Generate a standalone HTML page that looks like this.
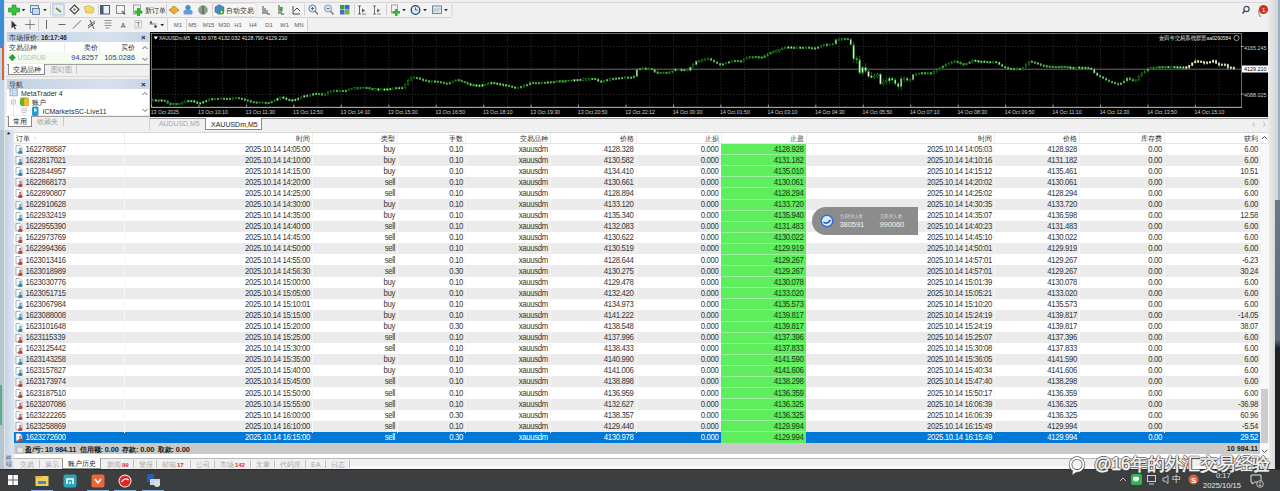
<!DOCTYPE html><html><head><meta charset="utf-8"><style>
*{margin:0;padding:0;box-sizing:border-box}
html,body{width:1280px;height:491px;overflow:hidden;background:#f0f0f0;font-family:"Liberation Sans",sans-serif;color:#303030}
.a{position:absolute}
.t{position:absolute;white-space:nowrap;font-size:7.1px;line-height:11px}
.r{text-align:right}
</style></head><body>

<div class="a" style="left:0;top:0;width:3.5px;height:48px;background:#3d8ed8"></div>
<div class="a" style="left:0;top:48px;width:3.5px;height:82px;background:#c4d6e8"></div>
<div class="a" style="left:2px;top:45px;width:1.5px;height:35px;background:#d0683e"></div>
<div class="a" style="left:0;top:130px;width:3.5px;height:339px;background:#b4c6d2"></div>
<div class="a" style="left:0;top:385px;width:1.5px;height:40px;background:#5aae8e"></div>
<div class="a" style="left:3.5px;top:0;width:2.5px;height:469px;background:#e4e4e4"></div>
<div class="a" style="left:5px;top:0;width:1275px;height:2px;background:#f3edf0"></div>
<div class="a" style="left:5px;top:2px;width:1263px;height:1px;background:#d8d8d8"></div>
<div class="a" style="left:5px;top:16.5px;width:447px;height:1px;background:#d4d4d4"></div>
<div class="a" style="left:5px;top:3px;width:447px;height:13.5px;background:#f2f2f2"></div>
<div class="a" style="left:5px;top:17.5px;width:303px;height:14.5px;background:#f2f2f2"></div>
<svg class="a" style="left:0;top:0" width="460" height="32"><line x1="50.5" y1="4" x2="50.5" y2="15.5" stroke="#d0d0d0" stroke-width="1"/><line x1="98.5" y1="4" x2="98.5" y2="15.5" stroke="#d0d0d0" stroke-width="1"/><line x1="166.5" y1="4" x2="166.5" y2="15.5" stroke="#d0d0d0" stroke-width="1"/><line x1="212.5" y1="4" x2="212.5" y2="15.5" stroke="#d0d0d0" stroke-width="1"/><line x1="255.5" y1="4" x2="255.5" y2="15.5" stroke="#d0d0d0" stroke-width="1"/><line x1="304.5" y1="4" x2="304.5" y2="15.5" stroke="#d0d0d0" stroke-width="1"/><line x1="354.5" y1="4" x2="354.5" y2="15.5" stroke="#d0d0d0" stroke-width="1"/><line x1="386.5" y1="4" x2="386.5" y2="15.5" stroke="#d0d0d0" stroke-width="1"/><line x1="452" y1="4" x2="452" y2="15.5" stroke="#d0d0d0" stroke-width="1"/><rect x="168" y="18" width="139.5" height="13.5" fill="#f6f6f6"/><rect x="213" y="3.5" width="43" height="13" fill="#f7f7f7" stroke="#dadada" stroke-width="0.6"/><rect x="52.5" y="3.5" width="12" height="13" fill="#eef3f8" stroke="#d6dde6" stroke-width="0.6"/><line x1="38.5" y1="18.5" x2="38.5" y2="31" stroke="#d0d0d0" stroke-width="1"/><line x1="167.5" y1="18.5" x2="167.5" y2="31" stroke="#d0d0d0" stroke-width="1"/><line x1="186.5" y1="18.5" x2="186.5" y2="31" stroke="#d0d0d0" stroke-width="1"/><line x1="307.5" y1="18.5" x2="307.5" y2="31" stroke="#d0d0d0" stroke-width="1"/><path d="M12 5 H16 V8 H19.5 V12 H16 V15 H12 V12 H8.5 V8 H12 Z" fill="#3cc03c" stroke="#1e8a1e" stroke-width="0.6"/><path d="M21.7 9 L25.3 9 L23.5 11.2 Z" fill="#222"/><rect x="30.5" y="5.5" width="8" height="7" fill="#dce8f4" stroke="#5a7aa0" stroke-width="0.9"/><rect x="32.5" y="8.5" width="7" height="6" fill="#c8d8ea" stroke="#5a7aa0" stroke-width="0.9"/><path d="M43.2 9 L46.8 9 L45 11.2 Z" fill="#222"/><rect x="53" y="4" width="11" height="11" fill="#e4eef8" stroke="#9ab4d0" stroke-width="0.7"/><path d="M56 8 L61 12" stroke="#8a8a30" stroke-width="1.8"/><path d="M74.5 5 L79 9.5 L74.5 14 L70 9.5 Z" fill="none" stroke="#444" stroke-width="1.1"/><circle cx="74.5" cy="9.5" r="1" fill="#444"/><path d="M84 7 L89 5.5 L94 8 L93 13 L86 13 Z" fill="#f2d86a" stroke="#c8a838" stroke-width="0.6"/><rect x="100.5" y="5.5" width="9" height="8.5" fill="#e8f0f8" stroke="#4a5a70" stroke-width="1"/><rect x="100.5" y="5.5" width="3" height="8.5" fill="#4a5a70"/><rect x="116.5" y="5.5" width="8" height="8" fill="#f4f4f4" stroke="#808080" stroke-width="0.9"/><path d="M122 11 L125 14.5" stroke="#6a5a40" stroke-width="1.2"/><rect x="133.5" y="5" width="7" height="9" fill="#f0f0f0" stroke="#909090" stroke-width="0.8"/><path d="M137 8 H140 V10.5 H142.5 V13.5 H140 V16 H137 V13.5 H134.5 V10.5 H137 Z" fill="#2eb82e"/><text x="145" y="12.8" font-family="Liberation Sans" font-size="7.2" fill="#2a2a2a" textLength="20.5" lengthAdjust="spacingAndGlyphs">新订单</text><path d="M169 10 L174 6 L179 10 L174 14 Z" fill="#e8b030" stroke="#a87818" stroke-width="0.7"/><circle cx="188" cy="7.5" r="2.6" fill="#4a8ad0"/><rect x="183.5" y="10" width="9" height="4.5" rx="1.5" fill="#6a9ad8"/><circle cx="203" cy="10" r="4.5" fill="#8aa08a" stroke="#a0a0a0" stroke-width="0.6"/><path d="M203 6 V14" stroke="#3a6a3a" stroke-width="1.2"/><path d="M215 7 L219 4.5 L224 7 V12 L219 14.5 L215 12 Z" fill="#4a88c8" stroke="#3a6a9a" stroke-width="0.5"/><circle cx="221.5" cy="12" r="2.5" fill="#2ea83a"/><circle cx="221.5" cy="12" r="1" fill="#fff"/><text x="226" y="12.8" font-family="Liberation Sans" font-size="7.2" fill="#2a2a2a" textLength="27.5" lengthAdjust="spacingAndGlyphs">自动交易</text><path d="M263 6 V14 M265 8 V14 M267 10 V14 H270" stroke="#333" stroke-width="0.9" fill="none"/><path d="M279 5 V14 M281 7 V14 H284" stroke="#333" stroke-width="0.9" fill="none"/><rect x="279.7" y="7" width="3" height="4" fill="#3aa83a"/><path d="M293 6 V14 H300 M294 11 L297 8 L300 11" stroke="#333" stroke-width="0.9" fill="none"/><circle cx="312.5" cy="8.5" r="3.6" fill="#d0e0f0" stroke="#5a7ab0" stroke-width="0.9"/><path d="M311 8.5 H314 M312.5 7 V10" stroke="#3a5a90" stroke-width="0.8"/><path d="M315 11 L318 14.5" stroke="#8a7050" stroke-width="1.3"/><circle cx="328" cy="8.5" r="3.6" fill="#d0e0f0" stroke="#7a9ac0" stroke-width="0.9"/><path d="M326.5 8.5 H329.5" stroke="#3a5a90" stroke-width="0.8"/><path d="M330.5 11 L333.5 14.5" stroke="#8a7050" stroke-width="1.3"/><rect x="340" y="5" width="4.5" height="4.5" fill="#3a9a4a"/><rect x="345" y="5" width="4.5" height="4.5" fill="#3a6ac8"/><rect x="340" y="10" width="4.5" height="4.5" fill="#4a6ac0"/><rect x="345" y="10" width="4.5" height="4.5" fill="#7ab040"/><path d="M359.5 6 V14 M358 14 H361 M358 6 H361" stroke="#444" stroke-width="0.8" fill="none"/><path d="M362 8.5 L365 10.5 L362 12.5 Z" fill="#555"/><path d="M362 14 H366" stroke="#666" stroke-width="0.8"/><path d="M374.5 6 V14 M373 14 H376 M373 6 H376" stroke="#555" stroke-width="0.8" fill="none"/><path d="M377 8.5 L380 10.5 L377 12.5 Z" fill="#666"/><path d="M377 14 H381" stroke="#777" stroke-width="0.8"/><rect x="391.5" y="5" width="6" height="8" fill="#f0f0f0" stroke="#909090" stroke-width="0.8"/><path d="M395 9 H397.5 V11 H400 V13.5 H397.5 V16 H395 V13.5 H392.5 V11 H395 Z" fill="#2eb82e"/><path d="M402.2 9 L405.8 9 L404 11.2 Z" fill="#222"/><circle cx="415.5" cy="10" r="4.3" fill="#dce8f4" stroke="#2a4a7a" stroke-width="1.3"/><path d="M415.5 7.5 V10 H417.5" stroke="#2a4a7a" stroke-width="0.8" fill="none"/><path d="M423.2 9 L426.8 9 L425 11.2 Z" fill="#222"/><rect x="432.5" y="6" width="9" height="7.5" fill="#e0e8f0" stroke="#6a7a8a" stroke-width="0.9"/><path d="M433 9 H441 M433 11 H439" stroke="#8a9aaa" stroke-width="0.6"/><path d="M444.2 9 L447.8 9 L446 11.2 Z" fill="#222"/><path d="M11.5 20.5 L11.5 28.5 L13.5 26.5 L15 29.5 L16 29 L14.7 26 L17 26 Z" fill="#333"/><path d="M30 19.5 V29.5 M25 24.5 H35" stroke="#666" stroke-width="0.8"/><path d="M46.5 20 V29" stroke="#555" stroke-width="0.9"/><path d="M58.5 24.5 H65.5" stroke="#555" stroke-width="0.9"/><path d="M73 28.5 L81 20.5" stroke="#555" stroke-width="0.9"/><path d="M88 26 L95 21 M88 28 L95 23 M90 20 L94 29" stroke="#444" stroke-width="0.9"/><path d="M104.5 20.5 H111.5 M104.5 23 H111.5 M104.5 25.5 H111.5 M105.5 28 H109.5" stroke="#666" stroke-width="0.7"/><text x="120.8" y="28" font-family="Liberation Sans" font-size="7" fill="#444">A</text><rect x="135" y="20.5" width="6.5" height="7.5" fill="none" stroke="#aaa" stroke-width="0.6"/><text x="136.3" y="27.3" font-family="Liberation Sans" font-size="6.5" fill="#555">T</text><circle cx="151" cy="22.5" r="1.2" fill="#555"/><circle cx="155.5" cy="26.5" r="1.3" fill="#333"/><path d="M149.5 24 L156.5 24" stroke="#666" stroke-width="0.8"/><path d="M160.39999999999998 24 L164.0 24 L162.2 26.2 Z" fill="#222"/><text x="178" y="27" text-anchor="middle" font-family="Liberation Sans" font-size="6" fill="#5c5c5c">M1</text><text x="192.5" y="27" text-anchor="middle" font-family="Liberation Sans" font-size="6" fill="#5c5c5c">M5</text><text x="208.5" y="27" text-anchor="middle" font-family="Liberation Sans" font-size="6" fill="#5c5c5c">M15</text><text x="224" y="27" text-anchor="middle" font-family="Liberation Sans" font-size="6" fill="#5c5c5c">M30</text><text x="238" y="27" text-anchor="middle" font-family="Liberation Sans" font-size="6" fill="#5c5c5c">H1</text><text x="253" y="27" text-anchor="middle" font-family="Liberation Sans" font-size="6" fill="#5c5c5c">H4</text><text x="269" y="27" text-anchor="middle" font-family="Liberation Sans" font-size="6" fill="#5c5c5c">D1</text><text x="284.5" y="27" text-anchor="middle" font-family="Liberation Sans" font-size="6" fill="#5c5c5c">W1</text><text x="299" y="27" text-anchor="middle" font-family="Liberation Sans" font-size="6" fill="#5c5c5c">MN</text></svg>
<svg class="a" style="left:1238px;top:3px" width="32" height="14"><circle cx="8.5" cy="6" r="2.6" fill="none" stroke="#3a4a6a" stroke-width="1.2"/><path d="M6.5 8 L4.5 10.5" stroke="#3a4a6a" stroke-width="1.5"/><path d="M21 7 Q20 12 23 14" stroke="#8a9aa0" stroke-width="1.2" fill="none"/><circle cx="25.5" cy="6.5" r="4.6" fill="#cc3422"/><text x="24" y="8.8" font-size="6" fill="#fff" font-family="Liberation Sans">1</text></svg>
<svg class="a" style="left:150px;top:32px" width="1118" height="85" viewBox="150 32 1118 85">
<rect x="150" y="32" width="1118" height="85" fill="#000"/>
<line x1="151.5" y1="33.5" x2="151.5" y2="107" stroke="#4a4a4a" stroke-width="0.8" stroke-dasharray="1 2"/>
<line x1="175.2" y1="33.5" x2="175.2" y2="107" stroke="#4a4a4a" stroke-width="0.8" stroke-dasharray="1 2"/>
<line x1="198.9" y1="33.5" x2="198.9" y2="107" stroke="#4a4a4a" stroke-width="0.8" stroke-dasharray="1 2"/>
<line x1="222.7" y1="33.5" x2="222.7" y2="107" stroke="#4a4a4a" stroke-width="0.8" stroke-dasharray="1 2"/>
<line x1="246.4" y1="33.5" x2="246.4" y2="107" stroke="#4a4a4a" stroke-width="0.8" stroke-dasharray="1 2"/>
<line x1="270.1" y1="33.5" x2="270.1" y2="107" stroke="#4a4a4a" stroke-width="0.8" stroke-dasharray="1 2"/>
<line x1="293.9" y1="33.5" x2="293.9" y2="107" stroke="#4a4a4a" stroke-width="0.8" stroke-dasharray="1 2"/>
<line x1="317.6" y1="33.5" x2="317.6" y2="107" stroke="#4a4a4a" stroke-width="0.8" stroke-dasharray="1 2"/>
<line x1="341.3" y1="33.5" x2="341.3" y2="107" stroke="#4a4a4a" stroke-width="0.8" stroke-dasharray="1 2"/>
<line x1="365.0" y1="33.5" x2="365.0" y2="107" stroke="#4a4a4a" stroke-width="0.8" stroke-dasharray="1 2"/>
<line x1="388.8" y1="33.5" x2="388.8" y2="107" stroke="#4a4a4a" stroke-width="0.8" stroke-dasharray="1 2"/>
<line x1="412.5" y1="33.5" x2="412.5" y2="107" stroke="#4a4a4a" stroke-width="0.8" stroke-dasharray="1 2"/>
<line x1="436.2" y1="33.5" x2="436.2" y2="107" stroke="#4a4a4a" stroke-width="0.8" stroke-dasharray="1 2"/>
<line x1="459.9" y1="33.5" x2="459.9" y2="107" stroke="#4a4a4a" stroke-width="0.8" stroke-dasharray="1 2"/>
<line x1="483.7" y1="33.5" x2="483.7" y2="107" stroke="#4a4a4a" stroke-width="0.8" stroke-dasharray="1 2"/>
<line x1="507.4" y1="33.5" x2="507.4" y2="107" stroke="#4a4a4a" stroke-width="0.8" stroke-dasharray="1 2"/>
<line x1="531.1" y1="33.5" x2="531.1" y2="107" stroke="#4a4a4a" stroke-width="0.8" stroke-dasharray="1 2"/>
<line x1="554.8" y1="33.5" x2="554.8" y2="107" stroke="#4a4a4a" stroke-width="0.8" stroke-dasharray="1 2"/>
<line x1="578.6" y1="33.5" x2="578.6" y2="107" stroke="#4a4a4a" stroke-width="0.8" stroke-dasharray="1 2"/>
<line x1="602.3" y1="33.5" x2="602.3" y2="107" stroke="#4a4a4a" stroke-width="0.8" stroke-dasharray="1 2"/>
<line x1="626.0" y1="33.5" x2="626.0" y2="107" stroke="#4a4a4a" stroke-width="0.8" stroke-dasharray="1 2"/>
<line x1="649.7" y1="33.5" x2="649.7" y2="107" stroke="#4a4a4a" stroke-width="0.8" stroke-dasharray="1 2"/>
<line x1="673.5" y1="33.5" x2="673.5" y2="107" stroke="#4a4a4a" stroke-width="0.8" stroke-dasharray="1 2"/>
<line x1="697.2" y1="33.5" x2="697.2" y2="107" stroke="#4a4a4a" stroke-width="0.8" stroke-dasharray="1 2"/>
<line x1="720.9" y1="33.5" x2="720.9" y2="107" stroke="#4a4a4a" stroke-width="0.8" stroke-dasharray="1 2"/>
<line x1="744.6" y1="33.5" x2="744.6" y2="107" stroke="#4a4a4a" stroke-width="0.8" stroke-dasharray="1 2"/>
<line x1="768.4" y1="33.5" x2="768.4" y2="107" stroke="#4a4a4a" stroke-width="0.8" stroke-dasharray="1 2"/>
<line x1="792.1" y1="33.5" x2="792.1" y2="107" stroke="#4a4a4a" stroke-width="0.8" stroke-dasharray="1 2"/>
<line x1="815.8" y1="33.5" x2="815.8" y2="107" stroke="#4a4a4a" stroke-width="0.8" stroke-dasharray="1 2"/>
<line x1="839.5" y1="33.5" x2="839.5" y2="107" stroke="#4a4a4a" stroke-width="0.8" stroke-dasharray="1 2"/>
<line x1="863.3" y1="33.5" x2="863.3" y2="107" stroke="#4a4a4a" stroke-width="0.8" stroke-dasharray="1 2"/>
<line x1="887.0" y1="33.5" x2="887.0" y2="107" stroke="#4a4a4a" stroke-width="0.8" stroke-dasharray="1 2"/>
<line x1="910.7" y1="33.5" x2="910.7" y2="107" stroke="#4a4a4a" stroke-width="0.8" stroke-dasharray="1 2"/>
<line x1="934.4" y1="33.5" x2="934.4" y2="107" stroke="#4a4a4a" stroke-width="0.8" stroke-dasharray="1 2"/>
<line x1="958.2" y1="33.5" x2="958.2" y2="107" stroke="#4a4a4a" stroke-width="0.8" stroke-dasharray="1 2"/>
<line x1="981.9" y1="33.5" x2="981.9" y2="107" stroke="#4a4a4a" stroke-width="0.8" stroke-dasharray="1 2"/>
<line x1="1005.6" y1="33.5" x2="1005.6" y2="107" stroke="#4a4a4a" stroke-width="0.8" stroke-dasharray="1 2"/>
<line x1="1029.3" y1="33.5" x2="1029.3" y2="107" stroke="#4a4a4a" stroke-width="0.8" stroke-dasharray="1 2"/>
<line x1="1053.1" y1="33.5" x2="1053.1" y2="107" stroke="#4a4a4a" stroke-width="0.8" stroke-dasharray="1 2"/>
<line x1="1076.8" y1="33.5" x2="1076.8" y2="107" stroke="#4a4a4a" stroke-width="0.8" stroke-dasharray="1 2"/>
<line x1="1100.5" y1="33.5" x2="1100.5" y2="107" stroke="#4a4a4a" stroke-width="0.8" stroke-dasharray="1 2"/>
<line x1="1124.2" y1="33.5" x2="1124.2" y2="107" stroke="#4a4a4a" stroke-width="0.8" stroke-dasharray="1 2"/>
<line x1="1148.0" y1="33.5" x2="1148.0" y2="107" stroke="#4a4a4a" stroke-width="0.8" stroke-dasharray="1 2"/>
<line x1="1171.7" y1="33.5" x2="1171.7" y2="107" stroke="#4a4a4a" stroke-width="0.8" stroke-dasharray="1 2"/>
<line x1="1195.4" y1="33.5" x2="1195.4" y2="107" stroke="#4a4a4a" stroke-width="0.8" stroke-dasharray="1 2"/>
<line x1="1219.1" y1="33.5" x2="1219.1" y2="107" stroke="#4a4a4a" stroke-width="0.8" stroke-dasharray="1 2"/>
<line x1="151" y1="46.5" x2="1241" y2="46.5" stroke="#3e3e3e" stroke-width="0.8" stroke-dasharray="1 2"/>
<line x1="151" y1="94.5" x2="1241" y2="94.5" stroke="#3e3e3e" stroke-width="0.8" stroke-dasharray="1 2"/>
<line x1="151" y1="69.2" x2="1241" y2="69.2" stroke="#484848" stroke-width="1.6"/>
<rect x="151.5" y="33.5" width="1090" height="74" fill="none" stroke="#9a9a9a" stroke-width="0.7"/><line x1="151" y1="107.3" x2="1242" y2="107.3" stroke="#c0c0c0" stroke-width="0.8"/>
<line x1="152.8" y1="99.8" x2="152.8" y2="101.8" stroke="#178017" stroke-width="0.8"/>
<rect x="152.0" y="99.7" width="1.5" height="1.6" fill="#000000" stroke="#1f9a1f" stroke-width="0.45"/>
<line x1="155.8" y1="99.5" x2="155.8" y2="101.1" stroke="#178017" stroke-width="0.8"/>
<rect x="155.0" y="99.7" width="1.5" height="1.6" fill="#eef4ea" stroke="#1f9a1f" stroke-width="0.45"/>
<line x1="158.7" y1="100.2" x2="158.7" y2="101.6" stroke="#178017" stroke-width="0.8"/>
<rect x="157.9" y="99.8" width="1.5" height="1.6" fill="#eef4ea" stroke="#1f9a1f" stroke-width="0.45"/>
<line x1="161.7" y1="99.9" x2="161.7" y2="101.6" stroke="#178017" stroke-width="0.8"/>
<rect x="160.9" y="99.7" width="1.5" height="1.6" fill="#eef4ea" stroke="#1f9a1f" stroke-width="0.45"/>
<line x1="164.7" y1="99.7" x2="164.7" y2="102.3" stroke="#178017" stroke-width="0.8"/>
<rect x="163.9" y="99.9" width="1.5" height="1.6" fill="#eef4ea" stroke="#1f9a1f" stroke-width="0.45"/>
<line x1="167.7" y1="99.9" x2="167.7" y2="104.0" stroke="#178017" stroke-width="0.8"/>
<rect x="166.8" y="101.1" width="1.5" height="2.0" fill="#eef4ea" stroke="#1f9a1f" stroke-width="0.45"/>
<line x1="170.6" y1="102.6" x2="170.6" y2="105.9" stroke="#178017" stroke-width="0.8"/>
<rect x="169.8" y="102.9" width="1.5" height="1.6" fill="#eef4ea" stroke="#1f9a1f" stroke-width="0.45"/>
<line x1="173.6" y1="103.3" x2="173.6" y2="104.9" stroke="#178017" stroke-width="0.8"/>
<rect x="172.8" y="103.3" width="1.5" height="1.6" fill="#000000" stroke="#1f9a1f" stroke-width="0.45"/>
<line x1="176.6" y1="103.2" x2="176.6" y2="105.4" stroke="#178017" stroke-width="0.8"/>
<rect x="175.8" y="103.2" width="1.5" height="1.6" fill="#eef4ea" stroke="#1f9a1f" stroke-width="0.45"/>
<line x1="179.5" y1="102.7" x2="179.5" y2="105.4" stroke="#178017" stroke-width="0.8"/>
<rect x="178.7" y="103.1" width="1.5" height="1.6" fill="#000000" stroke="#1f9a1f" stroke-width="0.45"/>
<line x1="182.5" y1="101.5" x2="182.5" y2="105.0" stroke="#178017" stroke-width="0.8"/>
<rect x="181.7" y="102.1" width="1.5" height="1.6" fill="#000000" stroke="#1f9a1f" stroke-width="0.45"/>
<line x1="185.5" y1="100.0" x2="185.5" y2="103.1" stroke="#178017" stroke-width="0.8"/>
<rect x="184.7" y="100.8" width="1.5" height="1.6" fill="#000000" stroke="#1f9a1f" stroke-width="0.45"/>
<line x1="188.4" y1="99.8" x2="188.4" y2="101.9" stroke="#178017" stroke-width="0.8"/>
<rect x="187.6" y="100.4" width="1.5" height="1.6" fill="#eef4ea" stroke="#1f9a1f" stroke-width="0.45"/>
<line x1="191.4" y1="99.9" x2="191.4" y2="102.8" stroke="#178017" stroke-width="0.8"/>
<rect x="190.6" y="100.3" width="1.5" height="1.6" fill="#eef4ea" stroke="#1f9a1f" stroke-width="0.45"/>
<line x1="194.4" y1="99.3" x2="194.4" y2="102.4" stroke="#178017" stroke-width="0.8"/>
<rect x="193.6" y="100.7" width="1.5" height="1.6" fill="#eef4ea" stroke="#1f9a1f" stroke-width="0.45"/>
<line x1="197.3" y1="100.4" x2="197.3" y2="104.0" stroke="#178017" stroke-width="0.8"/>
<rect x="196.5" y="101.9" width="1.5" height="1.6" fill="#eef4ea" stroke="#1f9a1f" stroke-width="0.45"/>
<line x1="200.3" y1="102.7" x2="200.3" y2="104.8" stroke="#178017" stroke-width="0.8"/>
<rect x="199.5" y="102.5" width="1.5" height="1.6" fill="#eef4ea" stroke="#1f9a1f" stroke-width="0.45"/>
<line x1="203.3" y1="100.2" x2="203.3" y2="103.9" stroke="#178017" stroke-width="0.8"/>
<rect x="202.5" y="101.6" width="1.5" height="1.6" fill="#eef4ea" stroke="#1f9a1f" stroke-width="0.45"/>
<line x1="206.3" y1="99.3" x2="206.3" y2="102.8" stroke="#178017" stroke-width="0.8"/>
<rect x="205.5" y="100.3" width="1.5" height="1.6" fill="#eef4ea" stroke="#1f9a1f" stroke-width="0.45"/>
<line x1="209.2" y1="98.3" x2="209.2" y2="101.8" stroke="#178017" stroke-width="0.8"/>
<rect x="208.4" y="99.1" width="1.5" height="1.6" fill="#000000" stroke="#1f9a1f" stroke-width="0.45"/>
<line x1="212.2" y1="97.9" x2="212.2" y2="101.1" stroke="#178017" stroke-width="0.8"/>
<rect x="211.4" y="98.4" width="1.5" height="1.6" fill="#eef4ea" stroke="#1f9a1f" stroke-width="0.45"/>
<line x1="215.2" y1="97.9" x2="215.2" y2="100.5" stroke="#178017" stroke-width="0.8"/>
<rect x="214.4" y="98.2" width="1.5" height="1.6" fill="#000000" stroke="#1f9a1f" stroke-width="0.45"/>
<line x1="218.1" y1="98.2" x2="218.1" y2="99.5" stroke="#178017" stroke-width="0.8"/>
<rect x="217.3" y="98.1" width="1.5" height="1.6" fill="#eef4ea" stroke="#1f9a1f" stroke-width="0.45"/>
<line x1="221.1" y1="97.2" x2="221.1" y2="99.5" stroke="#178017" stroke-width="0.8"/>
<rect x="220.3" y="98.0" width="1.5" height="1.6" fill="#000000" stroke="#1f9a1f" stroke-width="0.45"/>
<line x1="224.1" y1="97.1" x2="224.1" y2="99.4" stroke="#178017" stroke-width="0.8"/>
<rect x="223.3" y="98.0" width="1.5" height="1.6" fill="#eef4ea" stroke="#1f9a1f" stroke-width="0.45"/>
<line x1="227.0" y1="97.7" x2="227.0" y2="100.6" stroke="#178017" stroke-width="0.8"/>
<rect x="226.2" y="98.1" width="1.5" height="1.6" fill="#eef4ea" stroke="#1f9a1f" stroke-width="0.45"/>
<line x1="230.0" y1="98.1" x2="230.0" y2="99.8" stroke="#178017" stroke-width="0.8"/>
<rect x="229.2" y="98.0" width="1.5" height="1.6" fill="#eef4ea" stroke="#1f9a1f" stroke-width="0.45"/>
<line x1="233.0" y1="96.6" x2="233.0" y2="100.6" stroke="#178017" stroke-width="0.8"/>
<rect x="232.2" y="97.8" width="1.5" height="1.6" fill="#000000" stroke="#1f9a1f" stroke-width="0.45"/>
<line x1="236.0" y1="97.2" x2="236.0" y2="99.0" stroke="#178017" stroke-width="0.8"/>
<rect x="235.2" y="97.3" width="1.5" height="1.6" fill="#000000" stroke="#1f9a1f" stroke-width="0.45"/>
<line x1="238.9" y1="97.1" x2="238.9" y2="98.9" stroke="#178017" stroke-width="0.8"/>
<rect x="238.1" y="97.4" width="1.5" height="1.6" fill="#eef4ea" stroke="#1f9a1f" stroke-width="0.45"/>
<line x1="241.9" y1="97.6" x2="241.9" y2="100.3" stroke="#178017" stroke-width="0.8"/>
<rect x="241.1" y="98.0" width="1.5" height="1.6" fill="#eef4ea" stroke="#1f9a1f" stroke-width="0.45"/>
<line x1="244.9" y1="97.8" x2="244.9" y2="101.4" stroke="#178017" stroke-width="0.8"/>
<rect x="244.1" y="98.9" width="1.5" height="1.6" fill="#eef4ea" stroke="#1f9a1f" stroke-width="0.45"/>
<line x1="247.8" y1="99.0" x2="247.8" y2="101.3" stroke="#178017" stroke-width="0.8"/>
<rect x="247.0" y="99.8" width="1.5" height="1.6" fill="#eef4ea" stroke="#1f9a1f" stroke-width="0.45"/>
<line x1="250.8" y1="99.4" x2="250.8" y2="103.5" stroke="#178017" stroke-width="0.8"/>
<rect x="250.0" y="100.6" width="1.5" height="1.6" fill="#eef4ea" stroke="#1f9a1f" stroke-width="0.45"/>
<line x1="253.8" y1="100.9" x2="253.8" y2="103.5" stroke="#178017" stroke-width="0.8"/>
<rect x="253.0" y="101.4" width="1.5" height="1.6" fill="#eef4ea" stroke="#1f9a1f" stroke-width="0.45"/>
<line x1="256.7" y1="101.3" x2="256.7" y2="103.2" stroke="#178017" stroke-width="0.8"/>
<rect x="255.9" y="101.8" width="1.5" height="1.6" fill="#eef4ea" stroke="#1f9a1f" stroke-width="0.45"/>
<line x1="259.7" y1="102.0" x2="259.7" y2="103.3" stroke="#178017" stroke-width="0.8"/>
<rect x="258.9" y="101.9" width="1.5" height="1.6" fill="#000000" stroke="#1f9a1f" stroke-width="0.45"/>
<line x1="262.7" y1="102.3" x2="262.7" y2="103.3" stroke="#178017" stroke-width="0.8"/>
<rect x="261.9" y="101.9" width="1.5" height="1.6" fill="#000000" stroke="#1f9a1f" stroke-width="0.45"/>
<line x1="265.7" y1="102.3" x2="265.7" y2="104.5" stroke="#178017" stroke-width="0.8"/>
<rect x="264.9" y="102.0" width="1.5" height="1.6" fill="#eef4ea" stroke="#1f9a1f" stroke-width="0.45"/>
<line x1="268.6" y1="102.3" x2="268.6" y2="103.7" stroke="#178017" stroke-width="0.8"/>
<rect x="267.8" y="102.1" width="1.5" height="1.6" fill="#eef4ea" stroke="#1f9a1f" stroke-width="0.45"/>
<line x1="271.6" y1="100.5" x2="271.6" y2="103.5" stroke="#178017" stroke-width="0.8"/>
<rect x="270.8" y="101.3" width="1.5" height="1.6" fill="#eef4ea" stroke="#1f9a1f" stroke-width="0.45"/>
<line x1="274.6" y1="99.4" x2="274.6" y2="102.4" stroke="#178017" stroke-width="0.8"/>
<rect x="273.8" y="100.1" width="1.5" height="1.6" fill="#000000" stroke="#1f9a1f" stroke-width="0.45"/>
<line x1="277.5" y1="97.5" x2="277.5" y2="101.2" stroke="#178017" stroke-width="0.8"/>
<rect x="276.7" y="98.4" width="1.5" height="2.0" fill="#eef4ea" stroke="#1f9a1f" stroke-width="0.45"/>
<line x1="280.5" y1="96.8" x2="280.5" y2="100.1" stroke="#178017" stroke-width="0.8"/>
<rect x="279.7" y="97.0" width="1.5" height="1.6" fill="#000000" stroke="#1f9a1f" stroke-width="0.45"/>
<line x1="283.5" y1="96.1" x2="283.5" y2="98.6" stroke="#178017" stroke-width="0.8"/>
<rect x="282.7" y="96.9" width="1.5" height="1.6" fill="#eef4ea" stroke="#1f9a1f" stroke-width="0.45"/>
<line x1="286.5" y1="96.4" x2="286.5" y2="101.0" stroke="#178017" stroke-width="0.8"/>
<rect x="285.7" y="98.0" width="1.5" height="1.6" fill="#eef4ea" stroke="#1f9a1f" stroke-width="0.45"/>
<line x1="289.4" y1="98.7" x2="289.4" y2="101.4" stroke="#178017" stroke-width="0.8"/>
<rect x="288.6" y="99.2" width="1.5" height="1.6" fill="#eef4ea" stroke="#1f9a1f" stroke-width="0.45"/>
<line x1="292.4" y1="98.9" x2="292.4" y2="101.7" stroke="#178017" stroke-width="0.8"/>
<rect x="291.6" y="99.6" width="1.5" height="1.6" fill="#eef4ea" stroke="#1f9a1f" stroke-width="0.45"/>
<line x1="295.4" y1="98.6" x2="295.4" y2="101.9" stroke="#178017" stroke-width="0.8"/>
<rect x="294.6" y="99.0" width="1.5" height="1.6" fill="#eef4ea" stroke="#1f9a1f" stroke-width="0.45"/>
<line x1="298.3" y1="97.0" x2="298.3" y2="100.9" stroke="#178017" stroke-width="0.8"/>
<rect x="297.5" y="98.1" width="1.5" height="1.6" fill="#eef4ea" stroke="#1f9a1f" stroke-width="0.45"/>
<line x1="301.3" y1="95.9" x2="301.3" y2="99.4" stroke="#178017" stroke-width="0.8"/>
<rect x="300.5" y="97.0" width="1.5" height="1.6" fill="#000000" stroke="#1f9a1f" stroke-width="0.45"/>
<line x1="304.3" y1="95.1" x2="304.3" y2="97.7" stroke="#178017" stroke-width="0.8"/>
<rect x="303.5" y="95.6" width="1.5" height="1.6" fill="#eef4ea" stroke="#1f9a1f" stroke-width="0.45"/>
<line x1="307.2" y1="94.8" x2="307.2" y2="97.5" stroke="#178017" stroke-width="0.8"/>
<rect x="306.4" y="95.0" width="1.5" height="1.6" fill="#eef4ea" stroke="#1f9a1f" stroke-width="0.45"/>
<line x1="310.2" y1="94.2" x2="310.2" y2="96.5" stroke="#178017" stroke-width="0.8"/>
<rect x="309.4" y="94.6" width="1.5" height="1.6" fill="#000000" stroke="#1f9a1f" stroke-width="0.45"/>
<line x1="313.2" y1="93.1" x2="313.2" y2="96.3" stroke="#178017" stroke-width="0.8"/>
<rect x="312.4" y="93.6" width="1.5" height="1.6" fill="#eef4ea" stroke="#1f9a1f" stroke-width="0.45"/>
<line x1="316.2" y1="92.7" x2="316.2" y2="95.1" stroke="#178017" stroke-width="0.8"/>
<rect x="315.4" y="93.0" width="1.5" height="1.6" fill="#eef4ea" stroke="#1f9a1f" stroke-width="0.45"/>
<line x1="319.1" y1="93.3" x2="319.1" y2="95.4" stroke="#178017" stroke-width="0.8"/>
<rect x="318.3" y="93.2" width="1.5" height="1.6" fill="#eef4ea" stroke="#1f9a1f" stroke-width="0.45"/>
<line x1="322.1" y1="92.6" x2="322.1" y2="95.9" stroke="#178017" stroke-width="0.8"/>
<rect x="321.3" y="93.5" width="1.5" height="1.6" fill="#eef4ea" stroke="#1f9a1f" stroke-width="0.45"/>
<line x1="325.1" y1="93.8" x2="325.1" y2="96.0" stroke="#178017" stroke-width="0.8"/>
<rect x="324.3" y="93.7" width="1.5" height="1.6" fill="#000000" stroke="#1f9a1f" stroke-width="0.45"/>
<line x1="328.0" y1="90.6" x2="328.0" y2="95.4" stroke="#178017" stroke-width="0.8"/>
<rect x="327.2" y="92.3" width="1.5" height="2.1" fill="#000000" stroke="#1f9a1f" stroke-width="0.45"/>
<line x1="331.0" y1="89.9" x2="331.0" y2="92.9" stroke="#178017" stroke-width="0.8"/>
<rect x="330.2" y="91.0" width="1.5" height="1.6" fill="#000000" stroke="#1f9a1f" stroke-width="0.45"/>
<line x1="334.0" y1="89.1" x2="334.0" y2="92.8" stroke="#178017" stroke-width="0.8"/>
<rect x="333.2" y="90.2" width="1.5" height="1.6" fill="#000000" stroke="#1f9a1f" stroke-width="0.45"/>
<line x1="336.9" y1="89.0" x2="336.9" y2="92.5" stroke="#178017" stroke-width="0.8"/>
<rect x="336.1" y="90.2" width="1.5" height="1.6" fill="#eef4ea" stroke="#1f9a1f" stroke-width="0.45"/>
<line x1="339.9" y1="89.7" x2="339.9" y2="91.8" stroke="#178017" stroke-width="0.8"/>
<rect x="339.1" y="90.3" width="1.5" height="1.6" fill="#000000" stroke="#1f9a1f" stroke-width="0.45"/>
<line x1="342.9" y1="89.6" x2="342.9" y2="92.3" stroke="#178017" stroke-width="0.8"/>
<rect x="342.1" y="90.2" width="1.5" height="1.6" fill="#eef4ea" stroke="#1f9a1f" stroke-width="0.45"/>
<line x1="345.9" y1="89.4" x2="345.9" y2="92.8" stroke="#178017" stroke-width="0.8"/>
<rect x="345.1" y="90.0" width="1.5" height="1.6" fill="#eef4ea" stroke="#1f9a1f" stroke-width="0.45"/>
<line x1="348.8" y1="88.4" x2="348.8" y2="91.2" stroke="#178017" stroke-width="0.8"/>
<rect x="348.0" y="89.0" width="1.5" height="1.6" fill="#000000" stroke="#1f9a1f" stroke-width="0.45"/>
<line x1="351.8" y1="88.0" x2="351.8" y2="90.1" stroke="#178017" stroke-width="0.8"/>
<rect x="351.0" y="88.1" width="1.5" height="1.6" fill="#000000" stroke="#1f9a1f" stroke-width="0.45"/>
<line x1="354.8" y1="87.4" x2="354.8" y2="89.7" stroke="#178017" stroke-width="0.8"/>
<rect x="354.0" y="87.7" width="1.5" height="1.6" fill="#000000" stroke="#1f9a1f" stroke-width="0.45"/>
<line x1="357.7" y1="87.3" x2="357.7" y2="90.0" stroke="#178017" stroke-width="0.8"/>
<rect x="356.9" y="87.5" width="1.5" height="1.6" fill="#000000" stroke="#1f9a1f" stroke-width="0.45"/>
<line x1="360.7" y1="86.9" x2="360.7" y2="88.7" stroke="#178017" stroke-width="0.8"/>
<rect x="359.9" y="87.4" width="1.5" height="1.6" fill="#000000" stroke="#1f9a1f" stroke-width="0.45"/>
<line x1="363.7" y1="87.4" x2="363.7" y2="89.5" stroke="#178017" stroke-width="0.8"/>
<rect x="362.9" y="87.1" width="1.5" height="1.6" fill="#000000" stroke="#1f9a1f" stroke-width="0.45"/>
<line x1="366.6" y1="86.4" x2="366.6" y2="89.2" stroke="#178017" stroke-width="0.8"/>
<rect x="365.8" y="87.1" width="1.5" height="1.6" fill="#eef4ea" stroke="#1f9a1f" stroke-width="0.45"/>
<line x1="369.6" y1="87.0" x2="369.6" y2="89.8" stroke="#178017" stroke-width="0.8"/>
<rect x="368.8" y="87.5" width="1.5" height="1.6" fill="#eef4ea" stroke="#1f9a1f" stroke-width="0.45"/>
<line x1="372.6" y1="88.1" x2="372.6" y2="90.8" stroke="#178017" stroke-width="0.8"/>
<rect x="371.8" y="88.3" width="1.5" height="1.6" fill="#eef4ea" stroke="#1f9a1f" stroke-width="0.45"/>
<line x1="375.6" y1="88.7" x2="375.6" y2="91.1" stroke="#178017" stroke-width="0.8"/>
<rect x="374.8" y="88.7" width="1.5" height="1.6" fill="#000000" stroke="#1f9a1f" stroke-width="0.45"/>
<line x1="378.5" y1="88.0" x2="378.5" y2="91.3" stroke="#178017" stroke-width="0.8"/>
<rect x="377.7" y="88.7" width="1.5" height="1.6" fill="#eef4ea" stroke="#1f9a1f" stroke-width="0.45"/>
<line x1="381.5" y1="88.3" x2="381.5" y2="90.7" stroke="#178017" stroke-width="0.8"/>
<rect x="380.7" y="88.8" width="1.5" height="1.6" fill="#000000" stroke="#1f9a1f" stroke-width="0.45"/>
<line x1="384.5" y1="88.5" x2="384.5" y2="90.9" stroke="#178017" stroke-width="0.8"/>
<rect x="383.7" y="88.8" width="1.5" height="1.6" fill="#eef4ea" stroke="#1f9a1f" stroke-width="0.45"/>
<line x1="387.4" y1="87.5" x2="387.4" y2="91.1" stroke="#178017" stroke-width="0.8"/>
<rect x="386.6" y="88.7" width="1.5" height="1.6" fill="#eef4ea" stroke="#1f9a1f" stroke-width="0.45"/>
<line x1="390.4" y1="88.4" x2="390.4" y2="90.4" stroke="#178017" stroke-width="0.8"/>
<rect x="389.6" y="88.4" width="1.5" height="1.6" fill="#eef4ea" stroke="#1f9a1f" stroke-width="0.45"/>
<line x1="393.4" y1="88.0" x2="393.4" y2="89.6" stroke="#178017" stroke-width="0.8"/>
<rect x="392.6" y="88.0" width="1.5" height="1.6" fill="#000000" stroke="#1f9a1f" stroke-width="0.45"/>
<line x1="396.3" y1="87.1" x2="396.3" y2="89.0" stroke="#178017" stroke-width="0.8"/>
<rect x="395.5" y="87.4" width="1.5" height="1.6" fill="#eef4ea" stroke="#1f9a1f" stroke-width="0.45"/>
<line x1="399.3" y1="86.1" x2="399.3" y2="89.2" stroke="#178017" stroke-width="0.8"/>
<rect x="398.5" y="87.4" width="1.5" height="1.6" fill="#eef4ea" stroke="#1f9a1f" stroke-width="0.45"/>
<line x1="402.3" y1="86.3" x2="402.3" y2="89.2" stroke="#178017" stroke-width="0.8"/>
<rect x="401.5" y="87.3" width="1.5" height="1.6" fill="#eef4ea" stroke="#1f9a1f" stroke-width="0.45"/>
<line x1="405.3" y1="83.5" x2="405.3" y2="89.3" stroke="#178017" stroke-width="0.8"/>
<rect x="404.5" y="84.2" width="1.5" height="3.4" fill="#000000" stroke="#1f9a1f" stroke-width="0.45"/>
<line x1="408.2" y1="78.5" x2="408.2" y2="85.8" stroke="#178017" stroke-width="0.8"/>
<rect x="407.4" y="80.3" width="1.5" height="3.9" fill="#000000" stroke="#1f9a1f" stroke-width="0.45"/>
<line x1="411.2" y1="76.6" x2="411.2" y2="81.1" stroke="#178017" stroke-width="0.8"/>
<rect x="410.4" y="77.8" width="1.5" height="2.5" fill="#000000" stroke="#1f9a1f" stroke-width="0.45"/>
<line x1="414.2" y1="76.3" x2="414.2" y2="78.1" stroke="#178017" stroke-width="0.8"/>
<rect x="413.4" y="76.9" width="1.5" height="1.6" fill="#000000" stroke="#1f9a1f" stroke-width="0.45"/>
<line x1="417.1" y1="77.3" x2="417.1" y2="78.9" stroke="#178017" stroke-width="0.8"/>
<rect x="416.3" y="77.1" width="1.5" height="1.6" fill="#eef4ea" stroke="#1f9a1f" stroke-width="0.45"/>
<line x1="420.1" y1="76.9" x2="420.1" y2="79.6" stroke="#178017" stroke-width="0.8"/>
<rect x="419.3" y="77.8" width="1.5" height="1.6" fill="#eef4ea" stroke="#1f9a1f" stroke-width="0.45"/>
<line x1="423.1" y1="77.7" x2="423.1" y2="82.2" stroke="#178017" stroke-width="0.8"/>
<rect x="422.3" y="79.0" width="1.5" height="1.6" fill="#eef4ea" stroke="#1f9a1f" stroke-width="0.45"/>
<line x1="426.0" y1="79.7" x2="426.0" y2="81.2" stroke="#178017" stroke-width="0.8"/>
<rect x="425.2" y="79.8" width="1.5" height="1.6" fill="#eef4ea" stroke="#1f9a1f" stroke-width="0.45"/>
<line x1="429.0" y1="80.0" x2="429.0" y2="82.5" stroke="#178017" stroke-width="0.8"/>
<rect x="428.2" y="80.6" width="1.5" height="1.6" fill="#eef4ea" stroke="#1f9a1f" stroke-width="0.45"/>
<line x1="432.0" y1="80.1" x2="432.0" y2="83.5" stroke="#178017" stroke-width="0.8"/>
<rect x="431.2" y="81.1" width="1.5" height="1.6" fill="#000000" stroke="#1f9a1f" stroke-width="0.45"/>
<line x1="435.0" y1="79.9" x2="435.0" y2="82.9" stroke="#178017" stroke-width="0.8"/>
<rect x="434.2" y="80.8" width="1.5" height="1.6" fill="#eef4ea" stroke="#1f9a1f" stroke-width="0.45"/>
<line x1="437.9" y1="81.1" x2="437.9" y2="83.2" stroke="#178017" stroke-width="0.8"/>
<rect x="437.1" y="80.9" width="1.5" height="1.6" fill="#eef4ea" stroke="#1f9a1f" stroke-width="0.45"/>
<line x1="440.9" y1="81.3" x2="440.9" y2="84.3" stroke="#178017" stroke-width="0.8"/>
<rect x="440.1" y="81.4" width="1.5" height="1.6" fill="#eef4ea" stroke="#1f9a1f" stroke-width="0.45"/>
<line x1="443.9" y1="81.1" x2="443.9" y2="83.8" stroke="#178017" stroke-width="0.8"/>
<rect x="443.1" y="82.2" width="1.5" height="1.6" fill="#eef4ea" stroke="#1f9a1f" stroke-width="0.45"/>
<line x1="446.8" y1="82.9" x2="446.8" y2="85.4" stroke="#178017" stroke-width="0.8"/>
<rect x="446.0" y="82.8" width="1.5" height="1.6" fill="#eef4ea" stroke="#1f9a1f" stroke-width="0.45"/>
<line x1="449.8" y1="81.6" x2="449.8" y2="84.9" stroke="#178017" stroke-width="0.8"/>
<rect x="449.0" y="82.3" width="1.5" height="1.6" fill="#eef4ea" stroke="#1f9a1f" stroke-width="0.45"/>
<line x1="452.8" y1="80.7" x2="452.8" y2="83.5" stroke="#178017" stroke-width="0.8"/>
<rect x="452.0" y="81.0" width="1.5" height="1.6" fill="#000000" stroke="#1f9a1f" stroke-width="0.45"/>
<line x1="455.7" y1="79.5" x2="455.7" y2="81.7" stroke="#178017" stroke-width="0.8"/>
<rect x="454.9" y="79.9" width="1.5" height="1.6" fill="#000000" stroke="#1f9a1f" stroke-width="0.45"/>
<line x1="458.7" y1="79.3" x2="458.7" y2="81.7" stroke="#178017" stroke-width="0.8"/>
<rect x="457.9" y="79.4" width="1.5" height="1.6" fill="#eef4ea" stroke="#1f9a1f" stroke-width="0.45"/>
<line x1="461.7" y1="79.2" x2="461.7" y2="82.1" stroke="#178017" stroke-width="0.8"/>
<rect x="460.9" y="80.1" width="1.5" height="1.6" fill="#eef4ea" stroke="#1f9a1f" stroke-width="0.45"/>
<line x1="464.7" y1="81.1" x2="464.7" y2="83.5" stroke="#178017" stroke-width="0.8"/>
<rect x="463.9" y="81.3" width="1.5" height="1.6" fill="#eef4ea" stroke="#1f9a1f" stroke-width="0.45"/>
<line x1="467.6" y1="81.4" x2="467.6" y2="85.0" stroke="#178017" stroke-width="0.8"/>
<rect x="466.8" y="82.5" width="1.5" height="1.6" fill="#eef4ea" stroke="#1f9a1f" stroke-width="0.45"/>
<line x1="470.6" y1="82.8" x2="470.6" y2="86.9" stroke="#178017" stroke-width="0.8"/>
<rect x="469.8" y="83.7" width="1.5" height="1.6" fill="#eef4ea" stroke="#1f9a1f" stroke-width="0.45"/>
<line x1="473.6" y1="83.6" x2="473.6" y2="86.4" stroke="#178017" stroke-width="0.8"/>
<rect x="472.8" y="84.5" width="1.5" height="1.6" fill="#eef4ea" stroke="#1f9a1f" stroke-width="0.45"/>
<line x1="476.5" y1="83.9" x2="476.5" y2="86.6" stroke="#178017" stroke-width="0.8"/>
<rect x="475.7" y="84.8" width="1.5" height="1.6" fill="#eef4ea" stroke="#1f9a1f" stroke-width="0.45"/>
<line x1="479.5" y1="84.3" x2="479.5" y2="87.5" stroke="#178017" stroke-width="0.8"/>
<rect x="478.7" y="84.9" width="1.5" height="1.6" fill="#eef4ea" stroke="#1f9a1f" stroke-width="0.45"/>
<line x1="482.5" y1="83.7" x2="482.5" y2="87.1" stroke="#178017" stroke-width="0.8"/>
<rect x="481.7" y="84.7" width="1.5" height="1.6" fill="#eef4ea" stroke="#1f9a1f" stroke-width="0.45"/>
<line x1="485.4" y1="83.7" x2="485.4" y2="85.7" stroke="#178017" stroke-width="0.8"/>
<rect x="484.6" y="84.1" width="1.5" height="1.6" fill="#000000" stroke="#1f9a1f" stroke-width="0.45"/>
<line x1="488.4" y1="82.0" x2="488.4" y2="85.2" stroke="#178017" stroke-width="0.8"/>
<rect x="487.6" y="83.2" width="1.5" height="1.6" fill="#000000" stroke="#1f9a1f" stroke-width="0.45"/>
<line x1="491.4" y1="81.1" x2="491.4" y2="85.1" stroke="#178017" stroke-width="0.8"/>
<rect x="490.6" y="82.3" width="1.5" height="1.6" fill="#eef4ea" stroke="#1f9a1f" stroke-width="0.45"/>
<line x1="494.4" y1="82.0" x2="494.4" y2="84.2" stroke="#178017" stroke-width="0.8"/>
<rect x="493.6" y="82.3" width="1.5" height="1.6" fill="#eef4ea" stroke="#1f9a1f" stroke-width="0.45"/>
<line x1="497.3" y1="82.8" x2="497.3" y2="85.1" stroke="#178017" stroke-width="0.8"/>
<rect x="496.5" y="82.9" width="1.5" height="1.6" fill="#eef4ea" stroke="#1f9a1f" stroke-width="0.45"/>
<line x1="500.3" y1="82.3" x2="500.3" y2="86.2" stroke="#178017" stroke-width="0.8"/>
<rect x="499.5" y="83.5" width="1.5" height="1.6" fill="#eef4ea" stroke="#1f9a1f" stroke-width="0.45"/>
<line x1="503.3" y1="83.7" x2="503.3" y2="86.9" stroke="#178017" stroke-width="0.8"/>
<rect x="502.5" y="84.0" width="1.5" height="1.6" fill="#eef4ea" stroke="#1f9a1f" stroke-width="0.45"/>
<line x1="506.2" y1="84.3" x2="506.2" y2="85.9" stroke="#178017" stroke-width="0.8"/>
<rect x="505.4" y="84.6" width="1.5" height="1.6" fill="#eef4ea" stroke="#1f9a1f" stroke-width="0.45"/>
<line x1="509.2" y1="84.5" x2="509.2" y2="87.5" stroke="#178017" stroke-width="0.8"/>
<rect x="508.4" y="85.2" width="1.5" height="1.6" fill="#eef4ea" stroke="#1f9a1f" stroke-width="0.45"/>
<line x1="512.2" y1="85.4" x2="512.2" y2="87.6" stroke="#178017" stroke-width="0.8"/>
<rect x="511.4" y="86.0" width="1.5" height="1.6" fill="#eef4ea" stroke="#1f9a1f" stroke-width="0.45"/>
<line x1="515.1" y1="86.7" x2="515.1" y2="89.0" stroke="#178017" stroke-width="0.8"/>
<rect x="514.3" y="86.8" width="1.5" height="1.6" fill="#eef4ea" stroke="#1f9a1f" stroke-width="0.45"/>
<line x1="518.1" y1="87.2" x2="518.1" y2="88.9" stroke="#178017" stroke-width="0.8"/>
<rect x="517.3" y="87.0" width="1.5" height="1.6" fill="#000000" stroke="#1f9a1f" stroke-width="0.45"/>
<line x1="521.1" y1="85.6" x2="521.1" y2="89.0" stroke="#178017" stroke-width="0.8"/>
<rect x="520.3" y="86.3" width="1.5" height="1.6" fill="#eef4ea" stroke="#1f9a1f" stroke-width="0.45"/>
<line x1="524.1" y1="84.0" x2="524.1" y2="87.7" stroke="#178017" stroke-width="0.8"/>
<rect x="523.3" y="85.4" width="1.5" height="1.6" fill="#000000" stroke="#1f9a1f" stroke-width="0.45"/>
<line x1="527.0" y1="84.1" x2="527.0" y2="87.1" stroke="#178017" stroke-width="0.8"/>
<rect x="526.2" y="84.4" width="1.5" height="1.6" fill="#eef4ea" stroke="#1f9a1f" stroke-width="0.45"/>
<line x1="530.0" y1="81.2" x2="530.0" y2="86.3" stroke="#178017" stroke-width="0.8"/>
<rect x="529.2" y="82.8" width="1.5" height="1.9" fill="#eef4ea" stroke="#1f9a1f" stroke-width="0.45"/>
<line x1="533.0" y1="81.3" x2="533.0" y2="83.7" stroke="#178017" stroke-width="0.8"/>
<rect x="532.2" y="82.2" width="1.5" height="1.6" fill="#eef4ea" stroke="#1f9a1f" stroke-width="0.45"/>
<line x1="535.9" y1="81.9" x2="535.9" y2="84.7" stroke="#178017" stroke-width="0.8"/>
<rect x="535.1" y="82.3" width="1.5" height="1.6" fill="#eef4ea" stroke="#1f9a1f" stroke-width="0.45"/>
<line x1="538.9" y1="81.8" x2="538.9" y2="84.9" stroke="#178017" stroke-width="0.8"/>
<rect x="538.1" y="82.3" width="1.5" height="1.6" fill="#eef4ea" stroke="#1f9a1f" stroke-width="0.45"/>
<line x1="541.9" y1="81.7" x2="541.9" y2="83.9" stroke="#178017" stroke-width="0.8"/>
<rect x="541.1" y="82.4" width="1.5" height="1.6" fill="#000000" stroke="#1f9a1f" stroke-width="0.45"/>
<line x1="544.8" y1="81.6" x2="544.8" y2="83.6" stroke="#178017" stroke-width="0.8"/>
<rect x="544.0" y="82.0" width="1.5" height="1.6" fill="#eef4ea" stroke="#1f9a1f" stroke-width="0.45"/>
<line x1="547.8" y1="81.2" x2="547.8" y2="83.8" stroke="#178017" stroke-width="0.8"/>
<rect x="547.0" y="81.7" width="1.5" height="1.6" fill="#eef4ea" stroke="#1f9a1f" stroke-width="0.45"/>
<line x1="550.8" y1="81.3" x2="550.8" y2="82.9" stroke="#178017" stroke-width="0.8"/>
<rect x="550.0" y="81.6" width="1.5" height="1.6" fill="#eef4ea" stroke="#1f9a1f" stroke-width="0.45"/>
<line x1="553.8" y1="81.1" x2="553.8" y2="83.5" stroke="#178017" stroke-width="0.8"/>
<rect x="553.0" y="81.4" width="1.5" height="1.6" fill="#eef4ea" stroke="#1f9a1f" stroke-width="0.45"/>
<line x1="556.7" y1="80.0" x2="556.7" y2="82.9" stroke="#178017" stroke-width="0.8"/>
<rect x="555.9" y="81.0" width="1.5" height="1.6" fill="#000000" stroke="#1f9a1f" stroke-width="0.45"/>
<line x1="559.7" y1="79.9" x2="559.7" y2="82.1" stroke="#178017" stroke-width="0.8"/>
<rect x="558.9" y="80.6" width="1.5" height="1.6" fill="#eef4ea" stroke="#1f9a1f" stroke-width="0.45"/>
<line x1="562.7" y1="80.2" x2="562.7" y2="82.5" stroke="#178017" stroke-width="0.8"/>
<rect x="561.9" y="80.6" width="1.5" height="1.6" fill="#eef4ea" stroke="#1f9a1f" stroke-width="0.45"/>
<line x1="565.6" y1="79.6" x2="565.6" y2="83.0" stroke="#178017" stroke-width="0.8"/>
<rect x="564.8" y="80.5" width="1.5" height="1.6" fill="#eef4ea" stroke="#1f9a1f" stroke-width="0.45"/>
<line x1="568.6" y1="80.4" x2="568.6" y2="81.5" stroke="#178017" stroke-width="0.8"/>
<rect x="567.8" y="80.1" width="1.5" height="1.6" fill="#000000" stroke="#1f9a1f" stroke-width="0.45"/>
<line x1="571.6" y1="79.9" x2="571.6" y2="82.0" stroke="#178017" stroke-width="0.8"/>
<rect x="570.8" y="80.0" width="1.5" height="1.6" fill="#000000" stroke="#1f9a1f" stroke-width="0.45"/>
<line x1="574.5" y1="79.2" x2="574.5" y2="82.0" stroke="#178017" stroke-width="0.8"/>
<rect x="573.7" y="79.5" width="1.5" height="1.6" fill="#eef4ea" stroke="#1f9a1f" stroke-width="0.45"/>
<line x1="577.5" y1="79.2" x2="577.5" y2="81.3" stroke="#178017" stroke-width="0.8"/>
<rect x="576.7" y="79.3" width="1.5" height="1.6" fill="#eef4ea" stroke="#1f9a1f" stroke-width="0.45"/>
<line x1="580.5" y1="78.8" x2="580.5" y2="80.7" stroke="#178017" stroke-width="0.8"/>
<rect x="579.7" y="79.2" width="1.5" height="1.6" fill="#eef4ea" stroke="#1f9a1f" stroke-width="0.45"/>
<line x1="583.5" y1="77.6" x2="583.5" y2="81.5" stroke="#178017" stroke-width="0.8"/>
<rect x="582.7" y="78.8" width="1.5" height="1.6" fill="#000000" stroke="#1f9a1f" stroke-width="0.45"/>
<line x1="586.4" y1="77.8" x2="586.4" y2="81.2" stroke="#178017" stroke-width="0.8"/>
<rect x="585.6" y="78.6" width="1.5" height="1.6" fill="#000000" stroke="#1f9a1f" stroke-width="0.45"/>
<line x1="589.4" y1="78.3" x2="589.4" y2="81.1" stroke="#178017" stroke-width="0.8"/>
<rect x="588.6" y="78.4" width="1.5" height="1.6" fill="#000000" stroke="#1f9a1f" stroke-width="0.45"/>
<line x1="592.4" y1="78.4" x2="592.4" y2="80.1" stroke="#178017" stroke-width="0.8"/>
<rect x="591.6" y="78.2" width="1.5" height="1.6" fill="#eef4ea" stroke="#1f9a1f" stroke-width="0.45"/>
<line x1="595.3" y1="77.5" x2="595.3" y2="80.2" stroke="#178017" stroke-width="0.8"/>
<rect x="594.5" y="78.2" width="1.5" height="1.6" fill="#eef4ea" stroke="#1f9a1f" stroke-width="0.45"/>
<line x1="598.3" y1="77.7" x2="598.3" y2="81.9" stroke="#178017" stroke-width="0.8"/>
<rect x="597.5" y="79.1" width="1.5" height="2.1" fill="#eef4ea" stroke="#1f9a1f" stroke-width="0.45"/>
<line x1="601.3" y1="80.2" x2="601.3" y2="82.4" stroke="#178017" stroke-width="0.8"/>
<rect x="600.5" y="80.8" width="1.5" height="1.6" fill="#eef4ea" stroke="#1f9a1f" stroke-width="0.45"/>
<line x1="604.2" y1="79.5" x2="604.2" y2="83.0" stroke="#178017" stroke-width="0.8"/>
<rect x="603.4" y="80.5" width="1.5" height="1.6" fill="#000000" stroke="#1f9a1f" stroke-width="0.45"/>
<line x1="607.2" y1="79.0" x2="607.2" y2="81.4" stroke="#178017" stroke-width="0.8"/>
<rect x="606.4" y="79.4" width="1.5" height="1.6" fill="#eef4ea" stroke="#1f9a1f" stroke-width="0.45"/>
<line x1="610.2" y1="77.6" x2="610.2" y2="81.5" stroke="#178017" stroke-width="0.8"/>
<rect x="609.4" y="78.7" width="1.5" height="1.6" fill="#000000" stroke="#1f9a1f" stroke-width="0.45"/>
<line x1="613.2" y1="77.6" x2="613.2" y2="80.7" stroke="#178017" stroke-width="0.8"/>
<rect x="612.4" y="78.2" width="1.5" height="1.6" fill="#eef4ea" stroke="#1f9a1f" stroke-width="0.45"/>
<line x1="616.1" y1="77.5" x2="616.1" y2="80.0" stroke="#178017" stroke-width="0.8"/>
<rect x="615.3" y="77.9" width="1.5" height="1.6" fill="#eef4ea" stroke="#1f9a1f" stroke-width="0.45"/>
<line x1="619.1" y1="77.5" x2="619.1" y2="79.4" stroke="#178017" stroke-width="0.8"/>
<rect x="618.3" y="77.6" width="1.5" height="1.6" fill="#eef4ea" stroke="#1f9a1f" stroke-width="0.45"/>
<line x1="622.1" y1="77.5" x2="622.1" y2="78.9" stroke="#178017" stroke-width="0.8"/>
<rect x="621.3" y="77.4" width="1.5" height="1.6" fill="#eef4ea" stroke="#1f9a1f" stroke-width="0.45"/>
<line x1="625.0" y1="76.0" x2="625.0" y2="78.7" stroke="#178017" stroke-width="0.8"/>
<rect x="624.2" y="77.0" width="1.5" height="1.6" fill="#000000" stroke="#1f9a1f" stroke-width="0.45"/>
<line x1="628.0" y1="77.1" x2="628.0" y2="78.6" stroke="#178017" stroke-width="0.8"/>
<rect x="627.2" y="76.9" width="1.5" height="1.6" fill="#eef4ea" stroke="#1f9a1f" stroke-width="0.45"/>
<line x1="631.0" y1="76.2" x2="631.0" y2="79.0" stroke="#178017" stroke-width="0.8"/>
<rect x="630.2" y="76.9" width="1.5" height="1.6" fill="#eef4ea" stroke="#1f9a1f" stroke-width="0.45"/>
<line x1="633.9" y1="74.6" x2="633.9" y2="78.9" stroke="#178017" stroke-width="0.8"/>
<rect x="633.1" y="76.2" width="1.5" height="1.6" fill="#eef4ea" stroke="#1f9a1f" stroke-width="0.45"/>
<line x1="636.9" y1="68.1" x2="636.9" y2="77.3" stroke="#178017" stroke-width="0.8"/>
<rect x="636.1" y="69.5" width="1.5" height="6.8" fill="#eef4ea" stroke="#1f9a1f" stroke-width="0.45"/>
<line x1="639.9" y1="68.2" x2="639.9" y2="69.9" stroke="#178017" stroke-width="0.8"/>
<rect x="639.1" y="68.4" width="1.5" height="1.6" fill="#eef4ea" stroke="#1f9a1f" stroke-width="0.45"/>
<line x1="642.9" y1="67.5" x2="642.9" y2="69.9" stroke="#178017" stroke-width="0.8"/>
<rect x="642.1" y="68.0" width="1.5" height="1.6" fill="#000000" stroke="#1f9a1f" stroke-width="0.45"/>
<line x1="645.8" y1="66.8" x2="645.8" y2="69.6" stroke="#178017" stroke-width="0.8"/>
<rect x="645.0" y="67.9" width="1.5" height="1.6" fill="#eef4ea" stroke="#1f9a1f" stroke-width="0.45"/>
<line x1="648.8" y1="67.9" x2="648.8" y2="70.0" stroke="#178017" stroke-width="0.8"/>
<rect x="648.0" y="68.0" width="1.5" height="1.6" fill="#000000" stroke="#1f9a1f" stroke-width="0.45"/>
<line x1="651.8" y1="68.1" x2="651.8" y2="70.0" stroke="#178017" stroke-width="0.8"/>
<rect x="651.0" y="68.2" width="1.5" height="1.6" fill="#eef4ea" stroke="#1f9a1f" stroke-width="0.45"/>
<line x1="654.7" y1="68.3" x2="654.7" y2="72.8" stroke="#178017" stroke-width="0.8"/>
<rect x="653.9" y="69.4" width="1.5" height="2.8" fill="#eef4ea" stroke="#1f9a1f" stroke-width="0.45"/>
<line x1="657.7" y1="70.3" x2="657.7" y2="74.3" stroke="#178017" stroke-width="0.8"/>
<rect x="656.9" y="71.9" width="1.5" height="1.6" fill="#eef4ea" stroke="#1f9a1f" stroke-width="0.45"/>
<line x1="660.7" y1="72.1" x2="660.7" y2="73.8" stroke="#178017" stroke-width="0.8"/>
<rect x="659.9" y="72.2" width="1.5" height="1.6" fill="#000000" stroke="#1f9a1f" stroke-width="0.45"/>
<line x1="663.6" y1="72.0" x2="663.6" y2="73.5" stroke="#178017" stroke-width="0.8"/>
<rect x="662.8" y="71.9" width="1.5" height="1.6" fill="#000000" stroke="#1f9a1f" stroke-width="0.45"/>
<line x1="666.6" y1="71.3" x2="666.6" y2="74.2" stroke="#178017" stroke-width="0.8"/>
<rect x="665.8" y="72.2" width="1.5" height="1.6" fill="#eef4ea" stroke="#1f9a1f" stroke-width="0.45"/>
<line x1="669.6" y1="70.9" x2="669.6" y2="74.2" stroke="#178017" stroke-width="0.8"/>
<rect x="668.8" y="71.8" width="1.5" height="1.6" fill="#000000" stroke="#1f9a1f" stroke-width="0.45"/>
<line x1="672.6" y1="68.9" x2="672.6" y2="73.7" stroke="#178017" stroke-width="0.8"/>
<rect x="671.8" y="69.7" width="1.5" height="2.3" fill="#000000" stroke="#1f9a1f" stroke-width="0.45"/>
<line x1="675.5" y1="68.4" x2="675.5" y2="71.6" stroke="#178017" stroke-width="0.8"/>
<rect x="674.7" y="69.0" width="1.5" height="1.6" fill="#eef4ea" stroke="#1f9a1f" stroke-width="0.45"/>
<line x1="678.5" y1="69.0" x2="678.5" y2="70.7" stroke="#178017" stroke-width="0.8"/>
<rect x="677.7" y="69.1" width="1.5" height="1.6" fill="#000000" stroke="#1f9a1f" stroke-width="0.45"/>
<line x1="681.5" y1="68.1" x2="681.5" y2="71.5" stroke="#178017" stroke-width="0.8"/>
<rect x="680.7" y="69.1" width="1.5" height="1.6" fill="#eef4ea" stroke="#1f9a1f" stroke-width="0.45"/>
<line x1="684.4" y1="69.6" x2="684.4" y2="70.7" stroke="#178017" stroke-width="0.8"/>
<rect x="683.6" y="69.3" width="1.5" height="1.6" fill="#eef4ea" stroke="#1f9a1f" stroke-width="0.45"/>
<line x1="687.4" y1="68.5" x2="687.4" y2="71.3" stroke="#178017" stroke-width="0.8"/>
<rect x="686.6" y="69.4" width="1.5" height="1.6" fill="#000000" stroke="#1f9a1f" stroke-width="0.45"/>
<line x1="690.4" y1="66.4" x2="690.4" y2="71.8" stroke="#178017" stroke-width="0.8"/>
<rect x="689.6" y="67.3" width="1.5" height="2.9" fill="#eef4ea" stroke="#1f9a1f" stroke-width="0.45"/>
<line x1="693.3" y1="62.7" x2="693.3" y2="68.0" stroke="#178017" stroke-width="0.8"/>
<rect x="692.5" y="64.5" width="1.5" height="2.8" fill="#000000" stroke="#1f9a1f" stroke-width="0.45"/>
<line x1="696.3" y1="60.3" x2="696.3" y2="65.8" stroke="#178017" stroke-width="0.8"/>
<rect x="695.5" y="61.4" width="1.5" height="3.1" fill="#eef4ea" stroke="#1f9a1f" stroke-width="0.45"/>
<line x1="699.3" y1="59.6" x2="699.3" y2="62.9" stroke="#178017" stroke-width="0.8"/>
<rect x="698.5" y="60.4" width="1.5" height="1.6" fill="#000000" stroke="#1f9a1f" stroke-width="0.45"/>
<line x1="702.3" y1="59.5" x2="702.3" y2="62.4" stroke="#178017" stroke-width="0.8"/>
<rect x="701.5" y="59.6" width="1.5" height="1.6" fill="#000000" stroke="#1f9a1f" stroke-width="0.45"/>
<line x1="705.2" y1="58.0" x2="705.2" y2="60.7" stroke="#178017" stroke-width="0.8"/>
<rect x="704.4" y="58.8" width="1.5" height="1.6" fill="#000000" stroke="#1f9a1f" stroke-width="0.45"/>
<line x1="708.2" y1="57.3" x2="708.2" y2="60.6" stroke="#178017" stroke-width="0.8"/>
<rect x="707.4" y="58.1" width="1.5" height="1.6" fill="#000000" stroke="#1f9a1f" stroke-width="0.45"/>
<line x1="711.2" y1="57.5" x2="711.2" y2="61.3" stroke="#178017" stroke-width="0.8"/>
<rect x="710.4" y="58.6" width="1.5" height="1.6" fill="#eef4ea" stroke="#1f9a1f" stroke-width="0.45"/>
<line x1="714.1" y1="59.5" x2="714.1" y2="63.3" stroke="#178017" stroke-width="0.8"/>
<rect x="713.3" y="60.1" width="1.5" height="1.9" fill="#eef4ea" stroke="#1f9a1f" stroke-width="0.45"/>
<line x1="717.1" y1="61.2" x2="717.1" y2="64.4" stroke="#178017" stroke-width="0.8"/>
<rect x="716.3" y="61.9" width="1.5" height="1.6" fill="#eef4ea" stroke="#1f9a1f" stroke-width="0.45"/>
<line x1="720.1" y1="62.1" x2="720.1" y2="66.7" stroke="#178017" stroke-width="0.8"/>
<rect x="719.3" y="63.4" width="1.5" height="1.7" fill="#eef4ea" stroke="#1f9a1f" stroke-width="0.45"/>
<line x1="723.0" y1="63.0" x2="723.0" y2="65.8" stroke="#178017" stroke-width="0.8"/>
<rect x="722.2" y="63.6" width="1.5" height="1.6" fill="#eef4ea" stroke="#1f9a1f" stroke-width="0.45"/>
<line x1="726.0" y1="62.1" x2="726.0" y2="64.1" stroke="#178017" stroke-width="0.8"/>
<rect x="725.2" y="62.5" width="1.5" height="1.6" fill="#000000" stroke="#1f9a1f" stroke-width="0.45"/>
<line x1="729.0" y1="60.9" x2="729.0" y2="63.6" stroke="#178017" stroke-width="0.8"/>
<rect x="728.2" y="61.6" width="1.5" height="1.6" fill="#eef4ea" stroke="#1f9a1f" stroke-width="0.45"/>
<line x1="732.0" y1="60.6" x2="732.0" y2="62.3" stroke="#178017" stroke-width="0.8"/>
<rect x="731.2" y="60.8" width="1.5" height="1.6" fill="#000000" stroke="#1f9a1f" stroke-width="0.45"/>
<line x1="734.9" y1="59.6" x2="734.9" y2="62.0" stroke="#178017" stroke-width="0.8"/>
<rect x="734.1" y="60.3" width="1.5" height="1.6" fill="#eef4ea" stroke="#1f9a1f" stroke-width="0.45"/>
<line x1="737.9" y1="59.9" x2="737.9" y2="61.8" stroke="#178017" stroke-width="0.8"/>
<rect x="737.1" y="60.3" width="1.5" height="1.6" fill="#eef4ea" stroke="#1f9a1f" stroke-width="0.45"/>
<line x1="740.9" y1="60.4" x2="740.9" y2="62.9" stroke="#178017" stroke-width="0.8"/>
<rect x="740.1" y="60.5" width="1.5" height="1.6" fill="#eef4ea" stroke="#1f9a1f" stroke-width="0.45"/>
<line x1="743.8" y1="58.7" x2="743.8" y2="62.8" stroke="#178017" stroke-width="0.8"/>
<rect x="743.0" y="59.4" width="1.5" height="1.9" fill="#000000" stroke="#1f9a1f" stroke-width="0.45"/>
<line x1="746.8" y1="56.6" x2="746.8" y2="60.0" stroke="#178017" stroke-width="0.8"/>
<rect x="746.0" y="57.6" width="1.5" height="1.8" fill="#000000" stroke="#1f9a1f" stroke-width="0.45"/>
<line x1="749.8" y1="55.9" x2="749.8" y2="59.4" stroke="#178017" stroke-width="0.8"/>
<rect x="749.0" y="56.6" width="1.5" height="1.6" fill="#000000" stroke="#1f9a1f" stroke-width="0.45"/>
<line x1="752.7" y1="56.6" x2="752.7" y2="59.0" stroke="#178017" stroke-width="0.8"/>
<rect x="751.9" y="56.4" width="1.5" height="1.6" fill="#000000" stroke="#1f9a1f" stroke-width="0.45"/>
<line x1="755.7" y1="56.5" x2="755.7" y2="58.1" stroke="#178017" stroke-width="0.8"/>
<rect x="754.9" y="56.3" width="1.5" height="1.6" fill="#eef4ea" stroke="#1f9a1f" stroke-width="0.45"/>
<line x1="758.7" y1="55.6" x2="758.7" y2="59.4" stroke="#178017" stroke-width="0.8"/>
<rect x="757.9" y="56.5" width="1.5" height="1.6" fill="#eef4ea" stroke="#1f9a1f" stroke-width="0.45"/>
<line x1="761.7" y1="56.7" x2="761.7" y2="58.2" stroke="#178017" stroke-width="0.8"/>
<rect x="760.9" y="56.8" width="1.5" height="1.6" fill="#eef4ea" stroke="#1f9a1f" stroke-width="0.45"/>
<line x1="764.6" y1="54.5" x2="764.6" y2="58.0" stroke="#178017" stroke-width="0.8"/>
<rect x="763.8" y="55.9" width="1.5" height="1.7" fill="#eef4ea" stroke="#1f9a1f" stroke-width="0.45"/>
<line x1="767.6" y1="53.0" x2="767.6" y2="56.8" stroke="#178017" stroke-width="0.8"/>
<rect x="766.8" y="53.9" width="1.5" height="2.1" fill="#000000" stroke="#1f9a1f" stroke-width="0.45"/>
<line x1="770.6" y1="51.8" x2="770.6" y2="54.7" stroke="#178017" stroke-width="0.8"/>
<rect x="769.8" y="52.4" width="1.5" height="1.6" fill="#eef4ea" stroke="#1f9a1f" stroke-width="0.45"/>
<line x1="773.5" y1="49.8" x2="773.5" y2="53.2" stroke="#178017" stroke-width="0.8"/>
<rect x="772.7" y="51.2" width="1.5" height="1.6" fill="#000000" stroke="#1f9a1f" stroke-width="0.45"/>
<line x1="776.5" y1="49.4" x2="776.5" y2="52.5" stroke="#178017" stroke-width="0.8"/>
<rect x="775.7" y="50.5" width="1.5" height="1.6" fill="#000000" stroke="#1f9a1f" stroke-width="0.45"/>
<line x1="779.5" y1="48.8" x2="779.5" y2="52.7" stroke="#178017" stroke-width="0.8"/>
<rect x="778.7" y="49.5" width="1.5" height="1.6" fill="#000000" stroke="#1f9a1f" stroke-width="0.45"/>
<line x1="782.4" y1="46.9" x2="782.4" y2="50.1" stroke="#178017" stroke-width="0.8"/>
<rect x="781.6" y="48.3" width="1.5" height="1.6" fill="#000000" stroke="#1f9a1f" stroke-width="0.45"/>
<line x1="785.4" y1="46.4" x2="785.4" y2="48.9" stroke="#178017" stroke-width="0.8"/>
<rect x="784.6" y="47.4" width="1.5" height="1.6" fill="#000000" stroke="#1f9a1f" stroke-width="0.45"/>
<line x1="788.4" y1="45.6" x2="788.4" y2="48.6" stroke="#178017" stroke-width="0.8"/>
<rect x="787.6" y="46.8" width="1.5" height="1.6" fill="#eef4ea" stroke="#1f9a1f" stroke-width="0.45"/>
<line x1="791.4" y1="46.4" x2="791.4" y2="48.6" stroke="#178017" stroke-width="0.8"/>
<rect x="790.6" y="46.8" width="1.5" height="1.6" fill="#eef4ea" stroke="#1f9a1f" stroke-width="0.45"/>
<line x1="794.3" y1="46.6" x2="794.3" y2="48.7" stroke="#178017" stroke-width="0.8"/>
<rect x="793.5" y="47.1" width="1.5" height="1.6" fill="#eef4ea" stroke="#1f9a1f" stroke-width="0.45"/>
<line x1="797.3" y1="46.9" x2="797.3" y2="48.7" stroke="#178017" stroke-width="0.8"/>
<rect x="796.5" y="47.0" width="1.5" height="1.6" fill="#000000" stroke="#1f9a1f" stroke-width="0.45"/>
<line x1="800.3" y1="46.1" x2="800.3" y2="49.1" stroke="#178017" stroke-width="0.8"/>
<rect x="799.5" y="47.0" width="1.5" height="1.6" fill="#eef4ea" stroke="#1f9a1f" stroke-width="0.45"/>
<line x1="803.2" y1="47.4" x2="803.2" y2="48.6" stroke="#178017" stroke-width="0.8"/>
<rect x="802.4" y="47.1" width="1.5" height="1.6" fill="#eef4ea" stroke="#1f9a1f" stroke-width="0.45"/>
<line x1="806.2" y1="45.9" x2="806.2" y2="49.7" stroke="#178017" stroke-width="0.8"/>
<rect x="805.4" y="47.0" width="1.5" height="1.6" fill="#000000" stroke="#1f9a1f" stroke-width="0.45"/>
<line x1="809.2" y1="46.7" x2="809.2" y2="48.9" stroke="#178017" stroke-width="0.8"/>
<rect x="808.4" y="46.9" width="1.5" height="1.6" fill="#eef4ea" stroke="#1f9a1f" stroke-width="0.45"/>
<line x1="812.1" y1="47.2" x2="812.1" y2="50.1" stroke="#178017" stroke-width="0.8"/>
<rect x="811.3" y="47.4" width="1.5" height="1.6" fill="#eef4ea" stroke="#1f9a1f" stroke-width="0.45"/>
<line x1="815.1" y1="46.8" x2="815.1" y2="50.1" stroke="#178017" stroke-width="0.8"/>
<rect x="814.3" y="47.7" width="1.5" height="1.6" fill="#eef4ea" stroke="#1f9a1f" stroke-width="0.45"/>
<line x1="818.1" y1="46.1" x2="818.1" y2="49.2" stroke="#178017" stroke-width="0.8"/>
<rect x="817.3" y="46.8" width="1.5" height="1.6" fill="#eef4ea" stroke="#1f9a1f" stroke-width="0.45"/>
<line x1="821.1" y1="44.9" x2="821.1" y2="48.3" stroke="#178017" stroke-width="0.8"/>
<rect x="820.3" y="45.4" width="1.5" height="1.6" fill="#000000" stroke="#1f9a1f" stroke-width="0.45"/>
<line x1="824.0" y1="44.0" x2="824.0" y2="46.7" stroke="#178017" stroke-width="0.8"/>
<rect x="823.2" y="44.2" width="1.5" height="1.6" fill="#000000" stroke="#1f9a1f" stroke-width="0.45"/>
<line x1="827.0" y1="42.8" x2="827.0" y2="46.7" stroke="#178017" stroke-width="0.8"/>
<rect x="826.2" y="43.9" width="1.5" height="1.6" fill="#eef4ea" stroke="#1f9a1f" stroke-width="0.45"/>
<line x1="830.0" y1="43.9" x2="830.0" y2="45.4" stroke="#178017" stroke-width="0.8"/>
<rect x="829.2" y="43.9" width="1.5" height="1.6" fill="#000000" stroke="#1f9a1f" stroke-width="0.45"/>
<line x1="832.9" y1="42.9" x2="832.9" y2="45.1" stroke="#178017" stroke-width="0.8"/>
<rect x="832.1" y="43.4" width="1.5" height="1.6" fill="#000000" stroke="#1f9a1f" stroke-width="0.45"/>
<line x1="835.9" y1="38.5" x2="835.9" y2="45.3" stroke="#178017" stroke-width="0.8"/>
<rect x="835.1" y="39.8" width="1.5" height="4.1" fill="#eef4ea" stroke="#1f9a1f" stroke-width="0.45"/>
<line x1="838.9" y1="38.8" x2="838.9" y2="41.4" stroke="#178017" stroke-width="0.8"/>
<rect x="838.1" y="38.8" width="1.5" height="1.6" fill="#000000" stroke="#1f9a1f" stroke-width="0.45"/>
<line x1="841.8" y1="38.4" x2="841.8" y2="40.7" stroke="#178017" stroke-width="0.8"/>
<rect x="841.0" y="38.5" width="1.5" height="1.6" fill="#000000" stroke="#1f9a1f" stroke-width="0.45"/>
<line x1="844.8" y1="38.3" x2="844.8" y2="39.8" stroke="#178017" stroke-width="0.8"/>
<rect x="844.0" y="38.3" width="1.5" height="1.6" fill="#eef4ea" stroke="#1f9a1f" stroke-width="0.45"/>
<line x1="847.8" y1="38.2" x2="847.8" y2="40.2" stroke="#178017" stroke-width="0.8"/>
<rect x="847.0" y="38.3" width="1.5" height="1.6" fill="#eef4ea" stroke="#1f9a1f" stroke-width="0.45"/>
<line x1="850.8" y1="38.2" x2="850.8" y2="45.5" stroke="#178017" stroke-width="0.8"/>
<rect x="850.0" y="39.3" width="1.5" height="5.5" fill="#eef4ea" stroke="#1f9a1f" stroke-width="0.45"/>
<line x1="853.7" y1="41.5" x2="853.7" y2="63.1" stroke="#178017" stroke-width="0.8"/>
<rect x="852.9" y="44.8" width="1.5" height="13.9" fill="#eef4ea" stroke="#1f9a1f" stroke-width="0.45"/>
<line x1="856.7" y1="56.1" x2="856.7" y2="63.7" stroke="#178017" stroke-width="0.8"/>
<rect x="855.9" y="58.4" width="1.5" height="1.6" fill="#eef4ea" stroke="#1f9a1f" stroke-width="0.45"/>
<line x1="859.7" y1="55.6" x2="859.7" y2="74.2" stroke="#178017" stroke-width="0.8"/>
<rect x="858.9" y="59.8" width="1.5" height="13.3" fill="#eef4ea" stroke="#1f9a1f" stroke-width="0.45"/>
<line x1="862.6" y1="66.2" x2="862.6" y2="74.7" stroke="#178017" stroke-width="0.8"/>
<rect x="861.8" y="67.5" width="1.5" height="5.6" fill="#eef4ea" stroke="#1f9a1f" stroke-width="0.45"/>
<line x1="865.6" y1="63.3" x2="865.6" y2="73.4" stroke="#178017" stroke-width="0.8"/>
<rect x="864.8" y="67.5" width="1.5" height="3.7" fill="#eef4ea" stroke="#1f9a1f" stroke-width="0.45"/>
<line x1="868.6" y1="68.7" x2="868.6" y2="78.2" stroke="#178017" stroke-width="0.8"/>
<rect x="867.8" y="71.2" width="1.5" height="5.2" fill="#eef4ea" stroke="#1f9a1f" stroke-width="0.45"/>
<line x1="871.5" y1="72.1" x2="871.5" y2="78.4" stroke="#178017" stroke-width="0.8"/>
<rect x="870.7" y="75.9" width="1.5" height="1.6" fill="#eef4ea" stroke="#1f9a1f" stroke-width="0.45"/>
<line x1="874.5" y1="73.5" x2="874.5" y2="78.8" stroke="#178017" stroke-width="0.8"/>
<rect x="873.7" y="76.1" width="1.5" height="1.6" fill="#000000" stroke="#1f9a1f" stroke-width="0.45"/>
<line x1="877.5" y1="72.7" x2="877.5" y2="78.5" stroke="#178017" stroke-width="0.8"/>
<rect x="876.7" y="74.3" width="1.5" height="2.4" fill="#000000" stroke="#1f9a1f" stroke-width="0.45"/>
<line x1="880.5" y1="72.7" x2="880.5" y2="84.9" stroke="#178017" stroke-width="0.8"/>
<rect x="879.7" y="74.3" width="1.5" height="9.6" fill="#eef4ea" stroke="#1f9a1f" stroke-width="0.45"/>
<line x1="883.4" y1="78.5" x2="883.4" y2="85.5" stroke="#178017" stroke-width="0.8"/>
<rect x="882.6" y="81.8" width="1.5" height="2.1" fill="#000000" stroke="#1f9a1f" stroke-width="0.45"/>
<line x1="886.4" y1="77.1" x2="886.4" y2="84.7" stroke="#178017" stroke-width="0.8"/>
<rect x="885.6" y="80.5" width="1.5" height="1.6" fill="#000000" stroke="#1f9a1f" stroke-width="0.45"/>
<line x1="889.4" y1="75.9" x2="889.4" y2="83.8" stroke="#178017" stroke-width="0.8"/>
<rect x="888.6" y="78.3" width="1.5" height="2.6" fill="#eef4ea" stroke="#1f9a1f" stroke-width="0.45"/>
<line x1="892.3" y1="76.8" x2="892.3" y2="83.3" stroke="#178017" stroke-width="0.8"/>
<rect x="891.5" y="78.3" width="1.5" height="1.7" fill="#eef4ea" stroke="#1f9a1f" stroke-width="0.45"/>
<line x1="895.3" y1="78.0" x2="895.3" y2="85.7" stroke="#178017" stroke-width="0.8"/>
<rect x="894.5" y="79.9" width="1.5" height="3.8" fill="#eef4ea" stroke="#1f9a1f" stroke-width="0.45"/>
<line x1="898.3" y1="81.6" x2="898.3" y2="89.4" stroke="#178017" stroke-width="0.8"/>
<rect x="897.5" y="83.7" width="1.5" height="2.8" fill="#eef4ea" stroke="#1f9a1f" stroke-width="0.45"/>
<line x1="901.2" y1="76.4" x2="901.2" y2="90.5" stroke="#178017" stroke-width="0.8"/>
<rect x="900.4" y="78.8" width="1.5" height="7.7" fill="#eef4ea" stroke="#1f9a1f" stroke-width="0.45"/>
<line x1="904.2" y1="76.8" x2="904.2" y2="82.3" stroke="#178017" stroke-width="0.8"/>
<rect x="903.4" y="77.8" width="1.5" height="1.6" fill="#000000" stroke="#1f9a1f" stroke-width="0.45"/>
<line x1="907.2" y1="76.7" x2="907.2" y2="81.2" stroke="#178017" stroke-width="0.8"/>
<rect x="906.4" y="78.4" width="1.5" height="1.8" fill="#eef4ea" stroke="#1f9a1f" stroke-width="0.45"/>
<line x1="910.2" y1="78.6" x2="910.2" y2="81.9" stroke="#178017" stroke-width="0.8"/>
<rect x="909.4" y="79.1" width="1.5" height="1.6" fill="#000000" stroke="#1f9a1f" stroke-width="0.45"/>
<line x1="913.1" y1="74.2" x2="913.1" y2="80.7" stroke="#178017" stroke-width="0.8"/>
<rect x="912.3" y="74.6" width="1.5" height="5.0" fill="#eef4ea" stroke="#1f9a1f" stroke-width="0.45"/>
<line x1="916.1" y1="73.9" x2="916.1" y2="75.8" stroke="#178017" stroke-width="0.8"/>
<rect x="915.3" y="73.6" width="1.5" height="1.6" fill="#000000" stroke="#1f9a1f" stroke-width="0.45"/>
<line x1="919.1" y1="72.7" x2="919.1" y2="75.1" stroke="#178017" stroke-width="0.8"/>
<rect x="918.3" y="73.0" width="1.5" height="1.6" fill="#000000" stroke="#1f9a1f" stroke-width="0.45"/>
<line x1="922.0" y1="72.8" x2="922.0" y2="74.4" stroke="#178017" stroke-width="0.8"/>
<rect x="921.2" y="72.5" width="1.5" height="1.6" fill="#eef4ea" stroke="#1f9a1f" stroke-width="0.45"/>
<line x1="925.0" y1="72.7" x2="925.0" y2="73.9" stroke="#178017" stroke-width="0.8"/>
<rect x="924.2" y="72.5" width="1.5" height="1.6" fill="#eef4ea" stroke="#1f9a1f" stroke-width="0.45"/>
<line x1="928.0" y1="71.6" x2="928.0" y2="74.4" stroke="#178017" stroke-width="0.8"/>
<rect x="927.2" y="72.5" width="1.5" height="1.6" fill="#000000" stroke="#1f9a1f" stroke-width="0.45"/>
<line x1="930.9" y1="72.4" x2="930.9" y2="75.0" stroke="#178017" stroke-width="0.8"/>
<rect x="930.1" y="72.5" width="1.5" height="1.6" fill="#eef4ea" stroke="#1f9a1f" stroke-width="0.45"/>
<line x1="933.9" y1="71.1" x2="933.9" y2="74.8" stroke="#178017" stroke-width="0.8"/>
<rect x="933.1" y="71.7" width="1.5" height="1.6" fill="#000000" stroke="#1f9a1f" stroke-width="0.45"/>
<line x1="936.9" y1="68.1" x2="936.9" y2="73.3" stroke="#178017" stroke-width="0.8"/>
<rect x="936.1" y="69.7" width="1.5" height="2.0" fill="#000000" stroke="#1f9a1f" stroke-width="0.45"/>
<line x1="939.9" y1="66.9" x2="939.9" y2="70.8" stroke="#178017" stroke-width="0.8"/>
<rect x="939.1" y="67.8" width="1.5" height="1.9" fill="#000000" stroke="#1f9a1f" stroke-width="0.45"/>
<line x1="942.8" y1="65.3" x2="942.8" y2="69.2" stroke="#178017" stroke-width="0.8"/>
<rect x="942.0" y="66.0" width="1.5" height="1.8" fill="#eef4ea" stroke="#1f9a1f" stroke-width="0.45"/>
<line x1="945.8" y1="63.2" x2="945.8" y2="67.5" stroke="#178017" stroke-width="0.8"/>
<rect x="945.0" y="64.4" width="1.5" height="1.6" fill="#000000" stroke="#1f9a1f" stroke-width="0.45"/>
<line x1="948.8" y1="62.9" x2="948.8" y2="65.6" stroke="#178017" stroke-width="0.8"/>
<rect x="948.0" y="63.1" width="1.5" height="1.6" fill="#000000" stroke="#1f9a1f" stroke-width="0.45"/>
<line x1="951.7" y1="61.0" x2="951.7" y2="64.4" stroke="#178017" stroke-width="0.8"/>
<rect x="950.9" y="61.8" width="1.5" height="1.7" fill="#000000" stroke="#1f9a1f" stroke-width="0.45"/>
<line x1="954.7" y1="60.1" x2="954.7" y2="62.8" stroke="#178017" stroke-width="0.8"/>
<rect x="953.9" y="60.8" width="1.5" height="1.6" fill="#000000" stroke="#1f9a1f" stroke-width="0.45"/>
<line x1="957.7" y1="60.2" x2="957.7" y2="63.4" stroke="#178017" stroke-width="0.8"/>
<rect x="956.9" y="61.1" width="1.5" height="1.6" fill="#eef4ea" stroke="#1f9a1f" stroke-width="0.45"/>
<line x1="960.6" y1="60.9" x2="960.6" y2="65.2" stroke="#178017" stroke-width="0.8"/>
<rect x="959.8" y="62.2" width="1.5" height="1.6" fill="#eef4ea" stroke="#1f9a1f" stroke-width="0.45"/>
<line x1="963.6" y1="63.1" x2="963.6" y2="65.9" stroke="#178017" stroke-width="0.8"/>
<rect x="962.8" y="63.5" width="1.5" height="1.6" fill="#eef4ea" stroke="#1f9a1f" stroke-width="0.45"/>
<line x1="966.6" y1="62.7" x2="966.6" y2="65.8" stroke="#178017" stroke-width="0.8"/>
<rect x="965.8" y="63.2" width="1.5" height="1.6" fill="#000000" stroke="#1f9a1f" stroke-width="0.45"/>
<line x1="969.6" y1="61.1" x2="969.6" y2="63.7" stroke="#178017" stroke-width="0.8"/>
<rect x="968.8" y="61.9" width="1.5" height="1.6" fill="#eef4ea" stroke="#1f9a1f" stroke-width="0.45"/>
<line x1="972.5" y1="59.3" x2="972.5" y2="63.7" stroke="#178017" stroke-width="0.8"/>
<rect x="971.7" y="60.6" width="1.5" height="1.6" fill="#000000" stroke="#1f9a1f" stroke-width="0.45"/>
<line x1="975.5" y1="59.6" x2="975.5" y2="61.8" stroke="#178017" stroke-width="0.8"/>
<rect x="974.7" y="60.0" width="1.5" height="1.6" fill="#eef4ea" stroke="#1f9a1f" stroke-width="0.45"/>
<line x1="978.5" y1="60.4" x2="978.5" y2="63.4" stroke="#178017" stroke-width="0.8"/>
<rect x="977.7" y="60.5" width="1.5" height="1.6" fill="#eef4ea" stroke="#1f9a1f" stroke-width="0.45"/>
<line x1="981.4" y1="60.4" x2="981.4" y2="63.5" stroke="#178017" stroke-width="0.8"/>
<rect x="980.6" y="61.1" width="1.5" height="1.6" fill="#eef4ea" stroke="#1f9a1f" stroke-width="0.45"/>
<line x1="984.4" y1="59.9" x2="984.4" y2="63.1" stroke="#178017" stroke-width="0.8"/>
<rect x="983.6" y="61.0" width="1.5" height="1.6" fill="#eef4ea" stroke="#1f9a1f" stroke-width="0.45"/>
<line x1="987.4" y1="61.0" x2="987.4" y2="63.8" stroke="#178017" stroke-width="0.8"/>
<rect x="986.6" y="61.2" width="1.5" height="1.6" fill="#eef4ea" stroke="#1f9a1f" stroke-width="0.45"/>
<line x1="990.3" y1="61.8" x2="990.3" y2="63.2" stroke="#178017" stroke-width="0.8"/>
<rect x="989.5" y="61.5" width="1.5" height="1.6" fill="#eef4ea" stroke="#1f9a1f" stroke-width="0.45"/>
<line x1="993.3" y1="61.6" x2="993.3" y2="64.0" stroke="#178017" stroke-width="0.8"/>
<rect x="992.5" y="61.4" width="1.5" height="1.6" fill="#000000" stroke="#1f9a1f" stroke-width="0.45"/>
<line x1="996.3" y1="61.6" x2="996.3" y2="63.3" stroke="#178017" stroke-width="0.8"/>
<rect x="995.5" y="61.4" width="1.5" height="1.6" fill="#eef4ea" stroke="#1f9a1f" stroke-width="0.45"/>
<line x1="999.3" y1="61.6" x2="999.3" y2="65.3" stroke="#178017" stroke-width="0.8"/>
<rect x="998.5" y="62.2" width="1.5" height="2.3" fill="#eef4ea" stroke="#1f9a1f" stroke-width="0.45"/>
<line x1="1002.2" y1="63.7" x2="1002.2" y2="66.9" stroke="#178017" stroke-width="0.8"/>
<rect x="1001.4" y="64.5" width="1.5" height="1.9" fill="#eef4ea" stroke="#1f9a1f" stroke-width="0.45"/>
<line x1="1005.2" y1="65.9" x2="1005.2" y2="69.6" stroke="#178017" stroke-width="0.8"/>
<rect x="1004.4" y="66.4" width="1.5" height="1.6" fill="#eef4ea" stroke="#1f9a1f" stroke-width="0.45"/>
<line x1="1008.2" y1="66.2" x2="1008.2" y2="69.2" stroke="#178017" stroke-width="0.8"/>
<rect x="1007.4" y="67.4" width="1.5" height="1.6" fill="#eef4ea" stroke="#1f9a1f" stroke-width="0.45"/>
<line x1="1011.1" y1="68.0" x2="1011.1" y2="70.1" stroke="#178017" stroke-width="0.8"/>
<rect x="1010.3" y="68.0" width="1.5" height="1.6" fill="#eef4ea" stroke="#1f9a1f" stroke-width="0.45"/>
<line x1="1014.1" y1="68.1" x2="1014.1" y2="70.7" stroke="#178017" stroke-width="0.8"/>
<rect x="1013.3" y="68.2" width="1.5" height="1.6" fill="#eef4ea" stroke="#1f9a1f" stroke-width="0.45"/>
<line x1="1017.1" y1="67.8" x2="1017.1" y2="70.7" stroke="#178017" stroke-width="0.8"/>
<rect x="1016.3" y="68.3" width="1.5" height="1.6" fill="#000000" stroke="#1f9a1f" stroke-width="0.45"/>
<line x1="1020.0" y1="67.8" x2="1020.0" y2="70.3" stroke="#178017" stroke-width="0.8"/>
<rect x="1019.2" y="68.4" width="1.5" height="1.6" fill="#eef4ea" stroke="#1f9a1f" stroke-width="0.45"/>
<line x1="1023.0" y1="66.8" x2="1023.0" y2="71.1" stroke="#178017" stroke-width="0.8"/>
<rect x="1022.2" y="67.5" width="1.5" height="1.9" fill="#000000" stroke="#1f9a1f" stroke-width="0.45"/>
<line x1="1026.0" y1="62.8" x2="1026.0" y2="68.5" stroke="#178017" stroke-width="0.8"/>
<rect x="1025.2" y="64.2" width="1.5" height="3.3" fill="#000000" stroke="#1f9a1f" stroke-width="0.45"/>
<line x1="1029.0" y1="61.1" x2="1029.0" y2="65.8" stroke="#178017" stroke-width="0.8"/>
<rect x="1028.2" y="61.5" width="1.5" height="2.7" fill="#000000" stroke="#1f9a1f" stroke-width="0.45"/>
<line x1="1031.9" y1="59.7" x2="1031.9" y2="63.3" stroke="#178017" stroke-width="0.8"/>
<rect x="1031.1" y="61.0" width="1.5" height="1.6" fill="#eef4ea" stroke="#1f9a1f" stroke-width="0.45"/>
<line x1="1034.9" y1="61.3" x2="1034.9" y2="63.6" stroke="#178017" stroke-width="0.8"/>
<rect x="1034.1" y="61.8" width="1.5" height="1.6" fill="#eef4ea" stroke="#1f9a1f" stroke-width="0.45"/>
<line x1="1037.9" y1="62.6" x2="1037.9" y2="65.1" stroke="#178017" stroke-width="0.8"/>
<rect x="1037.1" y="62.7" width="1.5" height="1.6" fill="#eef4ea" stroke="#1f9a1f" stroke-width="0.45"/>
<line x1="1040.8" y1="62.8" x2="1040.8" y2="66.9" stroke="#178017" stroke-width="0.8"/>
<rect x="1040.0" y="63.8" width="1.5" height="1.6" fill="#eef4ea" stroke="#1f9a1f" stroke-width="0.45"/>
<line x1="1043.8" y1="64.6" x2="1043.8" y2="67.5" stroke="#178017" stroke-width="0.8"/>
<rect x="1043.0" y="64.9" width="1.5" height="1.6" fill="#eef4ea" stroke="#1f9a1f" stroke-width="0.45"/>
<line x1="1046.8" y1="65.8" x2="1046.8" y2="67.5" stroke="#178017" stroke-width="0.8"/>
<rect x="1046.0" y="65.6" width="1.5" height="1.6" fill="#eef4ea" stroke="#1f9a1f" stroke-width="0.45"/>
<line x1="1049.7" y1="65.8" x2="1049.7" y2="67.4" stroke="#178017" stroke-width="0.8"/>
<rect x="1048.9" y="65.9" width="1.5" height="1.6" fill="#eef4ea" stroke="#1f9a1f" stroke-width="0.45"/>
<line x1="1052.7" y1="65.5" x2="1052.7" y2="67.7" stroke="#178017" stroke-width="0.8"/>
<rect x="1051.9" y="66.1" width="1.5" height="1.6" fill="#eef4ea" stroke="#1f9a1f" stroke-width="0.45"/>
<line x1="1055.7" y1="66.0" x2="1055.7" y2="67.6" stroke="#178017" stroke-width="0.8"/>
<rect x="1054.9" y="66.3" width="1.5" height="1.6" fill="#eef4ea" stroke="#1f9a1f" stroke-width="0.45"/>
<line x1="1058.7" y1="66.4" x2="1058.7" y2="67.9" stroke="#178017" stroke-width="0.8"/>
<rect x="1057.9" y="66.4" width="1.5" height="1.6" fill="#eef4ea" stroke="#1f9a1f" stroke-width="0.45"/>
<line x1="1061.6" y1="65.4" x2="1061.6" y2="68.9" stroke="#178017" stroke-width="0.8"/>
<rect x="1060.8" y="66.2" width="1.5" height="1.6" fill="#eef4ea" stroke="#1f9a1f" stroke-width="0.45"/>
<line x1="1064.6" y1="66.0" x2="1064.6" y2="67.3" stroke="#178017" stroke-width="0.8"/>
<rect x="1063.8" y="66.0" width="1.5" height="1.6" fill="#eef4ea" stroke="#1f9a1f" stroke-width="0.45"/>
<line x1="1067.6" y1="65.8" x2="1067.6" y2="68.3" stroke="#178017" stroke-width="0.8"/>
<rect x="1066.8" y="66.4" width="1.5" height="1.6" fill="#eef4ea" stroke="#1f9a1f" stroke-width="0.45"/>
<line x1="1070.5" y1="66.4" x2="1070.5" y2="69.4" stroke="#178017" stroke-width="0.8"/>
<rect x="1069.7" y="66.8" width="1.5" height="1.6" fill="#eef4ea" stroke="#1f9a1f" stroke-width="0.45"/>
<line x1="1073.5" y1="67.0" x2="1073.5" y2="69.7" stroke="#178017" stroke-width="0.8"/>
<rect x="1072.7" y="67.1" width="1.5" height="1.6" fill="#eef4ea" stroke="#1f9a1f" stroke-width="0.45"/>
<line x1="1076.5" y1="66.5" x2="1076.5" y2="69.0" stroke="#178017" stroke-width="0.8"/>
<rect x="1075.7" y="67.1" width="1.5" height="1.6" fill="#000000" stroke="#1f9a1f" stroke-width="0.45"/>
<line x1="1079.4" y1="66.2" x2="1079.4" y2="68.1" stroke="#178017" stroke-width="0.8"/>
<rect x="1078.6" y="66.9" width="1.5" height="1.6" fill="#eef4ea" stroke="#1f9a1f" stroke-width="0.45"/>
<line x1="1082.4" y1="66.0" x2="1082.4" y2="68.6" stroke="#178017" stroke-width="0.8"/>
<rect x="1081.6" y="67.1" width="1.5" height="1.6" fill="#eef4ea" stroke="#1f9a1f" stroke-width="0.45"/>
<line x1="1085.4" y1="66.5" x2="1085.4" y2="69.1" stroke="#178017" stroke-width="0.8"/>
<rect x="1084.6" y="67.1" width="1.5" height="1.6" fill="#eef4ea" stroke="#1f9a1f" stroke-width="0.45"/>
<line x1="1088.4" y1="67.2" x2="1088.4" y2="69.0" stroke="#178017" stroke-width="0.8"/>
<rect x="1087.6" y="67.2" width="1.5" height="1.6" fill="#eef4ea" stroke="#1f9a1f" stroke-width="0.45"/>
<line x1="1091.3" y1="67.8" x2="1091.3" y2="70.7" stroke="#178017" stroke-width="0.8"/>
<rect x="1090.5" y="67.9" width="1.5" height="1.6" fill="#eef4ea" stroke="#1f9a1f" stroke-width="0.45"/>
<line x1="1094.3" y1="67.7" x2="1094.3" y2="73.4" stroke="#178017" stroke-width="0.8"/>
<rect x="1093.5" y="69.1" width="1.5" height="3.9" fill="#eef4ea" stroke="#1f9a1f" stroke-width="0.45"/>
<line x1="1097.3" y1="71.6" x2="1097.3" y2="76.4" stroke="#178017" stroke-width="0.8"/>
<rect x="1096.5" y="73.0" width="1.5" height="2.4" fill="#eef4ea" stroke="#1f9a1f" stroke-width="0.45"/>
<line x1="1100.2" y1="74.3" x2="1100.2" y2="77.7" stroke="#178017" stroke-width="0.8"/>
<rect x="1099.4" y="75.4" width="1.5" height="1.6" fill="#eef4ea" stroke="#1f9a1f" stroke-width="0.45"/>
<line x1="1103.2" y1="76.3" x2="1103.2" y2="78.6" stroke="#178017" stroke-width="0.8"/>
<rect x="1102.4" y="76.8" width="1.5" height="1.6" fill="#eef4ea" stroke="#1f9a1f" stroke-width="0.45"/>
<line x1="1106.2" y1="76.8" x2="1106.2" y2="81.4" stroke="#178017" stroke-width="0.8"/>
<rect x="1105.4" y="78.2" width="1.5" height="1.8" fill="#eef4ea" stroke="#1f9a1f" stroke-width="0.45"/>
<line x1="1109.1" y1="78.7" x2="1109.1" y2="82.4" stroke="#178017" stroke-width="0.8"/>
<rect x="1108.3" y="80.0" width="1.5" height="1.6" fill="#eef4ea" stroke="#1f9a1f" stroke-width="0.45"/>
<line x1="1112.1" y1="80.7" x2="1112.1" y2="83.9" stroke="#178017" stroke-width="0.8"/>
<rect x="1111.3" y="81.2" width="1.5" height="1.6" fill="#eef4ea" stroke="#1f9a1f" stroke-width="0.45"/>
<line x1="1115.1" y1="81.7" x2="1115.1" y2="84.6" stroke="#178017" stroke-width="0.8"/>
<rect x="1114.3" y="82.1" width="1.5" height="1.6" fill="#eef4ea" stroke="#1f9a1f" stroke-width="0.45"/>
<line x1="1118.1" y1="82.7" x2="1118.1" y2="86.3" stroke="#178017" stroke-width="0.8"/>
<rect x="1117.3" y="83.2" width="1.5" height="1.6" fill="#eef4ea" stroke="#1f9a1f" stroke-width="0.45"/>
<line x1="1121.0" y1="82.1" x2="1121.0" y2="85.3" stroke="#178017" stroke-width="0.8"/>
<rect x="1120.2" y="82.9" width="1.5" height="1.8" fill="#eef4ea" stroke="#1f9a1f" stroke-width="0.45"/>
<line x1="1124.0" y1="79.5" x2="1124.0" y2="83.7" stroke="#178017" stroke-width="0.8"/>
<rect x="1123.2" y="81.0" width="1.5" height="1.9" fill="#eef4ea" stroke="#1f9a1f" stroke-width="0.45"/>
<line x1="1127.0" y1="77.3" x2="1127.0" y2="82.6" stroke="#178017" stroke-width="0.8"/>
<rect x="1126.2" y="78.0" width="1.5" height="3.0" fill="#eef4ea" stroke="#1f9a1f" stroke-width="0.45"/>
<line x1="1129.9" y1="76.7" x2="1129.9" y2="81.2" stroke="#178017" stroke-width="0.8"/>
<rect x="1129.1" y="77.9" width="1.5" height="1.6" fill="#eef4ea" stroke="#1f9a1f" stroke-width="0.45"/>
<line x1="1132.9" y1="77.9" x2="1132.9" y2="82.3" stroke="#178017" stroke-width="0.8"/>
<rect x="1132.1" y="79.4" width="1.5" height="1.6" fill="#eef4ea" stroke="#1f9a1f" stroke-width="0.45"/>
<line x1="1135.9" y1="79.1" x2="1135.9" y2="82.4" stroke="#178017" stroke-width="0.8"/>
<rect x="1135.1" y="79.8" width="1.5" height="1.6" fill="#000000" stroke="#1f9a1f" stroke-width="0.45"/>
<line x1="1138.8" y1="75.4" x2="1138.8" y2="81.4" stroke="#178017" stroke-width="0.8"/>
<rect x="1138.0" y="76.1" width="1.5" height="4.0" fill="#000000" stroke="#1f9a1f" stroke-width="0.45"/>
<line x1="1141.8" y1="72.3" x2="1141.8" y2="76.5" stroke="#178017" stroke-width="0.8"/>
<rect x="1141.0" y="72.9" width="1.5" height="3.2" fill="#000000" stroke="#1f9a1f" stroke-width="0.45"/>
<line x1="1144.8" y1="70.2" x2="1144.8" y2="73.5" stroke="#178017" stroke-width="0.8"/>
<rect x="1144.0" y="71.1" width="1.5" height="1.8" fill="#000000" stroke="#1f9a1f" stroke-width="0.45"/>
<line x1="1147.8" y1="67.6" x2="1147.8" y2="72.3" stroke="#178017" stroke-width="0.8"/>
<rect x="1147.0" y="68.9" width="1.5" height="2.1" fill="#eef4ea" stroke="#1f9a1f" stroke-width="0.45"/>
<line x1="1150.7" y1="67.7" x2="1150.7" y2="70.2" stroke="#178017" stroke-width="0.8"/>
<rect x="1149.9" y="67.7" width="1.5" height="1.6" fill="#000000" stroke="#1f9a1f" stroke-width="0.45"/>
<line x1="1153.7" y1="66.4" x2="1153.7" y2="69.8" stroke="#178017" stroke-width="0.8"/>
<rect x="1152.9" y="67.2" width="1.5" height="1.6" fill="#000000" stroke="#1f9a1f" stroke-width="0.45"/>
<line x1="1156.7" y1="66.1" x2="1156.7" y2="69.7" stroke="#178017" stroke-width="0.8"/>
<rect x="1155.9" y="67.0" width="1.5" height="1.6" fill="#000000" stroke="#1f9a1f" stroke-width="0.45"/>
<line x1="1159.6" y1="66.5" x2="1159.6" y2="68.1" stroke="#178017" stroke-width="0.8"/>
<rect x="1158.8" y="66.6" width="1.5" height="1.6" fill="#eef4ea" stroke="#1f9a1f" stroke-width="0.45"/>
<line x1="1162.6" y1="65.7" x2="1162.6" y2="68.8" stroke="#178017" stroke-width="0.8"/>
<rect x="1161.8" y="66.3" width="1.5" height="1.6" fill="#eef4ea" stroke="#1f9a1f" stroke-width="0.45"/>
<line x1="1165.6" y1="66.3" x2="1165.6" y2="67.7" stroke="#178017" stroke-width="0.8"/>
<rect x="1164.8" y="66.4" width="1.5" height="1.6" fill="#000000" stroke="#1f9a1f" stroke-width="0.45"/>
<line x1="1168.5" y1="66.4" x2="1168.5" y2="68.0" stroke="#178017" stroke-width="0.8"/>
<rect x="1167.7" y="66.3" width="1.5" height="1.6" fill="#eef4ea" stroke="#1f9a1f" stroke-width="0.45"/>
<line x1="1171.5" y1="66.6" x2="1171.5" y2="67.9" stroke="#178017" stroke-width="0.8"/>
<rect x="1170.7" y="66.3" width="1.5" height="1.6" fill="#000000" stroke="#1f9a1f" stroke-width="0.45"/>
<line x1="1174.5" y1="66.1" x2="1174.5" y2="68.0" stroke="#178017" stroke-width="0.8"/>
<rect x="1173.7" y="66.3" width="1.5" height="1.6" fill="#eef4ea" stroke="#1f9a1f" stroke-width="0.45"/>
<line x1="1177.5" y1="66.1" x2="1177.5" y2="68.9" stroke="#178017" stroke-width="0.8"/>
<rect x="1176.7" y="66.5" width="1.5" height="1.6" fill="#eef4ea" stroke="#1f9a1f" stroke-width="0.45"/>
<line x1="1180.4" y1="66.9" x2="1180.4" y2="68.4" stroke="#178017" stroke-width="0.8"/>
<rect x="1179.6" y="66.6" width="1.5" height="1.6" fill="#eef4ea" stroke="#1f9a1f" stroke-width="0.45"/>
<line x1="1183.4" y1="66.0" x2="1183.4" y2="68.6" stroke="#178017" stroke-width="0.8"/>
<rect x="1182.6" y="66.8" width="1.5" height="1.6" fill="#eef4ea" stroke="#1f9a1f" stroke-width="0.45"/>
<line x1="1186.4" y1="66.3" x2="1186.4" y2="68.4" stroke="#c8e8b8" stroke-width="0.8"/>
<rect x="1185.6" y="66.8" width="1.5" height="1.6" fill="#f0f4e0" stroke="#c8e8a8" stroke-width="0.45"/>
<line x1="1189.3" y1="64.9" x2="1189.3" y2="68.9" stroke="#c8e8b8" stroke-width="0.8"/>
<rect x="1188.5" y="65.4" width="1.5" height="2.0" fill="#f0f4e0" stroke="#c8e8a8" stroke-width="0.45"/>
<line x1="1192.3" y1="62.5" x2="1192.3" y2="66.1" stroke="#c8e8b8" stroke-width="0.8"/>
<rect x="1191.5" y="62.9" width="1.5" height="2.6" fill="#f0f4e0" stroke="#c8e8a8" stroke-width="0.45"/>
<line x1="1195.3" y1="59.4" x2="1195.3" y2="63.2" stroke="#c8e8b8" stroke-width="0.8"/>
<rect x="1194.5" y="61.2" width="1.5" height="1.7" fill="#f0f4e0" stroke="#c8e8a8" stroke-width="0.45"/>
<line x1="1198.2" y1="60.1" x2="1198.2" y2="63.1" stroke="#c8e8b8" stroke-width="0.8"/>
<rect x="1197.4" y="60.6" width="1.5" height="1.6" fill="#f0f4e0" stroke="#c8e8a8" stroke-width="0.45"/>
<line x1="1201.2" y1="60.5" x2="1201.2" y2="62.8" stroke="#c8e8b8" stroke-width="0.8"/>
<rect x="1200.4" y="61.0" width="1.5" height="1.6" fill="#f0f4e0" stroke="#c8e8a8" stroke-width="0.45"/>
<line x1="1204.2" y1="61.2" x2="1204.2" y2="64.7" stroke="#c8e8b8" stroke-width="0.8"/>
<rect x="1203.4" y="61.7" width="1.5" height="1.6" fill="#f0f4e0" stroke="#c8e8a8" stroke-width="0.45"/>
<line x1="1207.2" y1="61.7" x2="1207.2" y2="64.4" stroke="#c8e8b8" stroke-width="0.8"/>
<rect x="1206.4" y="61.9" width="1.5" height="1.6" fill="#f0f4e0" stroke="#c8e8a8" stroke-width="0.45"/>
<line x1="1210.1" y1="61.3" x2="1210.1" y2="63.7" stroke="#c8e8b8" stroke-width="0.8"/>
<rect x="1209.3" y="61.3" width="1.5" height="1.6" fill="#f0f4e0" stroke="#c8e8a8" stroke-width="0.45"/>
<line x1="1213.1" y1="59.3" x2="1213.1" y2="63.2" stroke="#c8e8b8" stroke-width="0.8"/>
<rect x="1212.3" y="60.5" width="1.5" height="1.6" fill="#f0f4e0" stroke="#c8e8a8" stroke-width="0.45"/>
<line x1="1216.1" y1="59.5" x2="1216.1" y2="64.1" stroke="#c8e8b8" stroke-width="0.8"/>
<rect x="1215.3" y="60.8" width="1.5" height="2.4" fill="#f0f4e0" stroke="#c8e8a8" stroke-width="0.45"/>
<line x1="1219.0" y1="62.2" x2="1219.0" y2="66.7" stroke="#c8e8b8" stroke-width="0.8"/>
<rect x="1218.2" y="63.2" width="1.5" height="1.8" fill="#f0f4e0" stroke="#c8e8a8" stroke-width="0.45"/>
<line x1="1222.0" y1="63.2" x2="1222.0" y2="65.4" stroke="#c8e8b8" stroke-width="0.8"/>
<rect x="1221.2" y="64.1" width="1.5" height="1.6" fill="#f0f4e0" stroke="#c8e8a8" stroke-width="0.45"/>
<line x1="1225.0" y1="63.7" x2="1225.0" y2="66.5" stroke="#c8e8b8" stroke-width="0.8"/>
<rect x="1224.2" y="63.9" width="1.5" height="1.6" fill="#f0f4e0" stroke="#c8e8a8" stroke-width="0.45"/>
<line x1="1227.9" y1="63.6" x2="1227.9" y2="69.3" stroke="#c8e8b8" stroke-width="0.8"/>
<rect x="1227.1" y="64.5" width="1.5" height="3.2" fill="#f0f4e0" stroke="#c8e8a8" stroke-width="0.45"/>
<line x1="1230.9" y1="66.6" x2="1230.9" y2="68.9" stroke="#c8e8b8" stroke-width="0.8"/>
<rect x="1230.1" y="66.9" width="1.5" height="1.6" fill="#f0f4e0" stroke="#c8e8a8" stroke-width="0.45"/>
<line x1="1233.9" y1="66.4" x2="1233.9" y2="69.5" stroke="#c8e8b8" stroke-width="0.8"/>
<rect x="1233.1" y="67.2" width="1.5" height="1.6" fill="#f0f4e0" stroke="#c8e8a8" stroke-width="0.45"/>
<line x1="151.5" y1="104.5" x2="151.5" y2="107" stroke="#bcbcbc" stroke-width="0.8"/>
<text x="150.7" y="113.9" fill="#d0d0d0" font-family="Liberation Sans" font-size="5.2">13 Oct 2025</text>
<line x1="198.9" y1="104.5" x2="198.9" y2="107" stroke="#bcbcbc" stroke-width="0.8"/>
<text x="198.1" y="113.9" fill="#d0d0d0" font-family="Liberation Sans" font-size="5.2">13 Oct 10:10</text>
<line x1="246.4" y1="104.5" x2="246.4" y2="107" stroke="#bcbcbc" stroke-width="0.8"/>
<text x="245.6" y="113.9" fill="#d0d0d0" font-family="Liberation Sans" font-size="5.2">13 Oct 11:30</text>
<line x1="293.9" y1="104.5" x2="293.9" y2="107" stroke="#bcbcbc" stroke-width="0.8"/>
<text x="293.1" y="113.9" fill="#d0d0d0" font-family="Liberation Sans" font-size="5.2">13 Oct 12:50</text>
<line x1="341.3" y1="104.5" x2="341.3" y2="107" stroke="#bcbcbc" stroke-width="0.8"/>
<text x="340.5" y="113.9" fill="#d0d0d0" font-family="Liberation Sans" font-size="5.2">13 Oct 14:10</text>
<line x1="388.8" y1="104.5" x2="388.8" y2="107" stroke="#bcbcbc" stroke-width="0.8"/>
<text x="387.9" y="113.9" fill="#d0d0d0" font-family="Liberation Sans" font-size="5.2">13 Oct 15:30</text>
<line x1="436.2" y1="104.5" x2="436.2" y2="107" stroke="#bcbcbc" stroke-width="0.8"/>
<text x="435.4" y="113.9" fill="#d0d0d0" font-family="Liberation Sans" font-size="5.2">13 Oct 16:50</text>
<line x1="483.7" y1="104.5" x2="483.7" y2="107" stroke="#bcbcbc" stroke-width="0.8"/>
<text x="482.9" y="113.9" fill="#d0d0d0" font-family="Liberation Sans" font-size="5.2">13 Oct 18:10</text>
<line x1="531.1" y1="104.5" x2="531.1" y2="107" stroke="#bcbcbc" stroke-width="0.8"/>
<text x="530.3" y="113.9" fill="#d0d0d0" font-family="Liberation Sans" font-size="5.2">13 Oct 19:30</text>
<line x1="578.5" y1="104.5" x2="578.5" y2="107" stroke="#bcbcbc" stroke-width="0.8"/>
<text x="577.8" y="113.9" fill="#d0d0d0" font-family="Liberation Sans" font-size="5.2">13 Oct 20:50</text>
<line x1="626.0" y1="104.5" x2="626.0" y2="107" stroke="#bcbcbc" stroke-width="0.8"/>
<text x="625.2" y="113.9" fill="#d0d0d0" font-family="Liberation Sans" font-size="5.2">13 Oct 22:12</text>
<line x1="673.5" y1="104.5" x2="673.5" y2="107" stroke="#bcbcbc" stroke-width="0.8"/>
<text x="672.7" y="113.9" fill="#d0d0d0" font-family="Liberation Sans" font-size="5.2">14 Oct 00:30</text>
<line x1="720.9" y1="104.5" x2="720.9" y2="107" stroke="#bcbcbc" stroke-width="0.8"/>
<text x="720.1" y="113.9" fill="#d0d0d0" font-family="Liberation Sans" font-size="5.2">14 Oct 01:50</text>
<line x1="768.4" y1="104.5" x2="768.4" y2="107" stroke="#bcbcbc" stroke-width="0.8"/>
<text x="767.6" y="113.9" fill="#d0d0d0" font-family="Liberation Sans" font-size="5.2">14 Oct 03:10</text>
<line x1="815.8" y1="104.5" x2="815.8" y2="107" stroke="#bcbcbc" stroke-width="0.8"/>
<text x="815.0" y="113.9" fill="#d0d0d0" font-family="Liberation Sans" font-size="5.2">14 Oct 04:30</text>
<line x1="863.2" y1="104.5" x2="863.2" y2="107" stroke="#bcbcbc" stroke-width="0.8"/>
<text x="862.5" y="113.9" fill="#d0d0d0" font-family="Liberation Sans" font-size="5.2">14 Oct 05:50</text>
<line x1="910.7" y1="104.5" x2="910.7" y2="107" stroke="#bcbcbc" stroke-width="0.8"/>
<text x="909.9" y="113.9" fill="#d0d0d0" font-family="Liberation Sans" font-size="5.2">14 Oct 07:10</text>
<line x1="958.2" y1="104.5" x2="958.2" y2="107" stroke="#bcbcbc" stroke-width="0.8"/>
<text x="957.4" y="113.9" fill="#d0d0d0" font-family="Liberation Sans" font-size="5.2">14 Oct 08:30</text>
<line x1="1005.6" y1="104.5" x2="1005.6" y2="107" stroke="#bcbcbc" stroke-width="0.8"/>
<text x="1004.8" y="113.9" fill="#d0d0d0" font-family="Liberation Sans" font-size="5.2">14 Oct 09:50</text>
<line x1="1053.1" y1="104.5" x2="1053.1" y2="107" stroke="#bcbcbc" stroke-width="0.8"/>
<text x="1052.3" y="113.9" fill="#d0d0d0" font-family="Liberation Sans" font-size="5.2">14 Oct 11:10</text>
<line x1="1100.5" y1="104.5" x2="1100.5" y2="107" stroke="#bcbcbc" stroke-width="0.8"/>
<text x="1099.7" y="113.9" fill="#d0d0d0" font-family="Liberation Sans" font-size="5.2">14 Oct 12:30</text>
<line x1="1148.0" y1="104.5" x2="1148.0" y2="107" stroke="#bcbcbc" stroke-width="0.8"/>
<text x="1147.2" y="113.9" fill="#d0d0d0" font-family="Liberation Sans" font-size="5.2">14 Oct 13:50</text>
<line x1="1195.4" y1="104.5" x2="1195.4" y2="107" stroke="#bcbcbc" stroke-width="0.8"/>
<text x="1194.6" y="113.9" fill="#d0d0d0" font-family="Liberation Sans" font-size="5.2">14 Oct 15:10</text>
<line x1="1241" y1="46.5" x2="1244" y2="46.5" stroke="#bcbcbc" stroke-width="0.8"/>
<text x="1244" y="49.5" fill="#d0d0d0" font-family="Liberation Sans" font-size="5.4">4165.245</text>
<line x1="1241" y1="94.0" x2="1244" y2="94.0" stroke="#bcbcbc" stroke-width="0.8"/>
<text x="1244" y="97.0" fill="#d0d0d0" font-family="Liberation Sans" font-size="5.4">4088.025</text>
<rect x="1242" y="65.5" width="26" height="7" fill="#fff"/>
<text x="1244" y="71.1" fill="#000" font-family="Liberation Sans" font-size="5.4">4129.210</text>
<path d="M153.5 36.5 L158 36.5 L155.75 39.5 Z" fill="#fff"/>
<text x="159" y="40" fill="#e0e0e0" font-family="Liberation Sans" font-size="5.6" textLength="31" lengthAdjust="spacingAndGlyphs">XAUUSDm,M5</text>
<text x="194.5" y="40" fill="#e0e0e0" font-family="Liberation Sans" font-size="5.3">4130.978 4132.032 4128.790 4129.210</text>
<text x="1231" y="40" text-anchor="end" fill="#e8e8e8" font-family="Liberation Sans" font-size="5.6" textLength="72" lengthAdjust="spacingAndGlyphs">金四年交易系统群营aa0290584</text>
<circle cx="1236.5" cy="38" r="2.6" fill="none" stroke="#ddd" stroke-width="0.7"/>
</svg>
<div class="a" style="left:5px;top:130px;width:9px;height:339px;background:linear-gradient(90deg,#c4d4e8,#dde7f2)"></div>
<div class="a" style="left:14px;top:132px;width:1255px;height:11.5px;background:#fff"></div>
<div class="a" style="left:14px;top:131.5px;width:1255px;height:1px;background:#d8d8d8"></div>
<div class="t" style="left:7px;top:129px;font-size:8px;font-weight:bold;color:#222">*</div>
<div class="t" style="left:16px;top:132.5px;font-size:7.4px">订单</div>
<div class="a" style="left:34px;top:136.5px;width:2px;height:2px;border-radius:1px;background:#ddd"></div>
<div class="t r" style="left:124px;width:186px;top:132.5px;font-size:7.4px">时间</div>
<div class="a" style="left:124px;top:133px;width:1px;height:10px;background:#ececec"></div>
<div class="t r" style="left:312px;width:83px;top:132.5px;font-size:7.4px">类型</div>
<div class="a" style="left:312px;top:133px;width:1px;height:10px;background:#ececec"></div>
<div class="t r" style="left:397px;width:66px;top:132.5px;font-size:7.4px">手数</div>
<div class="a" style="left:397px;top:133px;width:1px;height:10px;background:#ececec"></div>
<div class="t r" style="left:465px;width:83px;top:132.5px;font-size:7.4px">交易品种</div>
<div class="a" style="left:465px;top:133px;width:1px;height:10px;background:#ececec"></div>
<div class="t r" style="left:550px;width:83.5px;top:132.5px;font-size:7.4px">价格</div>
<div class="a" style="left:550px;top:133px;width:1px;height:10px;background:#ececec"></div>
<div class="t r" style="left:635.5px;width:83.0px;top:132.5px;font-size:7.4px">止损</div>
<div class="a" style="left:635.5px;top:133px;width:1px;height:10px;background:#ececec"></div>
<div class="t r" style="left:720.5px;width:83.0px;top:132.5px;font-size:7.4px">止盈</div>
<div class="a" style="left:720.5px;top:133px;width:1px;height:10px;background:#ececec"></div>
<div class="t r" style="left:805.5px;width:186.5px;top:132.5px;font-size:7.4px">时间</div>
<div class="a" style="left:805.5px;top:133px;width:1px;height:10px;background:#ececec"></div>
<div class="t r" style="left:994px;width:83px;top:132.5px;font-size:7.4px">价格</div>
<div class="a" style="left:994px;top:133px;width:1px;height:10px;background:#ececec"></div>
<div class="t r" style="left:1079px;width:83px;top:132.5px;font-size:7.4px">库存费</div>
<div class="a" style="left:1079px;top:133px;width:1px;height:10px;background:#ececec"></div>
<div class="t r" style="left:1164px;width:94px;top:132.5px;font-size:7.4px">获利</div>
<div class="a" style="left:1164px;top:133px;width:1px;height:10px;background:#ececec"></div>
<svg class="a" style="left:1260px;top:134px" width="9" height="8"><path d="M2 5 L4.5 2.5 L7 5" fill="none" stroke="#444" stroke-width="0.9"/></svg>
<div class="a" style="left:14px;top:143.50px;width:1246px;height:11.09px;background:#ffffff"></div>
<div class="a" style="left:720.5px;top:143.50px;width:85px;height:11.09px;background:#9cf09c"></div>
<div class="a" style="left:720.5px;top:144.10px;width:85px;height:10.09px;background:#5ded5d"></div>
<svg class="a" style="left:15px;top:145.10px" width="9" height="9"><path d="M1 0.5 H5 L7 2.5 V7.8 H1 Z" fill="#ffffff" stroke="#8696a8" stroke-width="0.7"/><circle cx="5.2" cy="3.9" r="1.1" fill="#3a88a8" opacity="0.8"/><path d="M3 8.6 A2.3 2.3 0 0 1 7.6 8.6 Z" fill="#3a88a8"/><circle cx="5.3" cy="7.2" r="1.9" fill="#3a88a8"/></svg>
<div class="t" style="left:25.5px;top:143.60px;color:#363636;font-size:7.7px;letter-spacing:-0.25px;transform:scaleY(1.1)">1622788587</div>
<div class="t r" style="left:124px;width:186px;top:143.60px;color:#363636;font-size:7.8px;letter-spacing:-0.35px;transform:scaleY(1.1)">2025.10.14 14:05:00</div>
<div class="t r" style="left:312px;width:83px;top:143.60px;color:#363636;font-size:7.8px;letter-spacing:-0.35px;transform:scaleY(1.1)">buy</div>
<div class="t r" style="left:397px;width:66px;top:143.60px;color:#363636;font-size:7.8px;letter-spacing:-0.35px;transform:scaleY(1.1)">0.10</div>
<div class="t r" style="left:465px;width:83px;top:143.60px;color:#363636;font-size:7.8px;letter-spacing:-0.35px;transform:scaleY(1.1)">xauusdm</div>
<div class="t r" style="left:550px;width:83.5px;top:143.60px;color:#363636;font-size:7.8px;letter-spacing:-0.35px;transform:scaleY(1.1)">4128.328</div>
<div class="t r" style="left:635.5px;width:83.0px;top:143.60px;color:#363636;font-size:7.8px;letter-spacing:-0.35px;transform:scaleY(1.1)">0.000</div>
<div class="t r" style="left:720.5px;width:83.0px;top:143.60px;color:#143a14;font-size:7.8px;letter-spacing:-0.35px;transform:scaleY(1.1)">4128.928</div>
<div class="t r" style="left:805.5px;width:186.5px;top:143.60px;color:#363636;font-size:7.8px;letter-spacing:-0.35px;transform:scaleY(1.1)">2025.10.14 14:05:03</div>
<div class="t r" style="left:994px;width:83px;top:143.60px;color:#363636;font-size:7.8px;letter-spacing:-0.35px;transform:scaleY(1.1)">4128.928</div>
<div class="t r" style="left:1079px;width:83px;top:143.60px;color:#363636;font-size:7.8px;letter-spacing:-0.35px;transform:scaleY(1.1)">0.00</div>
<div class="t r" style="left:1164px;width:94px;top:143.60px;color:#363636;font-size:7.8px;letter-spacing:-0.35px;transform:scaleY(1.1)">6.00</div>
<div class="a" style="left:14px;top:154.59px;width:1246px;height:11.09px;background:#ebebeb"></div>
<div class="a" style="left:720.5px;top:154.59px;width:85px;height:11.09px;background:#9cf09c"></div>
<div class="a" style="left:720.5px;top:155.19px;width:85px;height:10.09px;background:#5ded5d"></div>
<svg class="a" style="left:15px;top:156.19px" width="9" height="9"><path d="M1 0.5 H5 L7 2.5 V7.8 H1 Z" fill="#ffffff" stroke="#8696a8" stroke-width="0.7"/><circle cx="5.2" cy="3.9" r="1.1" fill="#3a88a8" opacity="0.8"/><path d="M3 8.6 A2.3 2.3 0 0 1 7.6 8.6 Z" fill="#3a88a8"/><circle cx="5.3" cy="7.2" r="1.9" fill="#3a88a8"/></svg>
<div class="t" style="left:25.5px;top:154.69px;color:#363636;font-size:7.7px;letter-spacing:-0.25px;transform:scaleY(1.1)">1622817021</div>
<div class="t r" style="left:124px;width:186px;top:154.69px;color:#363636;font-size:7.8px;letter-spacing:-0.35px;transform:scaleY(1.1)">2025.10.14 14:10:00</div>
<div class="t r" style="left:312px;width:83px;top:154.69px;color:#363636;font-size:7.8px;letter-spacing:-0.35px;transform:scaleY(1.1)">buy</div>
<div class="t r" style="left:397px;width:66px;top:154.69px;color:#363636;font-size:7.8px;letter-spacing:-0.35px;transform:scaleY(1.1)">0.10</div>
<div class="t r" style="left:465px;width:83px;top:154.69px;color:#363636;font-size:7.8px;letter-spacing:-0.35px;transform:scaleY(1.1)">xauusdm</div>
<div class="t r" style="left:550px;width:83.5px;top:154.69px;color:#363636;font-size:7.8px;letter-spacing:-0.35px;transform:scaleY(1.1)">4130.582</div>
<div class="t r" style="left:635.5px;width:83.0px;top:154.69px;color:#363636;font-size:7.8px;letter-spacing:-0.35px;transform:scaleY(1.1)">0.000</div>
<div class="t r" style="left:720.5px;width:83.0px;top:154.69px;color:#143a14;font-size:7.8px;letter-spacing:-0.35px;transform:scaleY(1.1)">4131.182</div>
<div class="t r" style="left:805.5px;width:186.5px;top:154.69px;color:#363636;font-size:7.8px;letter-spacing:-0.35px;transform:scaleY(1.1)">2025.10.14 14:10:16</div>
<div class="t r" style="left:994px;width:83px;top:154.69px;color:#363636;font-size:7.8px;letter-spacing:-0.35px;transform:scaleY(1.1)">4131.182</div>
<div class="t r" style="left:1079px;width:83px;top:154.69px;color:#363636;font-size:7.8px;letter-spacing:-0.35px;transform:scaleY(1.1)">0.00</div>
<div class="t r" style="left:1164px;width:94px;top:154.69px;color:#363636;font-size:7.8px;letter-spacing:-0.35px;transform:scaleY(1.1)">6.00</div>
<div class="a" style="left:14px;top:165.68px;width:1246px;height:11.09px;background:#ffffff"></div>
<div class="a" style="left:720.5px;top:165.68px;width:85px;height:11.09px;background:#9cf09c"></div>
<div class="a" style="left:720.5px;top:166.28px;width:85px;height:10.09px;background:#5ded5d"></div>
<svg class="a" style="left:15px;top:167.28px" width="9" height="9"><path d="M1 0.5 H5 L7 2.5 V7.8 H1 Z" fill="#ffffff" stroke="#8696a8" stroke-width="0.7"/><circle cx="5.2" cy="3.9" r="1.1" fill="#3a88a8" opacity="0.8"/><path d="M3 8.6 A2.3 2.3 0 0 1 7.6 8.6 Z" fill="#3a88a8"/><circle cx="5.3" cy="7.2" r="1.9" fill="#3a88a8"/></svg>
<div class="t" style="left:25.5px;top:165.78px;color:#363636;font-size:7.7px;letter-spacing:-0.25px;transform:scaleY(1.1)">1622844957</div>
<div class="t r" style="left:124px;width:186px;top:165.78px;color:#363636;font-size:7.8px;letter-spacing:-0.35px;transform:scaleY(1.1)">2025.10.14 14:15:00</div>
<div class="t r" style="left:312px;width:83px;top:165.78px;color:#363636;font-size:7.8px;letter-spacing:-0.35px;transform:scaleY(1.1)">buy</div>
<div class="t r" style="left:397px;width:66px;top:165.78px;color:#363636;font-size:7.8px;letter-spacing:-0.35px;transform:scaleY(1.1)">0.10</div>
<div class="t r" style="left:465px;width:83px;top:165.78px;color:#363636;font-size:7.8px;letter-spacing:-0.35px;transform:scaleY(1.1)">xauusdm</div>
<div class="t r" style="left:550px;width:83.5px;top:165.78px;color:#363636;font-size:7.8px;letter-spacing:-0.35px;transform:scaleY(1.1)">4134.410</div>
<div class="t r" style="left:635.5px;width:83.0px;top:165.78px;color:#363636;font-size:7.8px;letter-spacing:-0.35px;transform:scaleY(1.1)">0.000</div>
<div class="t r" style="left:720.5px;width:83.0px;top:165.78px;color:#143a14;font-size:7.8px;letter-spacing:-0.35px;transform:scaleY(1.1)">4135.010</div>
<div class="t r" style="left:805.5px;width:186.5px;top:165.78px;color:#363636;font-size:7.8px;letter-spacing:-0.35px;transform:scaleY(1.1)">2025.10.14 14:15:12</div>
<div class="t r" style="left:994px;width:83px;top:165.78px;color:#363636;font-size:7.8px;letter-spacing:-0.35px;transform:scaleY(1.1)">4135.461</div>
<div class="t r" style="left:1079px;width:83px;top:165.78px;color:#363636;font-size:7.8px;letter-spacing:-0.35px;transform:scaleY(1.1)">0.00</div>
<div class="t r" style="left:1164px;width:94px;top:165.78px;color:#363636;font-size:7.8px;letter-spacing:-0.35px;transform:scaleY(1.1)">10.51</div>
<div class="a" style="left:14px;top:176.77px;width:1246px;height:11.09px;background:#ebebeb"></div>
<div class="a" style="left:720.5px;top:176.77px;width:85px;height:11.09px;background:#9cf09c"></div>
<div class="a" style="left:720.5px;top:177.37px;width:85px;height:10.09px;background:#5ded5d"></div>
<svg class="a" style="left:15px;top:178.37px" width="9" height="9"><path d="M1 0.5 H5 L7 2.5 V7.8 H1 Z" fill="#ffffff" stroke="#8696a8" stroke-width="0.7"/><circle cx="5.2" cy="3.9" r="1.1" fill="#b04a3a" opacity="0.8"/><path d="M3 8.6 A2.3 2.3 0 0 1 7.6 8.6 Z" fill="#b04a3a"/><circle cx="5.3" cy="7.2" r="1.9" fill="#b04a3a"/></svg>
<div class="t" style="left:25.5px;top:176.87px;color:#363636;font-size:7.7px;letter-spacing:-0.25px;transform:scaleY(1.1)">1622868173</div>
<div class="t r" style="left:124px;width:186px;top:176.87px;color:#363636;font-size:7.8px;letter-spacing:-0.35px;transform:scaleY(1.1)">2025.10.14 14:20:00</div>
<div class="t r" style="left:312px;width:83px;top:176.87px;color:#363636;font-size:7.8px;letter-spacing:-0.35px;transform:scaleY(1.1)">sell</div>
<div class="t r" style="left:397px;width:66px;top:176.87px;color:#363636;font-size:7.8px;letter-spacing:-0.35px;transform:scaleY(1.1)">0.10</div>
<div class="t r" style="left:465px;width:83px;top:176.87px;color:#363636;font-size:7.8px;letter-spacing:-0.35px;transform:scaleY(1.1)">xauusdm</div>
<div class="t r" style="left:550px;width:83.5px;top:176.87px;color:#363636;font-size:7.8px;letter-spacing:-0.35px;transform:scaleY(1.1)">4130.661</div>
<div class="t r" style="left:635.5px;width:83.0px;top:176.87px;color:#363636;font-size:7.8px;letter-spacing:-0.35px;transform:scaleY(1.1)">0.000</div>
<div class="t r" style="left:720.5px;width:83.0px;top:176.87px;color:#143a14;font-size:7.8px;letter-spacing:-0.35px;transform:scaleY(1.1)">4130.061</div>
<div class="t r" style="left:805.5px;width:186.5px;top:176.87px;color:#363636;font-size:7.8px;letter-spacing:-0.35px;transform:scaleY(1.1)">2025.10.14 14:20:02</div>
<div class="t r" style="left:994px;width:83px;top:176.87px;color:#363636;font-size:7.8px;letter-spacing:-0.35px;transform:scaleY(1.1)">4130.061</div>
<div class="t r" style="left:1079px;width:83px;top:176.87px;color:#363636;font-size:7.8px;letter-spacing:-0.35px;transform:scaleY(1.1)">0.00</div>
<div class="t r" style="left:1164px;width:94px;top:176.87px;color:#363636;font-size:7.8px;letter-spacing:-0.35px;transform:scaleY(1.1)">6.00</div>
<div class="a" style="left:14px;top:187.86px;width:1246px;height:11.09px;background:#ffffff"></div>
<div class="a" style="left:720.5px;top:187.86px;width:85px;height:11.09px;background:#9cf09c"></div>
<div class="a" style="left:720.5px;top:188.46px;width:85px;height:10.09px;background:#5ded5d"></div>
<svg class="a" style="left:15px;top:189.46px" width="9" height="9"><path d="M1 0.5 H5 L7 2.5 V7.8 H1 Z" fill="#ffffff" stroke="#8696a8" stroke-width="0.7"/><circle cx="5.2" cy="3.9" r="1.1" fill="#b04a3a" opacity="0.8"/><path d="M3 8.6 A2.3 2.3 0 0 1 7.6 8.6 Z" fill="#b04a3a"/><circle cx="5.3" cy="7.2" r="1.9" fill="#b04a3a"/></svg>
<div class="t" style="left:25.5px;top:187.96px;color:#363636;font-size:7.7px;letter-spacing:-0.25px;transform:scaleY(1.1)">1622890807</div>
<div class="t r" style="left:124px;width:186px;top:187.96px;color:#363636;font-size:7.8px;letter-spacing:-0.35px;transform:scaleY(1.1)">2025.10.14 14:25:00</div>
<div class="t r" style="left:312px;width:83px;top:187.96px;color:#363636;font-size:7.8px;letter-spacing:-0.35px;transform:scaleY(1.1)">sell</div>
<div class="t r" style="left:397px;width:66px;top:187.96px;color:#363636;font-size:7.8px;letter-spacing:-0.35px;transform:scaleY(1.1)">0.10</div>
<div class="t r" style="left:465px;width:83px;top:187.96px;color:#363636;font-size:7.8px;letter-spacing:-0.35px;transform:scaleY(1.1)">xauusdm</div>
<div class="t r" style="left:550px;width:83.5px;top:187.96px;color:#363636;font-size:7.8px;letter-spacing:-0.35px;transform:scaleY(1.1)">4128.894</div>
<div class="t r" style="left:635.5px;width:83.0px;top:187.96px;color:#363636;font-size:7.8px;letter-spacing:-0.35px;transform:scaleY(1.1)">0.000</div>
<div class="t r" style="left:720.5px;width:83.0px;top:187.96px;color:#143a14;font-size:7.8px;letter-spacing:-0.35px;transform:scaleY(1.1)">4128.294</div>
<div class="t r" style="left:805.5px;width:186.5px;top:187.96px;color:#363636;font-size:7.8px;letter-spacing:-0.35px;transform:scaleY(1.1)">2025.10.14 14:25:02</div>
<div class="t r" style="left:994px;width:83px;top:187.96px;color:#363636;font-size:7.8px;letter-spacing:-0.35px;transform:scaleY(1.1)">4128.294</div>
<div class="t r" style="left:1079px;width:83px;top:187.96px;color:#363636;font-size:7.8px;letter-spacing:-0.35px;transform:scaleY(1.1)">0.00</div>
<div class="t r" style="left:1164px;width:94px;top:187.96px;color:#363636;font-size:7.8px;letter-spacing:-0.35px;transform:scaleY(1.1)">6.00</div>
<div class="a" style="left:14px;top:198.95px;width:1246px;height:11.09px;background:#ebebeb"></div>
<div class="a" style="left:720.5px;top:198.95px;width:85px;height:11.09px;background:#9cf09c"></div>
<div class="a" style="left:720.5px;top:199.55px;width:85px;height:10.09px;background:#5ded5d"></div>
<svg class="a" style="left:15px;top:200.55px" width="9" height="9"><path d="M1 0.5 H5 L7 2.5 V7.8 H1 Z" fill="#ffffff" stroke="#8696a8" stroke-width="0.7"/><circle cx="5.2" cy="3.9" r="1.1" fill="#3a88a8" opacity="0.8"/><path d="M3 8.6 A2.3 2.3 0 0 1 7.6 8.6 Z" fill="#3a88a8"/><circle cx="5.3" cy="7.2" r="1.9" fill="#3a88a8"/></svg>
<div class="t" style="left:25.5px;top:199.05px;color:#363636;font-size:7.7px;letter-spacing:-0.25px;transform:scaleY(1.1)">1622910628</div>
<div class="t r" style="left:124px;width:186px;top:199.05px;color:#363636;font-size:7.8px;letter-spacing:-0.35px;transform:scaleY(1.1)">2025.10.14 14:30:00</div>
<div class="t r" style="left:312px;width:83px;top:199.05px;color:#363636;font-size:7.8px;letter-spacing:-0.35px;transform:scaleY(1.1)">buy</div>
<div class="t r" style="left:397px;width:66px;top:199.05px;color:#363636;font-size:7.8px;letter-spacing:-0.35px;transform:scaleY(1.1)">0.10</div>
<div class="t r" style="left:465px;width:83px;top:199.05px;color:#363636;font-size:7.8px;letter-spacing:-0.35px;transform:scaleY(1.1)">xauusdm</div>
<div class="t r" style="left:550px;width:83.5px;top:199.05px;color:#363636;font-size:7.8px;letter-spacing:-0.35px;transform:scaleY(1.1)">4133.120</div>
<div class="t r" style="left:635.5px;width:83.0px;top:199.05px;color:#363636;font-size:7.8px;letter-spacing:-0.35px;transform:scaleY(1.1)">0.000</div>
<div class="t r" style="left:720.5px;width:83.0px;top:199.05px;color:#143a14;font-size:7.8px;letter-spacing:-0.35px;transform:scaleY(1.1)">4133.720</div>
<div class="t r" style="left:805.5px;width:186.5px;top:199.05px;color:#363636;font-size:7.8px;letter-spacing:-0.35px;transform:scaleY(1.1)">2025.10.14 14:30:35</div>
<div class="t r" style="left:994px;width:83px;top:199.05px;color:#363636;font-size:7.8px;letter-spacing:-0.35px;transform:scaleY(1.1)">4133.720</div>
<div class="t r" style="left:1079px;width:83px;top:199.05px;color:#363636;font-size:7.8px;letter-spacing:-0.35px;transform:scaleY(1.1)">0.00</div>
<div class="t r" style="left:1164px;width:94px;top:199.05px;color:#363636;font-size:7.8px;letter-spacing:-0.35px;transform:scaleY(1.1)">6.00</div>
<div class="a" style="left:14px;top:210.04px;width:1246px;height:11.09px;background:#ffffff"></div>
<div class="a" style="left:720.5px;top:210.04px;width:85px;height:11.09px;background:#9cf09c"></div>
<div class="a" style="left:720.5px;top:210.64px;width:85px;height:10.09px;background:#5ded5d"></div>
<svg class="a" style="left:15px;top:211.64px" width="9" height="9"><path d="M1 0.5 H5 L7 2.5 V7.8 H1 Z" fill="#ffffff" stroke="#8696a8" stroke-width="0.7"/><circle cx="5.2" cy="3.9" r="1.1" fill="#3a88a8" opacity="0.8"/><path d="M3 8.6 A2.3 2.3 0 0 1 7.6 8.6 Z" fill="#3a88a8"/><circle cx="5.3" cy="7.2" r="1.9" fill="#3a88a8"/></svg>
<div class="t" style="left:25.5px;top:210.14px;color:#363636;font-size:7.7px;letter-spacing:-0.25px;transform:scaleY(1.1)">1622932419</div>
<div class="t r" style="left:124px;width:186px;top:210.14px;color:#363636;font-size:7.8px;letter-spacing:-0.35px;transform:scaleY(1.1)">2025.10.14 14:35:00</div>
<div class="t r" style="left:312px;width:83px;top:210.14px;color:#363636;font-size:7.8px;letter-spacing:-0.35px;transform:scaleY(1.1)">buy</div>
<div class="t r" style="left:397px;width:66px;top:210.14px;color:#363636;font-size:7.8px;letter-spacing:-0.35px;transform:scaleY(1.1)">0.10</div>
<div class="t r" style="left:465px;width:83px;top:210.14px;color:#363636;font-size:7.8px;letter-spacing:-0.35px;transform:scaleY(1.1)">xauusdm</div>
<div class="t r" style="left:550px;width:83.5px;top:210.14px;color:#363636;font-size:7.8px;letter-spacing:-0.35px;transform:scaleY(1.1)">4135.340</div>
<div class="t r" style="left:635.5px;width:83.0px;top:210.14px;color:#363636;font-size:7.8px;letter-spacing:-0.35px;transform:scaleY(1.1)">0.000</div>
<div class="t r" style="left:720.5px;width:83.0px;top:210.14px;color:#143a14;font-size:7.8px;letter-spacing:-0.35px;transform:scaleY(1.1)">4135.940</div>
<div class="t r" style="left:805.5px;width:186.5px;top:210.14px;color:#363636;font-size:7.8px;letter-spacing:-0.35px;transform:scaleY(1.1)">2025.10.14 14:35:07</div>
<div class="t r" style="left:994px;width:83px;top:210.14px;color:#363636;font-size:7.8px;letter-spacing:-0.35px;transform:scaleY(1.1)">4136.598</div>
<div class="t r" style="left:1079px;width:83px;top:210.14px;color:#363636;font-size:7.8px;letter-spacing:-0.35px;transform:scaleY(1.1)">0.00</div>
<div class="t r" style="left:1164px;width:94px;top:210.14px;color:#363636;font-size:7.8px;letter-spacing:-0.35px;transform:scaleY(1.1)">12.58</div>
<div class="a" style="left:14px;top:221.13px;width:1246px;height:11.09px;background:#ebebeb"></div>
<div class="a" style="left:720.5px;top:221.13px;width:85px;height:11.09px;background:#9cf09c"></div>
<div class="a" style="left:720.5px;top:221.73px;width:85px;height:10.09px;background:#5ded5d"></div>
<svg class="a" style="left:15px;top:222.73px" width="9" height="9"><path d="M1 0.5 H5 L7 2.5 V7.8 H1 Z" fill="#ffffff" stroke="#8696a8" stroke-width="0.7"/><circle cx="5.2" cy="3.9" r="1.1" fill="#b04a3a" opacity="0.8"/><path d="M3 8.6 A2.3 2.3 0 0 1 7.6 8.6 Z" fill="#b04a3a"/><circle cx="5.3" cy="7.2" r="1.9" fill="#b04a3a"/></svg>
<div class="t" style="left:25.5px;top:221.23px;color:#363636;font-size:7.7px;letter-spacing:-0.25px;transform:scaleY(1.1)">1622955390</div>
<div class="t r" style="left:124px;width:186px;top:221.23px;color:#363636;font-size:7.8px;letter-spacing:-0.35px;transform:scaleY(1.1)">2025.10.14 14:40:00</div>
<div class="t r" style="left:312px;width:83px;top:221.23px;color:#363636;font-size:7.8px;letter-spacing:-0.35px;transform:scaleY(1.1)">sell</div>
<div class="t r" style="left:397px;width:66px;top:221.23px;color:#363636;font-size:7.8px;letter-spacing:-0.35px;transform:scaleY(1.1)">0.10</div>
<div class="t r" style="left:465px;width:83px;top:221.23px;color:#363636;font-size:7.8px;letter-spacing:-0.35px;transform:scaleY(1.1)">xauusdm</div>
<div class="t r" style="left:550px;width:83.5px;top:221.23px;color:#363636;font-size:7.8px;letter-spacing:-0.35px;transform:scaleY(1.1)">4132.083</div>
<div class="t r" style="left:635.5px;width:83.0px;top:221.23px;color:#363636;font-size:7.8px;letter-spacing:-0.35px;transform:scaleY(1.1)">0.000</div>
<div class="t r" style="left:720.5px;width:83.0px;top:221.23px;color:#143a14;font-size:7.8px;letter-spacing:-0.35px;transform:scaleY(1.1)">4131.483</div>
<div class="t r" style="left:805.5px;width:186.5px;top:221.23px;color:#363636;font-size:7.8px;letter-spacing:-0.35px;transform:scaleY(1.1)">2025.10.14 14:40:23</div>
<div class="t r" style="left:994px;width:83px;top:221.23px;color:#363636;font-size:7.8px;letter-spacing:-0.35px;transform:scaleY(1.1)">4131.483</div>
<div class="t r" style="left:1079px;width:83px;top:221.23px;color:#363636;font-size:7.8px;letter-spacing:-0.35px;transform:scaleY(1.1)">0.00</div>
<div class="t r" style="left:1164px;width:94px;top:221.23px;color:#363636;font-size:7.8px;letter-spacing:-0.35px;transform:scaleY(1.1)">6.00</div>
<div class="a" style="left:14px;top:232.22px;width:1246px;height:11.09px;background:#ffffff"></div>
<div class="a" style="left:720.5px;top:232.22px;width:85px;height:11.09px;background:#9cf09c"></div>
<div class="a" style="left:720.5px;top:232.82px;width:85px;height:10.09px;background:#5ded5d"></div>
<svg class="a" style="left:15px;top:233.82px" width="9" height="9"><path d="M1 0.5 H5 L7 2.5 V7.8 H1 Z" fill="#ffffff" stroke="#8696a8" stroke-width="0.7"/><circle cx="5.2" cy="3.9" r="1.1" fill="#b04a3a" opacity="0.8"/><path d="M3 8.6 A2.3 2.3 0 0 1 7.6 8.6 Z" fill="#b04a3a"/><circle cx="5.3" cy="7.2" r="1.9" fill="#b04a3a"/></svg>
<div class="t" style="left:25.5px;top:232.32px;color:#363636;font-size:7.7px;letter-spacing:-0.25px;transform:scaleY(1.1)">1622973769</div>
<div class="t r" style="left:124px;width:186px;top:232.32px;color:#363636;font-size:7.8px;letter-spacing:-0.35px;transform:scaleY(1.1)">2025.10.14 14:45:00</div>
<div class="t r" style="left:312px;width:83px;top:232.32px;color:#363636;font-size:7.8px;letter-spacing:-0.35px;transform:scaleY(1.1)">sell</div>
<div class="t r" style="left:397px;width:66px;top:232.32px;color:#363636;font-size:7.8px;letter-spacing:-0.35px;transform:scaleY(1.1)">0.10</div>
<div class="t r" style="left:465px;width:83px;top:232.32px;color:#363636;font-size:7.8px;letter-spacing:-0.35px;transform:scaleY(1.1)">xauusdm</div>
<div class="t r" style="left:550px;width:83.5px;top:232.32px;color:#363636;font-size:7.8px;letter-spacing:-0.35px;transform:scaleY(1.1)">4130.622</div>
<div class="t r" style="left:635.5px;width:83.0px;top:232.32px;color:#363636;font-size:7.8px;letter-spacing:-0.35px;transform:scaleY(1.1)">0.000</div>
<div class="t r" style="left:720.5px;width:83.0px;top:232.32px;color:#143a14;font-size:7.8px;letter-spacing:-0.35px;transform:scaleY(1.1)">4130.022</div>
<div class="t r" style="left:805.5px;width:186.5px;top:232.32px;color:#363636;font-size:7.8px;letter-spacing:-0.35px;transform:scaleY(1.1)">2025.10.14 14:45:10</div>
<div class="t r" style="left:994px;width:83px;top:232.32px;color:#363636;font-size:7.8px;letter-spacing:-0.35px;transform:scaleY(1.1)">4130.022</div>
<div class="t r" style="left:1079px;width:83px;top:232.32px;color:#363636;font-size:7.8px;letter-spacing:-0.35px;transform:scaleY(1.1)">0.00</div>
<div class="t r" style="left:1164px;width:94px;top:232.32px;color:#363636;font-size:7.8px;letter-spacing:-0.35px;transform:scaleY(1.1)">6.00</div>
<div class="a" style="left:14px;top:243.31px;width:1246px;height:11.09px;background:#ebebeb"></div>
<div class="a" style="left:720.5px;top:243.31px;width:85px;height:11.09px;background:#9cf09c"></div>
<div class="a" style="left:720.5px;top:243.91px;width:85px;height:10.09px;background:#5ded5d"></div>
<svg class="a" style="left:15px;top:244.91px" width="9" height="9"><path d="M1 0.5 H5 L7 2.5 V7.8 H1 Z" fill="#ffffff" stroke="#8696a8" stroke-width="0.7"/><circle cx="5.2" cy="3.9" r="1.1" fill="#b04a3a" opacity="0.8"/><path d="M3 8.6 A2.3 2.3 0 0 1 7.6 8.6 Z" fill="#b04a3a"/><circle cx="5.3" cy="7.2" r="1.9" fill="#b04a3a"/></svg>
<div class="t" style="left:25.5px;top:243.41px;color:#363636;font-size:7.7px;letter-spacing:-0.25px;transform:scaleY(1.1)">1622994366</div>
<div class="t r" style="left:124px;width:186px;top:243.41px;color:#363636;font-size:7.8px;letter-spacing:-0.35px;transform:scaleY(1.1)">2025.10.14 14:50:00</div>
<div class="t r" style="left:312px;width:83px;top:243.41px;color:#363636;font-size:7.8px;letter-spacing:-0.35px;transform:scaleY(1.1)">sell</div>
<div class="t r" style="left:397px;width:66px;top:243.41px;color:#363636;font-size:7.8px;letter-spacing:-0.35px;transform:scaleY(1.1)">0.10</div>
<div class="t r" style="left:465px;width:83px;top:243.41px;color:#363636;font-size:7.8px;letter-spacing:-0.35px;transform:scaleY(1.1)">xauusdm</div>
<div class="t r" style="left:550px;width:83.5px;top:243.41px;color:#363636;font-size:7.8px;letter-spacing:-0.35px;transform:scaleY(1.1)">4130.519</div>
<div class="t r" style="left:635.5px;width:83.0px;top:243.41px;color:#363636;font-size:7.8px;letter-spacing:-0.35px;transform:scaleY(1.1)">0.000</div>
<div class="t r" style="left:720.5px;width:83.0px;top:243.41px;color:#143a14;font-size:7.8px;letter-spacing:-0.35px;transform:scaleY(1.1)">4129.919</div>
<div class="t r" style="left:805.5px;width:186.5px;top:243.41px;color:#363636;font-size:7.8px;letter-spacing:-0.35px;transform:scaleY(1.1)">2025.10.14 14:50:01</div>
<div class="t r" style="left:994px;width:83px;top:243.41px;color:#363636;font-size:7.8px;letter-spacing:-0.35px;transform:scaleY(1.1)">4129.919</div>
<div class="t r" style="left:1079px;width:83px;top:243.41px;color:#363636;font-size:7.8px;letter-spacing:-0.35px;transform:scaleY(1.1)">0.00</div>
<div class="t r" style="left:1164px;width:94px;top:243.41px;color:#363636;font-size:7.8px;letter-spacing:-0.35px;transform:scaleY(1.1)">6.00</div>
<div class="a" style="left:14px;top:254.40px;width:1246px;height:11.09px;background:#ffffff"></div>
<div class="a" style="left:720.5px;top:254.40px;width:85px;height:11.09px;background:#9cf09c"></div>
<div class="a" style="left:720.5px;top:255.00px;width:85px;height:10.09px;background:#5ded5d"></div>
<svg class="a" style="left:15px;top:256.00px" width="9" height="9"><path d="M1 0.5 H5 L7 2.5 V7.8 H1 Z" fill="#ffffff" stroke="#8696a8" stroke-width="0.7"/><circle cx="5.2" cy="3.9" r="1.1" fill="#b04a3a" opacity="0.8"/><path d="M3 8.6 A2.3 2.3 0 0 1 7.6 8.6 Z" fill="#b04a3a"/><circle cx="5.3" cy="7.2" r="1.9" fill="#b04a3a"/></svg>
<div class="t" style="left:25.5px;top:254.50px;color:#363636;font-size:7.7px;letter-spacing:-0.25px;transform:scaleY(1.1)">1623013416</div>
<div class="t r" style="left:124px;width:186px;top:254.50px;color:#363636;font-size:7.8px;letter-spacing:-0.35px;transform:scaleY(1.1)">2025.10.14 14:55:00</div>
<div class="t r" style="left:312px;width:83px;top:254.50px;color:#363636;font-size:7.8px;letter-spacing:-0.35px;transform:scaleY(1.1)">sell</div>
<div class="t r" style="left:397px;width:66px;top:254.50px;color:#363636;font-size:7.8px;letter-spacing:-0.35px;transform:scaleY(1.1)">0.10</div>
<div class="t r" style="left:465px;width:83px;top:254.50px;color:#363636;font-size:7.8px;letter-spacing:-0.35px;transform:scaleY(1.1)">xauusdm</div>
<div class="t r" style="left:550px;width:83.5px;top:254.50px;color:#363636;font-size:7.8px;letter-spacing:-0.35px;transform:scaleY(1.1)">4128.644</div>
<div class="t r" style="left:635.5px;width:83.0px;top:254.50px;color:#363636;font-size:7.8px;letter-spacing:-0.35px;transform:scaleY(1.1)">0.000</div>
<div class="t r" style="left:720.5px;width:83.0px;top:254.50px;color:#143a14;font-size:7.8px;letter-spacing:-0.35px;transform:scaleY(1.1)">4129.267</div>
<div class="t r" style="left:805.5px;width:186.5px;top:254.50px;color:#363636;font-size:7.8px;letter-spacing:-0.35px;transform:scaleY(1.1)">2025.10.14 14:57:01</div>
<div class="t r" style="left:994px;width:83px;top:254.50px;color:#363636;font-size:7.8px;letter-spacing:-0.35px;transform:scaleY(1.1)">4129.267</div>
<div class="t r" style="left:1079px;width:83px;top:254.50px;color:#363636;font-size:7.8px;letter-spacing:-0.35px;transform:scaleY(1.1)">0.00</div>
<div class="t r" style="left:1164px;width:94px;top:254.50px;color:#363636;font-size:7.8px;letter-spacing:-0.35px;transform:scaleY(1.1)">-6.23</div>
<div class="a" style="left:14px;top:265.49px;width:1246px;height:11.09px;background:#ebebeb"></div>
<div class="a" style="left:720.5px;top:265.49px;width:85px;height:11.09px;background:#9cf09c"></div>
<div class="a" style="left:720.5px;top:266.09px;width:85px;height:10.09px;background:#5ded5d"></div>
<svg class="a" style="left:15px;top:267.09px" width="9" height="9"><path d="M1 0.5 H5 L7 2.5 V7.8 H1 Z" fill="#ffffff" stroke="#8696a8" stroke-width="0.7"/><circle cx="5.2" cy="3.9" r="1.1" fill="#b04a3a" opacity="0.8"/><path d="M3 8.6 A2.3 2.3 0 0 1 7.6 8.6 Z" fill="#b04a3a"/><circle cx="5.3" cy="7.2" r="1.9" fill="#b04a3a"/></svg>
<div class="t" style="left:25.5px;top:265.59px;color:#363636;font-size:7.7px;letter-spacing:-0.25px;transform:scaleY(1.1)">1623018989</div>
<div class="t r" style="left:124px;width:186px;top:265.59px;color:#363636;font-size:7.8px;letter-spacing:-0.35px;transform:scaleY(1.1)">2025.10.14 14:56:30</div>
<div class="t r" style="left:312px;width:83px;top:265.59px;color:#363636;font-size:7.8px;letter-spacing:-0.35px;transform:scaleY(1.1)">sell</div>
<div class="t r" style="left:397px;width:66px;top:265.59px;color:#363636;font-size:7.8px;letter-spacing:-0.35px;transform:scaleY(1.1)">0.30</div>
<div class="t r" style="left:465px;width:83px;top:265.59px;color:#363636;font-size:7.8px;letter-spacing:-0.35px;transform:scaleY(1.1)">xauusdm</div>
<div class="t r" style="left:550px;width:83.5px;top:265.59px;color:#363636;font-size:7.8px;letter-spacing:-0.35px;transform:scaleY(1.1)">4130.275</div>
<div class="t r" style="left:635.5px;width:83.0px;top:265.59px;color:#363636;font-size:7.8px;letter-spacing:-0.35px;transform:scaleY(1.1)">0.000</div>
<div class="t r" style="left:720.5px;width:83.0px;top:265.59px;color:#143a14;font-size:7.8px;letter-spacing:-0.35px;transform:scaleY(1.1)">4129.267</div>
<div class="t r" style="left:805.5px;width:186.5px;top:265.59px;color:#363636;font-size:7.8px;letter-spacing:-0.35px;transform:scaleY(1.1)">2025.10.14 14:57:01</div>
<div class="t r" style="left:994px;width:83px;top:265.59px;color:#363636;font-size:7.8px;letter-spacing:-0.35px;transform:scaleY(1.1)">4129.267</div>
<div class="t r" style="left:1079px;width:83px;top:265.59px;color:#363636;font-size:7.8px;letter-spacing:-0.35px;transform:scaleY(1.1)">0.00</div>
<div class="t r" style="left:1164px;width:94px;top:265.59px;color:#363636;font-size:7.8px;letter-spacing:-0.35px;transform:scaleY(1.1)">30.24</div>
<div class="a" style="left:14px;top:276.58px;width:1246px;height:11.09px;background:#ffffff"></div>
<div class="a" style="left:720.5px;top:276.58px;width:85px;height:11.09px;background:#9cf09c"></div>
<div class="a" style="left:720.5px;top:277.18px;width:85px;height:10.09px;background:#5ded5d"></div>
<svg class="a" style="left:15px;top:278.18px" width="9" height="9"><path d="M1 0.5 H5 L7 2.5 V7.8 H1 Z" fill="#ffffff" stroke="#8696a8" stroke-width="0.7"/><circle cx="5.2" cy="3.9" r="1.1" fill="#3a88a8" opacity="0.8"/><path d="M3 8.6 A2.3 2.3 0 0 1 7.6 8.6 Z" fill="#3a88a8"/><circle cx="5.3" cy="7.2" r="1.9" fill="#3a88a8"/></svg>
<div class="t" style="left:25.5px;top:276.68px;color:#363636;font-size:7.7px;letter-spacing:-0.25px;transform:scaleY(1.1)">1623030776</div>
<div class="t r" style="left:124px;width:186px;top:276.68px;color:#363636;font-size:7.8px;letter-spacing:-0.35px;transform:scaleY(1.1)">2025.10.14 15:00:00</div>
<div class="t r" style="left:312px;width:83px;top:276.68px;color:#363636;font-size:7.8px;letter-spacing:-0.35px;transform:scaleY(1.1)">buy</div>
<div class="t r" style="left:397px;width:66px;top:276.68px;color:#363636;font-size:7.8px;letter-spacing:-0.35px;transform:scaleY(1.1)">0.10</div>
<div class="t r" style="left:465px;width:83px;top:276.68px;color:#363636;font-size:7.8px;letter-spacing:-0.35px;transform:scaleY(1.1)">xauusdm</div>
<div class="t r" style="left:550px;width:83.5px;top:276.68px;color:#363636;font-size:7.8px;letter-spacing:-0.35px;transform:scaleY(1.1)">4129.478</div>
<div class="t r" style="left:635.5px;width:83.0px;top:276.68px;color:#363636;font-size:7.8px;letter-spacing:-0.35px;transform:scaleY(1.1)">0.000</div>
<div class="t r" style="left:720.5px;width:83.0px;top:276.68px;color:#143a14;font-size:7.8px;letter-spacing:-0.35px;transform:scaleY(1.1)">4130.078</div>
<div class="t r" style="left:805.5px;width:186.5px;top:276.68px;color:#363636;font-size:7.8px;letter-spacing:-0.35px;transform:scaleY(1.1)">2025.10.14 15:01:39</div>
<div class="t r" style="left:994px;width:83px;top:276.68px;color:#363636;font-size:7.8px;letter-spacing:-0.35px;transform:scaleY(1.1)">4130.078</div>
<div class="t r" style="left:1079px;width:83px;top:276.68px;color:#363636;font-size:7.8px;letter-spacing:-0.35px;transform:scaleY(1.1)">0.00</div>
<div class="t r" style="left:1164px;width:94px;top:276.68px;color:#363636;font-size:7.8px;letter-spacing:-0.35px;transform:scaleY(1.1)">6.00</div>
<div class="a" style="left:14px;top:287.67px;width:1246px;height:11.09px;background:#ebebeb"></div>
<div class="a" style="left:720.5px;top:287.67px;width:85px;height:11.09px;background:#9cf09c"></div>
<div class="a" style="left:720.5px;top:288.27px;width:85px;height:10.09px;background:#5ded5d"></div>
<svg class="a" style="left:15px;top:289.27px" width="9" height="9"><path d="M1 0.5 H5 L7 2.5 V7.8 H1 Z" fill="#ffffff" stroke="#8696a8" stroke-width="0.7"/><circle cx="5.2" cy="3.9" r="1.1" fill="#3a88a8" opacity="0.8"/><path d="M3 8.6 A2.3 2.3 0 0 1 7.6 8.6 Z" fill="#3a88a8"/><circle cx="5.3" cy="7.2" r="1.9" fill="#3a88a8"/></svg>
<div class="t" style="left:25.5px;top:287.77px;color:#363636;font-size:7.7px;letter-spacing:-0.25px;transform:scaleY(1.1)">1623051715</div>
<div class="t r" style="left:124px;width:186px;top:287.77px;color:#363636;font-size:7.8px;letter-spacing:-0.35px;transform:scaleY(1.1)">2025.10.14 15:05:00</div>
<div class="t r" style="left:312px;width:83px;top:287.77px;color:#363636;font-size:7.8px;letter-spacing:-0.35px;transform:scaleY(1.1)">buy</div>
<div class="t r" style="left:397px;width:66px;top:287.77px;color:#363636;font-size:7.8px;letter-spacing:-0.35px;transform:scaleY(1.1)">0.10</div>
<div class="t r" style="left:465px;width:83px;top:287.77px;color:#363636;font-size:7.8px;letter-spacing:-0.35px;transform:scaleY(1.1)">xauusdm</div>
<div class="t r" style="left:550px;width:83.5px;top:287.77px;color:#363636;font-size:7.8px;letter-spacing:-0.35px;transform:scaleY(1.1)">4132.420</div>
<div class="t r" style="left:635.5px;width:83.0px;top:287.77px;color:#363636;font-size:7.8px;letter-spacing:-0.35px;transform:scaleY(1.1)">0.000</div>
<div class="t r" style="left:720.5px;width:83.0px;top:287.77px;color:#143a14;font-size:7.8px;letter-spacing:-0.35px;transform:scaleY(1.1)">4133.020</div>
<div class="t r" style="left:805.5px;width:186.5px;top:287.77px;color:#363636;font-size:7.8px;letter-spacing:-0.35px;transform:scaleY(1.1)">2025.10.14 15:05:21</div>
<div class="t r" style="left:994px;width:83px;top:287.77px;color:#363636;font-size:7.8px;letter-spacing:-0.35px;transform:scaleY(1.1)">4133.020</div>
<div class="t r" style="left:1079px;width:83px;top:287.77px;color:#363636;font-size:7.8px;letter-spacing:-0.35px;transform:scaleY(1.1)">0.00</div>
<div class="t r" style="left:1164px;width:94px;top:287.77px;color:#363636;font-size:7.8px;letter-spacing:-0.35px;transform:scaleY(1.1)">6.00</div>
<div class="a" style="left:14px;top:298.76px;width:1246px;height:11.09px;background:#ffffff"></div>
<div class="a" style="left:720.5px;top:298.76px;width:85px;height:11.09px;background:#9cf09c"></div>
<div class="a" style="left:720.5px;top:299.36px;width:85px;height:10.09px;background:#5ded5d"></div>
<svg class="a" style="left:15px;top:300.36px" width="9" height="9"><path d="M1 0.5 H5 L7 2.5 V7.8 H1 Z" fill="#ffffff" stroke="#8696a8" stroke-width="0.7"/><circle cx="5.2" cy="3.9" r="1.1" fill="#3a88a8" opacity="0.8"/><path d="M3 8.6 A2.3 2.3 0 0 1 7.6 8.6 Z" fill="#3a88a8"/><circle cx="5.3" cy="7.2" r="1.9" fill="#3a88a8"/></svg>
<div class="t" style="left:25.5px;top:298.86px;color:#363636;font-size:7.7px;letter-spacing:-0.25px;transform:scaleY(1.1)">1623067984</div>
<div class="t r" style="left:124px;width:186px;top:298.86px;color:#363636;font-size:7.8px;letter-spacing:-0.35px;transform:scaleY(1.1)">2025.10.14 15:10:01</div>
<div class="t r" style="left:312px;width:83px;top:298.86px;color:#363636;font-size:7.8px;letter-spacing:-0.35px;transform:scaleY(1.1)">buy</div>
<div class="t r" style="left:397px;width:66px;top:298.86px;color:#363636;font-size:7.8px;letter-spacing:-0.35px;transform:scaleY(1.1)">0.10</div>
<div class="t r" style="left:465px;width:83px;top:298.86px;color:#363636;font-size:7.8px;letter-spacing:-0.35px;transform:scaleY(1.1)">xauusdm</div>
<div class="t r" style="left:550px;width:83.5px;top:298.86px;color:#363636;font-size:7.8px;letter-spacing:-0.35px;transform:scaleY(1.1)">4134.973</div>
<div class="t r" style="left:635.5px;width:83.0px;top:298.86px;color:#363636;font-size:7.8px;letter-spacing:-0.35px;transform:scaleY(1.1)">0.000</div>
<div class="t r" style="left:720.5px;width:83.0px;top:298.86px;color:#143a14;font-size:7.8px;letter-spacing:-0.35px;transform:scaleY(1.1)">4135.573</div>
<div class="t r" style="left:805.5px;width:186.5px;top:298.86px;color:#363636;font-size:7.8px;letter-spacing:-0.35px;transform:scaleY(1.1)">2025.10.14 15:10:20</div>
<div class="t r" style="left:994px;width:83px;top:298.86px;color:#363636;font-size:7.8px;letter-spacing:-0.35px;transform:scaleY(1.1)">4135.573</div>
<div class="t r" style="left:1079px;width:83px;top:298.86px;color:#363636;font-size:7.8px;letter-spacing:-0.35px;transform:scaleY(1.1)">0.00</div>
<div class="t r" style="left:1164px;width:94px;top:298.86px;color:#363636;font-size:7.8px;letter-spacing:-0.35px;transform:scaleY(1.1)">6.00</div>
<div class="a" style="left:14px;top:309.85px;width:1246px;height:11.09px;background:#ebebeb"></div>
<div class="a" style="left:720.5px;top:309.85px;width:85px;height:11.09px;background:#9cf09c"></div>
<div class="a" style="left:720.5px;top:310.45px;width:85px;height:10.09px;background:#5ded5d"></div>
<svg class="a" style="left:15px;top:311.45px" width="9" height="9"><path d="M1 0.5 H5 L7 2.5 V7.8 H1 Z" fill="#ffffff" stroke="#8696a8" stroke-width="0.7"/><circle cx="5.2" cy="3.9" r="1.1" fill="#3a88a8" opacity="0.8"/><path d="M3 8.6 A2.3 2.3 0 0 1 7.6 8.6 Z" fill="#3a88a8"/><circle cx="5.3" cy="7.2" r="1.9" fill="#3a88a8"/></svg>
<div class="t" style="left:25.5px;top:309.95px;color:#363636;font-size:7.7px;letter-spacing:-0.25px;transform:scaleY(1.1)">1623088008</div>
<div class="t r" style="left:124px;width:186px;top:309.95px;color:#363636;font-size:7.8px;letter-spacing:-0.35px;transform:scaleY(1.1)">2025.10.14 15:15:00</div>
<div class="t r" style="left:312px;width:83px;top:309.95px;color:#363636;font-size:7.8px;letter-spacing:-0.35px;transform:scaleY(1.1)">buy</div>
<div class="t r" style="left:397px;width:66px;top:309.95px;color:#363636;font-size:7.8px;letter-spacing:-0.35px;transform:scaleY(1.1)">0.10</div>
<div class="t r" style="left:465px;width:83px;top:309.95px;color:#363636;font-size:7.8px;letter-spacing:-0.35px;transform:scaleY(1.1)">xauusdm</div>
<div class="t r" style="left:550px;width:83.5px;top:309.95px;color:#363636;font-size:7.8px;letter-spacing:-0.35px;transform:scaleY(1.1)">4141.222</div>
<div class="t r" style="left:635.5px;width:83.0px;top:309.95px;color:#363636;font-size:7.8px;letter-spacing:-0.35px;transform:scaleY(1.1)">0.000</div>
<div class="t r" style="left:720.5px;width:83.0px;top:309.95px;color:#143a14;font-size:7.8px;letter-spacing:-0.35px;transform:scaleY(1.1)">4139.817</div>
<div class="t r" style="left:805.5px;width:186.5px;top:309.95px;color:#363636;font-size:7.8px;letter-spacing:-0.35px;transform:scaleY(1.1)">2025.10.14 15:24:19</div>
<div class="t r" style="left:994px;width:83px;top:309.95px;color:#363636;font-size:7.8px;letter-spacing:-0.35px;transform:scaleY(1.1)">4139.817</div>
<div class="t r" style="left:1079px;width:83px;top:309.95px;color:#363636;font-size:7.8px;letter-spacing:-0.35px;transform:scaleY(1.1)">0.00</div>
<div class="t r" style="left:1164px;width:94px;top:309.95px;color:#363636;font-size:7.8px;letter-spacing:-0.35px;transform:scaleY(1.1)">-14.05</div>
<div class="a" style="left:14px;top:320.94px;width:1246px;height:11.09px;background:#ffffff"></div>
<div class="a" style="left:720.5px;top:320.94px;width:85px;height:11.09px;background:#9cf09c"></div>
<div class="a" style="left:720.5px;top:321.54px;width:85px;height:10.09px;background:#5ded5d"></div>
<svg class="a" style="left:15px;top:322.54px" width="9" height="9"><path d="M1 0.5 H5 L7 2.5 V7.8 H1 Z" fill="#ffffff" stroke="#8696a8" stroke-width="0.7"/><circle cx="5.2" cy="3.9" r="1.1" fill="#3a88a8" opacity="0.8"/><path d="M3 8.6 A2.3 2.3 0 0 1 7.6 8.6 Z" fill="#3a88a8"/><circle cx="5.3" cy="7.2" r="1.9" fill="#3a88a8"/></svg>
<div class="t" style="left:25.5px;top:321.04px;color:#363636;font-size:7.7px;letter-spacing:-0.25px;transform:scaleY(1.1)">1623101648</div>
<div class="t r" style="left:124px;width:186px;top:321.04px;color:#363636;font-size:7.8px;letter-spacing:-0.35px;transform:scaleY(1.1)">2025.10.14 15:20:00</div>
<div class="t r" style="left:312px;width:83px;top:321.04px;color:#363636;font-size:7.8px;letter-spacing:-0.35px;transform:scaleY(1.1)">buy</div>
<div class="t r" style="left:397px;width:66px;top:321.04px;color:#363636;font-size:7.8px;letter-spacing:-0.35px;transform:scaleY(1.1)">0.30</div>
<div class="t r" style="left:465px;width:83px;top:321.04px;color:#363636;font-size:7.8px;letter-spacing:-0.35px;transform:scaleY(1.1)">xauusdm</div>
<div class="t r" style="left:550px;width:83.5px;top:321.04px;color:#363636;font-size:7.8px;letter-spacing:-0.35px;transform:scaleY(1.1)">4138.548</div>
<div class="t r" style="left:635.5px;width:83.0px;top:321.04px;color:#363636;font-size:7.8px;letter-spacing:-0.35px;transform:scaleY(1.1)">0.000</div>
<div class="t r" style="left:720.5px;width:83.0px;top:321.04px;color:#143a14;font-size:7.8px;letter-spacing:-0.35px;transform:scaleY(1.1)">4139.817</div>
<div class="t r" style="left:805.5px;width:186.5px;top:321.04px;color:#363636;font-size:7.8px;letter-spacing:-0.35px;transform:scaleY(1.1)">2025.10.14 15:24:19</div>
<div class="t r" style="left:994px;width:83px;top:321.04px;color:#363636;font-size:7.8px;letter-spacing:-0.35px;transform:scaleY(1.1)">4139.817</div>
<div class="t r" style="left:1079px;width:83px;top:321.04px;color:#363636;font-size:7.8px;letter-spacing:-0.35px;transform:scaleY(1.1)">0.00</div>
<div class="t r" style="left:1164px;width:94px;top:321.04px;color:#363636;font-size:7.8px;letter-spacing:-0.35px;transform:scaleY(1.1)">38.07</div>
<div class="a" style="left:14px;top:332.03px;width:1246px;height:11.09px;background:#ebebeb"></div>
<div class="a" style="left:720.5px;top:332.03px;width:85px;height:11.09px;background:#9cf09c"></div>
<div class="a" style="left:720.5px;top:332.63px;width:85px;height:10.09px;background:#5ded5d"></div>
<svg class="a" style="left:15px;top:333.63px" width="9" height="9"><path d="M1 0.5 H5 L7 2.5 V7.8 H1 Z" fill="#ffffff" stroke="#8696a8" stroke-width="0.7"/><circle cx="5.2" cy="3.9" r="1.1" fill="#b04a3a" opacity="0.8"/><path d="M3 8.6 A2.3 2.3 0 0 1 7.6 8.6 Z" fill="#b04a3a"/><circle cx="5.3" cy="7.2" r="1.9" fill="#b04a3a"/></svg>
<div class="t" style="left:25.5px;top:332.13px;color:#363636;font-size:7.7px;letter-spacing:-0.25px;transform:scaleY(1.1)">1623115339</div>
<div class="t r" style="left:124px;width:186px;top:332.13px;color:#363636;font-size:7.8px;letter-spacing:-0.35px;transform:scaleY(1.1)">2025.10.14 15:25:00</div>
<div class="t r" style="left:312px;width:83px;top:332.13px;color:#363636;font-size:7.8px;letter-spacing:-0.35px;transform:scaleY(1.1)">sell</div>
<div class="t r" style="left:397px;width:66px;top:332.13px;color:#363636;font-size:7.8px;letter-spacing:-0.35px;transform:scaleY(1.1)">0.10</div>
<div class="t r" style="left:465px;width:83px;top:332.13px;color:#363636;font-size:7.8px;letter-spacing:-0.35px;transform:scaleY(1.1)">xauusdm</div>
<div class="t r" style="left:550px;width:83.5px;top:332.13px;color:#363636;font-size:7.8px;letter-spacing:-0.35px;transform:scaleY(1.1)">4137.996</div>
<div class="t r" style="left:635.5px;width:83.0px;top:332.13px;color:#363636;font-size:7.8px;letter-spacing:-0.35px;transform:scaleY(1.1)">0.000</div>
<div class="t r" style="left:720.5px;width:83.0px;top:332.13px;color:#143a14;font-size:7.8px;letter-spacing:-0.35px;transform:scaleY(1.1)">4137.396</div>
<div class="t r" style="left:805.5px;width:186.5px;top:332.13px;color:#363636;font-size:7.8px;letter-spacing:-0.35px;transform:scaleY(1.1)">2025.10.14 15:25:07</div>
<div class="t r" style="left:994px;width:83px;top:332.13px;color:#363636;font-size:7.8px;letter-spacing:-0.35px;transform:scaleY(1.1)">4137.396</div>
<div class="t r" style="left:1079px;width:83px;top:332.13px;color:#363636;font-size:7.8px;letter-spacing:-0.35px;transform:scaleY(1.1)">0.00</div>
<div class="t r" style="left:1164px;width:94px;top:332.13px;color:#363636;font-size:7.8px;letter-spacing:-0.35px;transform:scaleY(1.1)">6.00</div>
<div class="a" style="left:14px;top:343.12px;width:1246px;height:11.09px;background:#ffffff"></div>
<div class="a" style="left:720.5px;top:343.12px;width:85px;height:11.09px;background:#9cf09c"></div>
<div class="a" style="left:720.5px;top:343.72px;width:85px;height:10.09px;background:#5ded5d"></div>
<svg class="a" style="left:15px;top:344.72px" width="9" height="9"><path d="M1 0.5 H5 L7 2.5 V7.8 H1 Z" fill="#ffffff" stroke="#8696a8" stroke-width="0.7"/><circle cx="5.2" cy="3.9" r="1.1" fill="#b04a3a" opacity="0.8"/><path d="M3 8.6 A2.3 2.3 0 0 1 7.6 8.6 Z" fill="#b04a3a"/><circle cx="5.3" cy="7.2" r="1.9" fill="#b04a3a"/></svg>
<div class="t" style="left:25.5px;top:343.22px;color:#363636;font-size:7.7px;letter-spacing:-0.25px;transform:scaleY(1.1)">1623125442</div>
<div class="t r" style="left:124px;width:186px;top:343.22px;color:#363636;font-size:7.8px;letter-spacing:-0.35px;transform:scaleY(1.1)">2025.10.14 15:30:00</div>
<div class="t r" style="left:312px;width:83px;top:343.22px;color:#363636;font-size:7.8px;letter-spacing:-0.35px;transform:scaleY(1.1)">sell</div>
<div class="t r" style="left:397px;width:66px;top:343.22px;color:#363636;font-size:7.8px;letter-spacing:-0.35px;transform:scaleY(1.1)">0.10</div>
<div class="t r" style="left:465px;width:83px;top:343.22px;color:#363636;font-size:7.8px;letter-spacing:-0.35px;transform:scaleY(1.1)">xauusdm</div>
<div class="t r" style="left:550px;width:83.5px;top:343.22px;color:#363636;font-size:7.8px;letter-spacing:-0.35px;transform:scaleY(1.1)">4138.433</div>
<div class="t r" style="left:635.5px;width:83.0px;top:343.22px;color:#363636;font-size:7.8px;letter-spacing:-0.35px;transform:scaleY(1.1)">0.000</div>
<div class="t r" style="left:720.5px;width:83.0px;top:343.22px;color:#143a14;font-size:7.8px;letter-spacing:-0.35px;transform:scaleY(1.1)">4137.833</div>
<div class="t r" style="left:805.5px;width:186.5px;top:343.22px;color:#363636;font-size:7.8px;letter-spacing:-0.35px;transform:scaleY(1.1)">2025.10.14 15:30:08</div>
<div class="t r" style="left:994px;width:83px;top:343.22px;color:#363636;font-size:7.8px;letter-spacing:-0.35px;transform:scaleY(1.1)">4137.833</div>
<div class="t r" style="left:1079px;width:83px;top:343.22px;color:#363636;font-size:7.8px;letter-spacing:-0.35px;transform:scaleY(1.1)">0.00</div>
<div class="t r" style="left:1164px;width:94px;top:343.22px;color:#363636;font-size:7.8px;letter-spacing:-0.35px;transform:scaleY(1.1)">6.00</div>
<div class="a" style="left:14px;top:354.21px;width:1246px;height:11.09px;background:#ebebeb"></div>
<div class="a" style="left:720.5px;top:354.21px;width:85px;height:11.09px;background:#9cf09c"></div>
<div class="a" style="left:720.5px;top:354.81px;width:85px;height:10.09px;background:#5ded5d"></div>
<svg class="a" style="left:15px;top:355.81px" width="9" height="9"><path d="M1 0.5 H5 L7 2.5 V7.8 H1 Z" fill="#ffffff" stroke="#8696a8" stroke-width="0.7"/><circle cx="5.2" cy="3.9" r="1.1" fill="#3a88a8" opacity="0.8"/><path d="M3 8.6 A2.3 2.3 0 0 1 7.6 8.6 Z" fill="#3a88a8"/><circle cx="5.3" cy="7.2" r="1.9" fill="#3a88a8"/></svg>
<div class="t" style="left:25.5px;top:354.31px;color:#363636;font-size:7.7px;letter-spacing:-0.25px;transform:scaleY(1.1)">1623143258</div>
<div class="t r" style="left:124px;width:186px;top:354.31px;color:#363636;font-size:7.8px;letter-spacing:-0.35px;transform:scaleY(1.1)">2025.10.14 15:35:00</div>
<div class="t r" style="left:312px;width:83px;top:354.31px;color:#363636;font-size:7.8px;letter-spacing:-0.35px;transform:scaleY(1.1)">buy</div>
<div class="t r" style="left:397px;width:66px;top:354.31px;color:#363636;font-size:7.8px;letter-spacing:-0.35px;transform:scaleY(1.1)">0.10</div>
<div class="t r" style="left:465px;width:83px;top:354.31px;color:#363636;font-size:7.8px;letter-spacing:-0.35px;transform:scaleY(1.1)">xauusdm</div>
<div class="t r" style="left:550px;width:83.5px;top:354.31px;color:#363636;font-size:7.8px;letter-spacing:-0.35px;transform:scaleY(1.1)">4140.990</div>
<div class="t r" style="left:635.5px;width:83.0px;top:354.31px;color:#363636;font-size:7.8px;letter-spacing:-0.35px;transform:scaleY(1.1)">0.000</div>
<div class="t r" style="left:720.5px;width:83.0px;top:354.31px;color:#143a14;font-size:7.8px;letter-spacing:-0.35px;transform:scaleY(1.1)">4141.590</div>
<div class="t r" style="left:805.5px;width:186.5px;top:354.31px;color:#363636;font-size:7.8px;letter-spacing:-0.35px;transform:scaleY(1.1)">2025.10.14 15:36:05</div>
<div class="t r" style="left:994px;width:83px;top:354.31px;color:#363636;font-size:7.8px;letter-spacing:-0.35px;transform:scaleY(1.1)">4141.590</div>
<div class="t r" style="left:1079px;width:83px;top:354.31px;color:#363636;font-size:7.8px;letter-spacing:-0.35px;transform:scaleY(1.1)">0.00</div>
<div class="t r" style="left:1164px;width:94px;top:354.31px;color:#363636;font-size:7.8px;letter-spacing:-0.35px;transform:scaleY(1.1)">6.00</div>
<div class="a" style="left:14px;top:365.30px;width:1246px;height:11.09px;background:#ffffff"></div>
<div class="a" style="left:720.5px;top:365.30px;width:85px;height:11.09px;background:#9cf09c"></div>
<div class="a" style="left:720.5px;top:365.90px;width:85px;height:10.09px;background:#5ded5d"></div>
<svg class="a" style="left:15px;top:366.90px" width="9" height="9"><path d="M1 0.5 H5 L7 2.5 V7.8 H1 Z" fill="#ffffff" stroke="#8696a8" stroke-width="0.7"/><circle cx="5.2" cy="3.9" r="1.1" fill="#3a88a8" opacity="0.8"/><path d="M3 8.6 A2.3 2.3 0 0 1 7.6 8.6 Z" fill="#3a88a8"/><circle cx="5.3" cy="7.2" r="1.9" fill="#3a88a8"/></svg>
<div class="t" style="left:25.5px;top:365.40px;color:#363636;font-size:7.7px;letter-spacing:-0.25px;transform:scaleY(1.1)">1623157827</div>
<div class="t r" style="left:124px;width:186px;top:365.40px;color:#363636;font-size:7.8px;letter-spacing:-0.35px;transform:scaleY(1.1)">2025.10.14 15:40:00</div>
<div class="t r" style="left:312px;width:83px;top:365.40px;color:#363636;font-size:7.8px;letter-spacing:-0.35px;transform:scaleY(1.1)">buy</div>
<div class="t r" style="left:397px;width:66px;top:365.40px;color:#363636;font-size:7.8px;letter-spacing:-0.35px;transform:scaleY(1.1)">0.10</div>
<div class="t r" style="left:465px;width:83px;top:365.40px;color:#363636;font-size:7.8px;letter-spacing:-0.35px;transform:scaleY(1.1)">xauusdm</div>
<div class="t r" style="left:550px;width:83.5px;top:365.40px;color:#363636;font-size:7.8px;letter-spacing:-0.35px;transform:scaleY(1.1)">4141.006</div>
<div class="t r" style="left:635.5px;width:83.0px;top:365.40px;color:#363636;font-size:7.8px;letter-spacing:-0.35px;transform:scaleY(1.1)">0.000</div>
<div class="t r" style="left:720.5px;width:83.0px;top:365.40px;color:#143a14;font-size:7.8px;letter-spacing:-0.35px;transform:scaleY(1.1)">4141.606</div>
<div class="t r" style="left:805.5px;width:186.5px;top:365.40px;color:#363636;font-size:7.8px;letter-spacing:-0.35px;transform:scaleY(1.1)">2025.10.14 15:40:34</div>
<div class="t r" style="left:994px;width:83px;top:365.40px;color:#363636;font-size:7.8px;letter-spacing:-0.35px;transform:scaleY(1.1)">4141.606</div>
<div class="t r" style="left:1079px;width:83px;top:365.40px;color:#363636;font-size:7.8px;letter-spacing:-0.35px;transform:scaleY(1.1)">0.00</div>
<div class="t r" style="left:1164px;width:94px;top:365.40px;color:#363636;font-size:7.8px;letter-spacing:-0.35px;transform:scaleY(1.1)">6.00</div>
<div class="a" style="left:14px;top:376.39px;width:1246px;height:11.09px;background:#ebebeb"></div>
<div class="a" style="left:720.5px;top:376.39px;width:85px;height:11.09px;background:#9cf09c"></div>
<div class="a" style="left:720.5px;top:376.99px;width:85px;height:10.09px;background:#5ded5d"></div>
<svg class="a" style="left:15px;top:377.99px" width="9" height="9"><path d="M1 0.5 H5 L7 2.5 V7.8 H1 Z" fill="#ffffff" stroke="#8696a8" stroke-width="0.7"/><circle cx="5.2" cy="3.9" r="1.1" fill="#b04a3a" opacity="0.8"/><path d="M3 8.6 A2.3 2.3 0 0 1 7.6 8.6 Z" fill="#b04a3a"/><circle cx="5.3" cy="7.2" r="1.9" fill="#b04a3a"/></svg>
<div class="t" style="left:25.5px;top:376.49px;color:#363636;font-size:7.7px;letter-spacing:-0.25px;transform:scaleY(1.1)">1623173974</div>
<div class="t r" style="left:124px;width:186px;top:376.49px;color:#363636;font-size:7.8px;letter-spacing:-0.35px;transform:scaleY(1.1)">2025.10.14 15:45:00</div>
<div class="t r" style="left:312px;width:83px;top:376.49px;color:#363636;font-size:7.8px;letter-spacing:-0.35px;transform:scaleY(1.1)">sell</div>
<div class="t r" style="left:397px;width:66px;top:376.49px;color:#363636;font-size:7.8px;letter-spacing:-0.35px;transform:scaleY(1.1)">0.10</div>
<div class="t r" style="left:465px;width:83px;top:376.49px;color:#363636;font-size:7.8px;letter-spacing:-0.35px;transform:scaleY(1.1)">xauusdm</div>
<div class="t r" style="left:550px;width:83.5px;top:376.49px;color:#363636;font-size:7.8px;letter-spacing:-0.35px;transform:scaleY(1.1)">4138.898</div>
<div class="t r" style="left:635.5px;width:83.0px;top:376.49px;color:#363636;font-size:7.8px;letter-spacing:-0.35px;transform:scaleY(1.1)">0.000</div>
<div class="t r" style="left:720.5px;width:83.0px;top:376.49px;color:#143a14;font-size:7.8px;letter-spacing:-0.35px;transform:scaleY(1.1)">4138.298</div>
<div class="t r" style="left:805.5px;width:186.5px;top:376.49px;color:#363636;font-size:7.8px;letter-spacing:-0.35px;transform:scaleY(1.1)">2025.10.14 15:47:40</div>
<div class="t r" style="left:994px;width:83px;top:376.49px;color:#363636;font-size:7.8px;letter-spacing:-0.35px;transform:scaleY(1.1)">4138.298</div>
<div class="t r" style="left:1079px;width:83px;top:376.49px;color:#363636;font-size:7.8px;letter-spacing:-0.35px;transform:scaleY(1.1)">0.00</div>
<div class="t r" style="left:1164px;width:94px;top:376.49px;color:#363636;font-size:7.8px;letter-spacing:-0.35px;transform:scaleY(1.1)">6.00</div>
<div class="a" style="left:14px;top:387.48px;width:1246px;height:11.09px;background:#ffffff"></div>
<div class="a" style="left:720.5px;top:387.48px;width:85px;height:11.09px;background:#9cf09c"></div>
<div class="a" style="left:720.5px;top:388.08px;width:85px;height:10.09px;background:#5ded5d"></div>
<svg class="a" style="left:15px;top:389.08px" width="9" height="9"><path d="M1 0.5 H5 L7 2.5 V7.8 H1 Z" fill="#ffffff" stroke="#8696a8" stroke-width="0.7"/><circle cx="5.2" cy="3.9" r="1.1" fill="#b04a3a" opacity="0.8"/><path d="M3 8.6 A2.3 2.3 0 0 1 7.6 8.6 Z" fill="#b04a3a"/><circle cx="5.3" cy="7.2" r="1.9" fill="#b04a3a"/></svg>
<div class="t" style="left:25.5px;top:387.58px;color:#363636;font-size:7.7px;letter-spacing:-0.25px;transform:scaleY(1.1)">1623187510</div>
<div class="t r" style="left:124px;width:186px;top:387.58px;color:#363636;font-size:7.8px;letter-spacing:-0.35px;transform:scaleY(1.1)">2025.10.14 15:50:00</div>
<div class="t r" style="left:312px;width:83px;top:387.58px;color:#363636;font-size:7.8px;letter-spacing:-0.35px;transform:scaleY(1.1)">sell</div>
<div class="t r" style="left:397px;width:66px;top:387.58px;color:#363636;font-size:7.8px;letter-spacing:-0.35px;transform:scaleY(1.1)">0.10</div>
<div class="t r" style="left:465px;width:83px;top:387.58px;color:#363636;font-size:7.8px;letter-spacing:-0.35px;transform:scaleY(1.1)">xauusdm</div>
<div class="t r" style="left:550px;width:83.5px;top:387.58px;color:#363636;font-size:7.8px;letter-spacing:-0.35px;transform:scaleY(1.1)">4136.959</div>
<div class="t r" style="left:635.5px;width:83.0px;top:387.58px;color:#363636;font-size:7.8px;letter-spacing:-0.35px;transform:scaleY(1.1)">0.000</div>
<div class="t r" style="left:720.5px;width:83.0px;top:387.58px;color:#143a14;font-size:7.8px;letter-spacing:-0.35px;transform:scaleY(1.1)">4136.359</div>
<div class="t r" style="left:805.5px;width:186.5px;top:387.58px;color:#363636;font-size:7.8px;letter-spacing:-0.35px;transform:scaleY(1.1)">2025.10.14 15:50:17</div>
<div class="t r" style="left:994px;width:83px;top:387.58px;color:#363636;font-size:7.8px;letter-spacing:-0.35px;transform:scaleY(1.1)">4136.359</div>
<div class="t r" style="left:1079px;width:83px;top:387.58px;color:#363636;font-size:7.8px;letter-spacing:-0.35px;transform:scaleY(1.1)">0.00</div>
<div class="t r" style="left:1164px;width:94px;top:387.58px;color:#363636;font-size:7.8px;letter-spacing:-0.35px;transform:scaleY(1.1)">6.00</div>
<div class="a" style="left:14px;top:398.57px;width:1246px;height:11.09px;background:#ebebeb"></div>
<div class="a" style="left:720.5px;top:398.57px;width:85px;height:11.09px;background:#9cf09c"></div>
<div class="a" style="left:720.5px;top:399.17px;width:85px;height:10.09px;background:#5ded5d"></div>
<svg class="a" style="left:15px;top:400.17px" width="9" height="9"><path d="M1 0.5 H5 L7 2.5 V7.8 H1 Z" fill="#ffffff" stroke="#8696a8" stroke-width="0.7"/><circle cx="5.2" cy="3.9" r="1.1" fill="#b04a3a" opacity="0.8"/><path d="M3 8.6 A2.3 2.3 0 0 1 7.6 8.6 Z" fill="#b04a3a"/><circle cx="5.3" cy="7.2" r="1.9" fill="#b04a3a"/></svg>
<div class="t" style="left:25.5px;top:398.67px;color:#363636;font-size:7.7px;letter-spacing:-0.25px;transform:scaleY(1.1)">1623207086</div>
<div class="t r" style="left:124px;width:186px;top:398.67px;color:#363636;font-size:7.8px;letter-spacing:-0.35px;transform:scaleY(1.1)">2025.10.14 15:55:00</div>
<div class="t r" style="left:312px;width:83px;top:398.67px;color:#363636;font-size:7.8px;letter-spacing:-0.35px;transform:scaleY(1.1)">sell</div>
<div class="t r" style="left:397px;width:66px;top:398.67px;color:#363636;font-size:7.8px;letter-spacing:-0.35px;transform:scaleY(1.1)">0.10</div>
<div class="t r" style="left:465px;width:83px;top:398.67px;color:#363636;font-size:7.8px;letter-spacing:-0.35px;transform:scaleY(1.1)">xauusdm</div>
<div class="t r" style="left:550px;width:83.5px;top:398.67px;color:#363636;font-size:7.8px;letter-spacing:-0.35px;transform:scaleY(1.1)">4132.627</div>
<div class="t r" style="left:635.5px;width:83.0px;top:398.67px;color:#363636;font-size:7.8px;letter-spacing:-0.35px;transform:scaleY(1.1)">0.000</div>
<div class="t r" style="left:720.5px;width:83.0px;top:398.67px;color:#143a14;font-size:7.8px;letter-spacing:-0.35px;transform:scaleY(1.1)">4136.325</div>
<div class="t r" style="left:805.5px;width:186.5px;top:398.67px;color:#363636;font-size:7.8px;letter-spacing:-0.35px;transform:scaleY(1.1)">2025.10.14 16:06:39</div>
<div class="t r" style="left:994px;width:83px;top:398.67px;color:#363636;font-size:7.8px;letter-spacing:-0.35px;transform:scaleY(1.1)">4136.325</div>
<div class="t r" style="left:1079px;width:83px;top:398.67px;color:#363636;font-size:7.8px;letter-spacing:-0.35px;transform:scaleY(1.1)">0.00</div>
<div class="t r" style="left:1164px;width:94px;top:398.67px;color:#363636;font-size:7.8px;letter-spacing:-0.35px;transform:scaleY(1.1)">-36.98</div>
<div class="a" style="left:14px;top:409.66px;width:1246px;height:11.09px;background:#ffffff"></div>
<div class="a" style="left:720.5px;top:409.66px;width:85px;height:11.09px;background:#9cf09c"></div>
<div class="a" style="left:720.5px;top:410.26px;width:85px;height:10.09px;background:#5ded5d"></div>
<svg class="a" style="left:15px;top:411.26px" width="9" height="9"><path d="M1 0.5 H5 L7 2.5 V7.8 H1 Z" fill="#ffffff" stroke="#8696a8" stroke-width="0.7"/><circle cx="5.2" cy="3.9" r="1.1" fill="#b04a3a" opacity="0.8"/><path d="M3 8.6 A2.3 2.3 0 0 1 7.6 8.6 Z" fill="#b04a3a"/><circle cx="5.3" cy="7.2" r="1.9" fill="#b04a3a"/></svg>
<div class="t" style="left:25.5px;top:409.76px;color:#363636;font-size:7.7px;letter-spacing:-0.25px;transform:scaleY(1.1)">1623222265</div>
<div class="t r" style="left:124px;width:186px;top:409.76px;color:#363636;font-size:7.8px;letter-spacing:-0.35px;transform:scaleY(1.1)">2025.10.14 16:00:00</div>
<div class="t r" style="left:312px;width:83px;top:409.76px;color:#363636;font-size:7.8px;letter-spacing:-0.35px;transform:scaleY(1.1)">sell</div>
<div class="t r" style="left:397px;width:66px;top:409.76px;color:#363636;font-size:7.8px;letter-spacing:-0.35px;transform:scaleY(1.1)">0.30</div>
<div class="t r" style="left:465px;width:83px;top:409.76px;color:#363636;font-size:7.8px;letter-spacing:-0.35px;transform:scaleY(1.1)">xauusdm</div>
<div class="t r" style="left:550px;width:83.5px;top:409.76px;color:#363636;font-size:7.8px;letter-spacing:-0.35px;transform:scaleY(1.1)">4138.357</div>
<div class="t r" style="left:635.5px;width:83.0px;top:409.76px;color:#363636;font-size:7.8px;letter-spacing:-0.35px;transform:scaleY(1.1)">0.000</div>
<div class="t r" style="left:720.5px;width:83.0px;top:409.76px;color:#143a14;font-size:7.8px;letter-spacing:-0.35px;transform:scaleY(1.1)">4136.325</div>
<div class="t r" style="left:805.5px;width:186.5px;top:409.76px;color:#363636;font-size:7.8px;letter-spacing:-0.35px;transform:scaleY(1.1)">2025.10.14 16:06:39</div>
<div class="t r" style="left:994px;width:83px;top:409.76px;color:#363636;font-size:7.8px;letter-spacing:-0.35px;transform:scaleY(1.1)">4136.325</div>
<div class="t r" style="left:1079px;width:83px;top:409.76px;color:#363636;font-size:7.8px;letter-spacing:-0.35px;transform:scaleY(1.1)">0.00</div>
<div class="t r" style="left:1164px;width:94px;top:409.76px;color:#363636;font-size:7.8px;letter-spacing:-0.35px;transform:scaleY(1.1)">60.96</div>
<div class="a" style="left:14px;top:420.75px;width:1246px;height:11.09px;background:#ebebeb"></div>
<div class="a" style="left:720.5px;top:420.75px;width:85px;height:11.09px;background:#9cf09c"></div>
<div class="a" style="left:720.5px;top:421.35px;width:85px;height:10.09px;background:#5ded5d"></div>
<svg class="a" style="left:15px;top:422.35px" width="9" height="9"><path d="M1 0.5 H5 L7 2.5 V7.8 H1 Z" fill="#ffffff" stroke="#8696a8" stroke-width="0.7"/><circle cx="5.2" cy="3.9" r="1.1" fill="#b04a3a" opacity="0.8"/><path d="M3 8.6 A2.3 2.3 0 0 1 7.6 8.6 Z" fill="#b04a3a"/><circle cx="5.3" cy="7.2" r="1.9" fill="#b04a3a"/></svg>
<div class="t" style="left:25.5px;top:420.85px;color:#363636;font-size:7.7px;letter-spacing:-0.25px;transform:scaleY(1.1)">1623258869</div>
<div class="t r" style="left:124px;width:186px;top:420.85px;color:#363636;font-size:7.8px;letter-spacing:-0.35px;transform:scaleY(1.1)">2025.10.14 16:10:00</div>
<div class="t r" style="left:312px;width:83px;top:420.85px;color:#363636;font-size:7.8px;letter-spacing:-0.35px;transform:scaleY(1.1)">sell</div>
<div class="t r" style="left:397px;width:66px;top:420.85px;color:#363636;font-size:7.8px;letter-spacing:-0.35px;transform:scaleY(1.1)">0.10</div>
<div class="t r" style="left:465px;width:83px;top:420.85px;color:#363636;font-size:7.8px;letter-spacing:-0.35px;transform:scaleY(1.1)">xauusdm</div>
<div class="t r" style="left:550px;width:83.5px;top:420.85px;color:#363636;font-size:7.8px;letter-spacing:-0.35px;transform:scaleY(1.1)">4129.440</div>
<div class="t r" style="left:635.5px;width:83.0px;top:420.85px;color:#363636;font-size:7.8px;letter-spacing:-0.35px;transform:scaleY(1.1)">0.000</div>
<div class="t r" style="left:720.5px;width:83.0px;top:420.85px;color:#143a14;font-size:7.8px;letter-spacing:-0.35px;transform:scaleY(1.1)">4129.994</div>
<div class="t r" style="left:805.5px;width:186.5px;top:420.85px;color:#363636;font-size:7.8px;letter-spacing:-0.35px;transform:scaleY(1.1)">2025.10.14 16:15:49</div>
<div class="t r" style="left:994px;width:83px;top:420.85px;color:#363636;font-size:7.8px;letter-spacing:-0.35px;transform:scaleY(1.1)">4129.994</div>
<div class="t r" style="left:1079px;width:83px;top:420.85px;color:#363636;font-size:7.8px;letter-spacing:-0.35px;transform:scaleY(1.1)">0.00</div>
<div class="t r" style="left:1164px;width:94px;top:420.85px;color:#363636;font-size:7.8px;letter-spacing:-0.35px;transform:scaleY(1.1)">-5.54</div>
<div class="a" style="left:14px;top:431.84px;width:1246px;height:11.09px;background:#0078d7"></div>
<div class="a" style="left:720.5px;top:431.84px;width:85px;height:11.09px;background:#9cf09c"></div>
<div class="a" style="left:720.5px;top:432.44px;width:85px;height:10.09px;background:#5ded5d"></div>
<svg class="a" style="left:15px;top:433.44px" width="9" height="9"><path d="M1 0.5 H5 L7 2.5 V7.8 H1 Z" fill="#ffffff" stroke="#8696a8" stroke-width="0.7"/><circle cx="5.2" cy="3.9" r="1.1" fill="#b04a3a" opacity="0.8"/><path d="M3 8.6 A2.3 2.3 0 0 1 7.6 8.6 Z" fill="#b04a3a"/><circle cx="5.3" cy="7.2" r="1.9" fill="#b04a3a"/></svg>
<div class="t" style="left:25.5px;top:431.94px;color:#ffffff;font-size:7.7px;letter-spacing:-0.25px;transform:scaleY(1.1)">1623272600</div>
<div class="t r" style="left:124px;width:186px;top:431.94px;color:#ffffff;font-size:7.8px;letter-spacing:-0.35px;transform:scaleY(1.1)">2025.10.14 16:15:00</div>
<div class="t r" style="left:312px;width:83px;top:431.94px;color:#ffffff;font-size:7.8px;letter-spacing:-0.35px;transform:scaleY(1.1)">sell</div>
<div class="t r" style="left:397px;width:66px;top:431.94px;color:#ffffff;font-size:7.8px;letter-spacing:-0.35px;transform:scaleY(1.1)">0.30</div>
<div class="t r" style="left:465px;width:83px;top:431.94px;color:#ffffff;font-size:7.8px;letter-spacing:-0.35px;transform:scaleY(1.1)">xauusdm</div>
<div class="t r" style="left:550px;width:83.5px;top:431.94px;color:#ffffff;font-size:7.8px;letter-spacing:-0.35px;transform:scaleY(1.1)">4130.978</div>
<div class="t r" style="left:635.5px;width:83.0px;top:431.94px;color:#ffffff;font-size:7.8px;letter-spacing:-0.35px;transform:scaleY(1.1)">0.000</div>
<div class="t r" style="left:720.5px;width:83.0px;top:431.94px;color:#143a14;font-size:7.8px;letter-spacing:-0.35px;transform:scaleY(1.1)">4129.994</div>
<div class="t r" style="left:805.5px;width:186.5px;top:431.94px;color:#ffffff;font-size:7.8px;letter-spacing:-0.35px;transform:scaleY(1.1)">2025.10.14 16:15:49</div>
<div class="t r" style="left:994px;width:83px;top:431.94px;color:#ffffff;font-size:7.8px;letter-spacing:-0.35px;transform:scaleY(1.1)">4129.994</div>
<div class="t r" style="left:1079px;width:83px;top:431.94px;color:#ffffff;font-size:7.8px;letter-spacing:-0.35px;transform:scaleY(1.1)">0.00</div>
<div class="t r" style="left:1164px;width:94px;top:431.94px;color:#ffffff;font-size:7.8px;letter-spacing:-0.35px;transform:scaleY(1.1)">29.52</div>
<div class="a" style="left:124px;top:143.5px;width:1px;height:289px;background:#f6f6f6"></div>
<div class="a" style="left:312px;top:143.5px;width:1px;height:289px;background:#f6f6f6"></div>
<div class="a" style="left:397px;top:143.5px;width:1px;height:289px;background:#f6f6f6"></div>
<div class="a" style="left:465px;top:143.5px;width:1px;height:289px;background:#f6f6f6"></div>
<div class="a" style="left:550px;top:143.5px;width:1px;height:289px;background:#f6f6f6"></div>
<div class="a" style="left:635.5px;top:143.5px;width:1px;height:289px;background:#f6f6f6"></div>
<div class="a" style="left:994px;top:143.5px;width:1px;height:289px;background:#f6f6f6"></div>
<div class="a" style="left:1079px;top:143.5px;width:1px;height:289px;background:#f6f6f6"></div>
<div class="a" style="left:1164px;top:143.5px;width:1px;height:289px;background:#f6f6f6"></div>
<div class="a" style="left:812px;top:207px;width:106px;height:28px;background:#8c8c8c;border-radius:14px 0 0 14px"></div>
<svg class="a" style="left:819px;top:213px" width="16" height="16"><circle cx="8" cy="8" r="6.5" fill="#3a6ad0"/><circle cx="8" cy="8" r="5" fill="#d8ecfa"/><path d="M4.5 9 Q8 12 11.5 7" fill="none" stroke="#2a5ac0" stroke-width="1.6"/></svg>
<div class="t" style="left:839.5px;top:211.5px;font-size:5px;line-height:8px;color:#d8d8d8;transform:scaleX(0.74);transform-origin:left center">当前在线人数</div>
<div class="t" style="left:879.5px;top:211.5px;font-size:5px;line-height:8px;color:#d8d8d8;transform:scaleX(0.88);transform-origin:left center">交易群人数</div>
<div class="t" style="left:839.5px;top:220px;font-size:7.6px;line-height:10px;color:#f4f4f4;letter-spacing:-0.1px">380591</div>
<div class="t" style="left:879.5px;top:220px;font-size:7.6px;line-height:10px;color:#f4f4f4;letter-spacing:-0.1px">990060</div>
<div class="a" style="left:14px;top:443.2px;width:1246px;height:11px;background:#c9c9c9"></div>
<svg class="a" style="left:15.5px;top:445.5px" width="8" height="8"><path d="M1 1 H5 L7 3 V7 H1 Z" fill="#e8e8e8" stroke="#a8a8a8" stroke-width="0.7"/></svg>
<div class="t" style="left:25.3px;top:444.2px;font-weight:bold;color:#1a1a1a;font-size:7.4px;letter-spacing:-0.15px">盈/亏: 10 984.11 &nbsp;信用额: 0.00 &nbsp;存款: 0.00 &nbsp;取款: 0.00</div>
<div class="t r" style="left:1164px;width:94px;top:444.2px;font-weight:bold;color:#1a1a1a">10 984.11</div>
<div class="a" style="left:1268px;top:0;width:10px;height:469px;background:linear-gradient(90deg,#ececec,#d2d2d2)"></div>
<div class="a" style="left:1275px;top:200px;width:5px;height:269px;background:linear-gradient(180deg,#6a7888 0px,#5a6878 140px,#1e2226 148px,#1e2226 269px)"></div>
<div class="a" style="left:1278px;top:0;width:2px;height:200px;background:#9ab0c6"></div>
<div class="a" style="left:1260px;top:143px;width:8.5px;height:315px;background:#f8f8f8"></div>
<div class="a" style="left:14px;top:143px;width:1255px;height:0.6px;background:#e4e4e4"></div>
<div class="a" style="left:1261px;top:389px;width:7px;height:54px;background:#cdcdcd"></div>
<svg class="a" style="left:1260px;top:447px" width="9" height="8"><path d="M2 3 L4.5 5.5 L7 3" fill="none" stroke="#444" stroke-width="0.9"/></svg>
<div class="a" style="left:5px;top:32px;width:145px;height:98px;background:#f0f0f0"></div>
<div class="a" style="left:7px;top:32px;width:142px;height:10px;background:linear-gradient(90deg,#c3d1e2,#d6e1ee 70%,#c8d5e4)"></div>
<div class="t" style="left:9px;top:31.5px;font-size:7px;color:#2a2a2a;">市场报价: <b style="font-weight:bold;font-size:6.5px">16:17:46</b></div>
<div class="t" style="left:141px;top:31.5px;font-size:8px;font-weight:bold;color:#222">×</div>
<div class="a" style="left:7px;top:42px;width:142px;height:10px;background:#fff"></div>
<div class="a" style="left:64px;top:43px;width:1px;height:9px;background:#ececec"></div>
<div class="a" style="left:99px;top:43px;width:1px;height:9px;background:#ececec"></div>
<div class="t" style="left:9px;top:41.5px;font-size:7px;color:#2a2a2a;">交易品种</div>
<div class="t r" style="left:64px;width:34px;top:41.5px;font-size:7px;color:#2a2a2a">卖价</div>
<div class="t r" style="left:99px;width:36px;top:41.5px;font-size:7px;color:#2a2a2a">买价</div>
<div class="a" style="left:7px;top:52px;width:135px;height:11px;background:linear-gradient(90deg,#f3fbf0,#f6fcf2)"></div>
<div class="a" style="left:10px;top:55px;width:4.5px;height:4.5px;background:#2e9a4a;transform:rotate(45deg)"></div>
<div class="t" style="left:17.6px;top:52px;font-size:6.7px;color:#b9c4ba;">USDRUB</div>
<div class="t r" style="left:64px;width:34px;top:52px;font-size:7.4px;color:#283a8c">94.8257</div>
<div class="t r" style="left:99px;width:36px;top:52px;font-size:7.4px;color:#283a8c">105.0286</div>
<div class="a" style="left:142px;top:42px;width:7px;height:21px;background:#f7f7f7"></div>
<svg class="a" style="left:140px;top:44px" width="10" height="20"><path d="M2.5 5 L5 2.5 L7.5 5" fill="none" stroke="#555" stroke-width="0.9"/><path d="M2.5 14 L5 16.5 L7.5 14" fill="none" stroke="#555" stroke-width="0.9"/></svg>
<div class="a" style="left:7px;top:63.5px;width:142px;height:1px;background:#a0a0a0"></div>
<div class="a" style="left:8px;top:64px;width:37px;height:11px;background:#fff;border:1px solid #8a8a8a;border-top:none"></div>
<div class="t" style="left:13px;top:63.5px;font-size:7.2px;color:#222;">交易品种</div>
<div class="a" style="left:76px;top:65px;width:1px;height:9px;background:#c8c8c8"></div>
<div class="t" style="left:51px;top:63.5px;font-size:7.2px;color:#a0a0a0;">图钉图</div>
<div class="a" style="left:5px;top:76px;width:145px;height:1px;background:#dadada"></div>
<div class="a" style="left:7px;top:79px;width:142px;height:10px;background:linear-gradient(90deg,#c3d1e2,#d6e1ee 70%,#c8d5e4)"></div>
<div class="t" style="left:9px;top:78.5px;font-size:7px;color:#2a2a2a;">导航</div>
<div class="t" style="left:141px;top:78.5px;font-size:8px;font-weight:bold;color:#222">×</div>
<div class="a" style="left:7px;top:89px;width:142px;height:26px;background:#fff"></div>
<svg class="a" style="left:9px;top:88px" width="40" height="29"><rect x="1" y="0.8" width="7.2" height="7" fill="#e4eef8" stroke="#7a9ac8" stroke-width="0.8"/><path d="M1 2.8 H8.2 M3.5 2.8 V7.8 M3.5 5.3 H8.2" stroke="#8aaad0" stroke-width="0.6"/><path d="M4.5 9 V28" stroke="#b8b8b8" stroke-width="0.6" stroke-dasharray="1 1"/><rect x="2.5" y="12" width="4" height="4" fill="#fff" stroke="#a8a8a8" stroke-width="0.6"/><path d="M3.4 14 H5.6" stroke="#666" stroke-width="0.5"/><path d="M14.5 18 V28" stroke="#b8b8b8" stroke-width="0.6" stroke-dasharray="1 1"/><rect x="13" y="20.5" width="4" height="4" fill="#fff" stroke="#a8a8a8" stroke-width="0.6"/><path d="M13.9 22.5 H16.1" stroke="#666" stroke-width="0.5"/><path d="M17 22.5 H22" stroke="#b8b8b8" stroke-width="0.6" stroke-dasharray="1 1"/><rect x="11" y="9.5" width="9" height="8.5" rx="2" fill="#6ab02a"/><rect x="15" y="10" width="5" height="8" rx="1.5" fill="#e8b82a"/><rect x="23" y="18.5" width="6.5" height="9.5" rx="1.5" fill="#2a9ac8"/><rect x="25" y="20.5" width="2.5" height="3" fill="#d8f0fa"/></svg>
<div class="t" style="left:21px;top:87.5px;font-size:7.0px;color:#2a2a2a;transform:scaleY(1.08)">MetaTrader 4</div>
<div class="t" style="left:31.7px;top:96.5px;font-size:7.4px;color:#2a2a2a;">账户</div>
<div class="t" style="left:42.5px;top:105.5px;font-size:7.0px;color:#2a2a2a;transform:scaleY(1.08)">ICMarketsSC-Live11</div>
<svg class="a" style="left:140px;top:90px" width="10" height="24"><path d="M2.5 5 L5 2.5 L7.5 5" fill="none" stroke="#555" stroke-width="0.9"/><path d="M2.5 19 L5 21.5 L7.5 19" fill="none" stroke="#555" stroke-width="0.9"/></svg>
<div class="a" style="left:7px;top:115.5px;width:142px;height:1px;background:#a0a0a0"></div>
<div class="a" style="left:8px;top:116px;width:24px;height:11px;background:#fff;border:1px solid #8a8a8a;border-top:none"></div>
<div class="t" style="left:13px;top:116px;font-size:7.2px;color:#222;">常用</div>
<div class="t" style="left:37px;top:116px;font-size:7.2px;color:#a0a0a0;">收藏夹</div>
<div class="a" style="left:63px;top:117px;width:1px;height:9px;background:#c8c8c8"></div>
<div class="a" style="left:149px;top:32px;width:1px;height:98px;background:#d0d0d0"></div>
<div class="a" style="left:150px;top:117px;width:1118px;height:13px;background:#f0f0f0"></div>
<div class="a" style="left:150px;top:117.5px;width:1118px;height:1px;background:#9a9a9a"></div>
<div class="t" style="left:159px;top:118px;font-size:6.9px;color:#a8a8a8;">AUDUSD,M5</div>
<div class="a" style="left:205px;top:118px;width:57px;height:12px;background:#fff;border:1px solid #8a8a8a;border-top:none"></div>
<div class="t" style="left:211px;top:118.5px;font-size:7.0px;color:#222;">XAUUSDm,M5</div>
<svg class="a" style="left:1250px;top:120px" width="20" height="10"><path d="M4.5 2.5 L3 4.5 L4.5 6.5" fill="none" stroke="#999" stroke-width="0.7"/><path d="M13.5 2.5 L15 4.5 L13.5 6.5" fill="none" stroke="#999" stroke-width="0.7"/></svg>
<div class="a" style="left:14px;top:454px;width:1255px;height:4px;background:#fff"></div>
<div class="a" style="left:14px;top:457.5px;width:1255px;height:1.2px;background:#b8b8b8"></div>
<div class="a" style="left:14px;top:458.7px;width:1255px;height:10.3px;background:#f0f0f0"></div>
<div class="a" style="left:39px;top:460px;width:1px;height:8px;background:#c0c0c0"></div>
<div class="t" style="left:20px;top:458.5px;font-size:7.2px;color:#a8a8a8;">交易</div>
<div class="a" style="left:62px;top:460px;width:1px;height:8px;background:#c0c0c0"></div>
<div class="t" style="left:45px;top:458.5px;font-size:7.2px;color:#a8a8a8;">展示</div>
<div class="a" style="left:62px;top:458px;width:39px;height:11px;background:#fff;border:1px solid #9a9a9a;border-top:none"></div>
<div class="t" style="left:68px;top:458.3px;font-size:7.4px;color:#222;">账户历史</div>
<div class="a" style="left:133px;top:460px;width:1px;height:8px;background:#c0c0c0"></div>
<div class="t" style="left:107px;top:458.5px;font-size:7.2px;color:#a8a8a8;">新闻</div>
<div class="t" style="left:121.9px;top:461px;font-size:6px;line-height:8px;font-weight:bold;color:#d03030">99</div>
<div class="a" style="left:156px;top:460px;width:1px;height:8px;background:#c0c0c0"></div>
<div class="t" style="left:139px;top:458.5px;font-size:7.2px;color:#a8a8a8;">警报</div>
<div class="a" style="left:190px;top:460px;width:1px;height:8px;background:#c0c0c0"></div>
<div class="t" style="left:162px;top:458.5px;font-size:7.2px;color:#a8a8a8;">邮箱</div>
<div class="t" style="left:176.9px;top:461px;font-size:6px;line-height:8px;font-weight:bold;color:#d03030">17</div>
<div class="a" style="left:214px;top:460px;width:1px;height:8px;background:#c0c0c0"></div>
<div class="t" style="left:196px;top:458.5px;font-size:7.2px;color:#a8a8a8;">公司</div>
<div class="a" style="left:250px;top:460px;width:1px;height:8px;background:#c0c0c0"></div>
<div class="t" style="left:220px;top:458.5px;font-size:7.2px;color:#a8a8a8;">市场</div>
<div class="t" style="left:234.9px;top:461px;font-size:6px;line-height:8px;font-weight:bold;color:#d03030">142</div>
<div class="a" style="left:274px;top:460px;width:1px;height:8px;background:#c0c0c0"></div>
<div class="t" style="left:256px;top:458.5px;font-size:7.2px;color:#a8a8a8;">文章</div>
<div class="a" style="left:305px;top:460px;width:1px;height:8px;background:#c0c0c0"></div>
<div class="t" style="left:280px;top:458.5px;font-size:7.2px;color:#a8a8a8;">代码库</div>
<div class="a" style="left:325px;top:460px;width:1px;height:8px;background:#c0c0c0"></div>
<div class="t" style="left:311px;top:458.5px;font-size:7.2px;color:#a8a8a8;">EA</div>
<div class="a" style="left:349px;top:460px;width:1px;height:8px;background:#c0c0c0"></div>
<div class="t" style="left:331px;top:458.5px;font-size:7.2px;color:#a8a8a8;">日志</div>
<div class="a" style="left:5px;top:452px;width:9px;height:17px"></div>
<div class="t" style="left:6px;top:454.5px;font-size:6px;line-height:6.5px;color:#4a5a7a;width:8px;white-space:normal">终端</div>
<div class="a" style="left:350px;top:466px;width:918px;height:3px;background:#fafafa"></div>
<div class="a" style="left:0;top:469px;width:1280px;height:22px;background:#3d3e40"></div>
<div class="a" style="left:0;top:469px;width:1280px;height:1px;background:#2a2b2c"></div>
<svg class="a" style="left:8px;top:475px" width="11" height="11"><rect x="0" y="0" width="4.6" height="4.6" fill="#fff"/><rect x="5.4" y="0" width="4.6" height="4.6" fill="#fff"/><rect x="0" y="5.4" width="4.6" height="4.6" fill="#fff"/><rect x="5.4" y="5.4" width="4.6" height="4.6" fill="#fff"/></svg>
<svg class="a" style="left:35px;top:474px" width="14" height="14"><rect x="0.5" y="2" width="13" height="10" fill="#f2cf5b"/><rect x="0.5" y="2" width="6" height="2" fill="#e3b23c"/><rect x="3" y="7" width="8" height="3" fill="#3a8ed0"/></svg>
<div class="a" style="left:31px;top:489.5px;width:22px;height:1.5px;background:#8ab4e0"></div>
<svg class="a" style="left:63px;top:474px" width="14" height="14"><rect x="0.5" y="0.5" width="13" height="13" rx="2" fill="#2aa6b8"/><path d="M4 10 V5 H10 V10" fill="none" stroke="#fff" stroke-width="1.6"/><path d="M7 10 V7.5" stroke="#fff" stroke-width="1.4"/></svg>
<svg class="a" style="left:91px;top:474px" width="14" height="14"><rect x="0.5" y="0.5" width="13" height="13" rx="2" fill="#e8683a"/><path d="M4 5 L7 9 L10 5" fill="none" stroke="#fff" stroke-width="1.6"/></svg>
<div class="a" style="left:87px;top:489.5px;width:22px;height:1.5px;background:#8ab4e0"></div>
<svg class="a" style="left:118px;top:474px" width="14" height="14"><circle cx="7" cy="7" r="6.5" fill="#f0f0f0"/><circle cx="7" cy="7" r="5.5" fill="#e02828"/><path d="M3.5 8 Q7 3 10.5 6" fill="none" stroke="#fff" stroke-width="1.3"/></svg>
<div class="a" style="left:114px;top:489.5px;width:22px;height:1.5px;background:#8ab4e0"></div>
<svg class="a" style="left:146px;top:473px" width="15" height="15"><rect x="1" y="1" width="7" height="8" fill="#2a5bb8"/><rect x="4" y="6" width="10" height="6" fill="#c8d8ec"/><circle cx="11" cy="11" r="3" fill="#d8e0e8"/></svg>
<div class="a" style="left:142px;top:489.5px;width:22px;height:1.5px;background:#8ab4e0"></div>
<svg class="a" style="left:1118px;top:475px" width="10" height="10"><path d="M2 6 L5 3 L8 6" fill="none" stroke="#ccc" stroke-width="0.9"/></svg>
<svg class="a" style="left:1131px;top:474px" width="11" height="11"><rect x="0" y="0" width="11" height="11" rx="2" fill="#2fb850"/><ellipse cx="5" cy="5" rx="3" ry="2.4" fill="#fff"/></svg>
<svg class="a" style="left:1146px;top:474px" width="12" height="12"><rect x="1.5" y="1.5" width="8" height="6" fill="none" stroke="#d0d0d0" stroke-width="1"/><path d="M3 10 H8" stroke="#d0d0d0" stroke-width="1"/></svg>
<svg class="a" style="left:1161px;top:474px" width="10" height="11"><path d="M2 4 H4 L7 1.5 V9.5 L4 7 H2 Z" fill="none" stroke="#d0d0d0" stroke-width="0.9"/></svg>
<div class="t" style="left:1172px;top:474px;font-size:8.5px;color:#e8e8e8">中</div>
<svg class="a" style="left:1188px;top:474px" width="11" height="11"><circle cx="5.5" cy="5.5" r="5" fill="#e85a32"/><text x="3" y="8.5" font-size="8" font-family="Liberation Sans" font-weight="bold" fill="#fff">S</text></svg>
<div class="t" style="left:1216px;top:469.5px;font-size:7.6px;color:#e8e8e8">0:17</div>
<div class="t" style="left:1203px;top:480px;font-size:7.6px;color:#e8e8e8">2025/10/15</div>
<svg class="a" style="left:1250px;top:474px" width="14" height="14"><path d="M1 1 H11 V8 H5 L2 10 V8 H1 Z" fill="none" stroke="#e0e0e0" stroke-width="1"/><circle cx="10" cy="10" r="3.3" fill="#3d3e40" stroke="#e0e0e0" stroke-width="0.8"/><text x="8.6" y="12.2" font-size="5" fill="#fff" font-family="Liberation Sans">1</text></svg>
<div class="t" style="left:1094px;top:451.5px;font-size:17.6px;line-height:24px;color:#f4f4f4;font-weight:normal;letter-spacing:-0.5px;-webkit-text-stroke:0.5px #f4f4f4;text-shadow:1px 0 0 #4a4a4a,-1px 0 0 #4a4a4a,0 1px 0 #4a4a4a,0 -1px 0 #4a4a4a,1px 1px 1px #333">@16年的外汇交易经验</div>
<svg class="a" style="left:1068px;top:456px" width="18" height="20"><circle cx="9" cy="8.5" r="6.5" fill="none" stroke="#555" stroke-width="3.4"/><circle cx="9" cy="8.5" r="6.5" fill="none" stroke="#fff" stroke-width="2"/><path d="M5 14 L4 19 L9.5 15.5" fill="#fff" stroke="#555" stroke-width="0.5"/></svg>
</body></html>
